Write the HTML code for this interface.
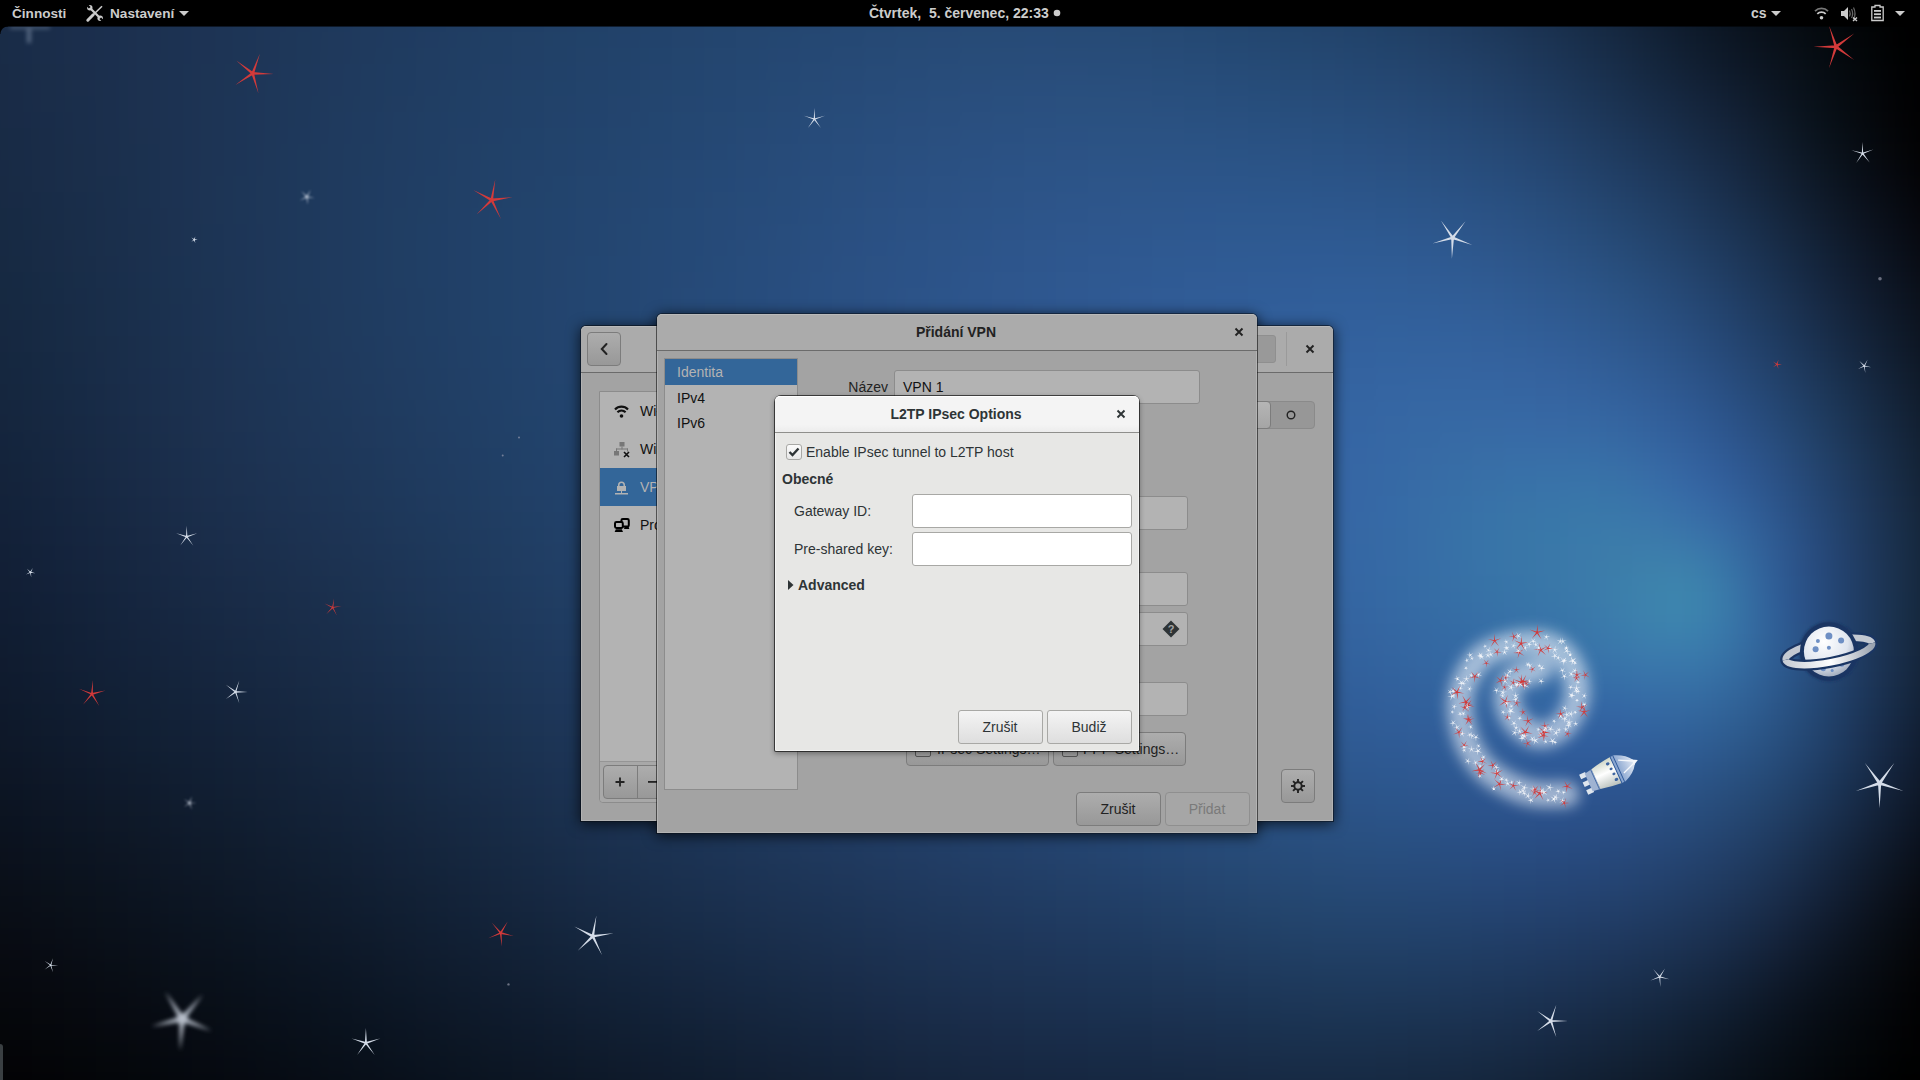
<!DOCTYPE html><html><head><meta charset="utf-8"><style>
*{box-sizing:border-box;margin:0;padding:0}
html,body{width:1920px;height:1080px;overflow:hidden;background:#000;font-family:"Liberation Sans",sans-serif}
.a{position:absolute}
.t{position:absolute;white-space:pre;font-family:"Liberation Sans",sans-serif}
svg{position:absolute;overflow:visible}
</style></head><body><div class="a" style="left:0;top:0;width:1920px;height:1080px;overflow:hidden"><div id="bgw" style="position:absolute;left:-48px;top:-48px;width:2016px;height:1176px;filter:blur(13px)"><div style="height:16px;background:linear-gradient(90deg,#192a45 0px,#192b47 32px,#1a2c49 64px,#1a2d4a 96px,#1b2e4c 128px,#1b2f4e 160px,#1c3150 192px,#1c3251 224px,#1d3353 256px,#1d3455 288px,#1d3557 320px,#1e3759 352px,#1e385a 384px,#1e395c 416px,#1f3a5d 448px,#1f3b5f 480px,#1f3c60 512px,#203d62 544px,#203e63 576px,#203f64 608px,#203f65 640px,#214067 672px,#214168 704px,#214269 736px,#22426a 768px,#22436b 800px,#23446c 832px,#23446d 864px,#23456d 896px,#24456e 928px,#24456e 960px,#24466e 992px,#24466e 1024px,#24466e 1056px,#24466e 1088px,#24456d 1120px,#23456c 1152px,#23446b 1184px,#22436a 1216px,#214268 1248px,#204166 1280px,#204064 1312px,#1f3e62 1344px,#1e3d60 1376px,#1d3b5d 1408px,#1c395a 1440px,#1b3656 1472px,#1a3352 1504px,#18304d 1536px,#172c47 1568px,#152841 1600px,#12243a 1632px,#101f32 1664px,#0e1b2b 1696px,#0b1623 1728px,#09121c 1760px,#070d15 1792px,#050a0f 1824px,#030609 1856px,#010304 1888px,#000000 1920px,#000000 1952px,#000000 1984px,#000000 2016px)"></div><div style="height:16px;background:linear-gradient(90deg,#192a45 0px,#192b47 32px,#1a2c49 64px,#1a2d4a 96px,#1b2e4c 128px,#1b2f4e 160px,#1c3150 192px,#1c3252 224px,#1d3353 256px,#1d3455 288px,#1e3657 320px,#1e3759 352px,#1e385b 384px,#1f395c 416px,#1f3a5e 448px,#1f3b5f 480px,#1f3c61 512px,#203d62 544px,#203e64 576px,#203f65 608px,#214066 640px,#214167 672px,#214169 704px,#22426a 736px,#22436b 768px,#23446c 800px,#23446d 832px,#23456e 864px,#24456f 896px,#24466f 928px,#244670 960px,#254770 992px,#254770 1024px,#254770 1056px,#244770 1088px,#24476f 1120px,#24466e 1152px,#23456d 1184px,#23456c 1216px,#22446a 1248px,#214369 1280px,#204167 1312px,#204065 1344px,#1f3e62 1376px,#1e3c60 1408px,#1d3a5d 1440px,#1c3859 1472px,#1b3555 1504px,#1a3250 1536px,#182e4a 1568px,#162a44 1600px,#14263d 1632px,#112135 1664px,#0f1c2d 1696px,#0c1726 1728px,#0a131e 1760px,#070f17 1792px,#050b11 1824px,#03070b 1856px,#010405 1888px,#000000 1920px,#000000 1952px,#000000 1984px,#000000 2016px)"></div><div style="height:16px;background:linear-gradient(90deg,#192a45 0px,#192b47 32px,#1a2c48 64px,#1a2d4a 96px,#1b2e4c 128px,#1b2f4e 160px,#1c3150 192px,#1c3252 224px,#1d3354 256px,#1d3455 288px,#1e3657 320px,#1e3759 352px,#1e385b 384px,#1f395d 416px,#1f3a5e 448px,#1f3c60 480px,#203d62 512px,#203e63 544px,#203f64 576px,#213f66 608px,#214067 640px,#214168 672px,#22426a 704px,#22436b 736px,#22446c 768px,#23446d 800px,#23456e 832px,#24466f 864px,#244670 896px,#254771 928px,#254771 960px,#254872 992px,#254872 1024px,#254872 1056px,#254872 1088px,#254871 1120px,#254771 1152px,#244770 1184px,#23466e 1216px,#23456d 1248px,#22446b 1280px,#214369 1312px,#214167 1344px,#204065 1376px,#1f3e63 1408px,#1e3c60 1440px,#1d3a5c 1472px,#1c3758 1504px,#1b3453 1536px,#19304e 1568px,#172c47 1600px,#152840 1632px,#122338 1664px,#101e30 1696px,#0d1928 1728px,#0a1420 1760px,#081019 1792px,#060c13 1824px,#04080d 1856px,#020507 1888px,#000101 1920px,#000000 1952px,#000000 1984px,#000000 2016px)"></div><div style="height:16px;background:linear-gradient(90deg,#182a45 0px,#192b46 32px,#1a2c48 64px,#1a2d4a 96px,#1b2e4c 128px,#1b2f4e 160px,#1c3150 192px,#1c3252 224px,#1d3354 256px,#1d3556 288px,#1e3658 320px,#1e375a 352px,#1e385b 384px,#1f3a5d 416px,#1f3b5f 448px,#1f3c61 480px,#203d62 512px,#203e64 544px,#203f65 576px,#214066 608px,#214168 640px,#214269 672px,#22426a 704px,#22436c 736px,#23446d 768px,#23456e 800px,#24466f 832px,#244670 864px,#254771 896px,#254872 928px,#254873 960px,#264873 992px,#264974 1024px,#264974 1056px,#264974 1088px,#264973 1120px,#254973 1152px,#254872 1184px,#244771 1216px,#23476f 1248px,#23456d 1280px,#22446c 1312px,#21436a 1344px,#214268 1376px,#204066 1408px,#1f3e63 1440px,#1e3c60 1472px,#1d395c 1504px,#1c3657 1536px,#1a3251 1568px,#182e4b 1600px,#162a43 1632px,#13253b 1664px,#112033 1696px,#0e1a2b 1728px,#0b1623 1760px,#09111c 1792px,#070d15 1824px,#050a0f 1856px,#030609 1888px,#010203 1920px,#000000 1952px,#000000 1984px,#000000 2016px)"></div><div style="height:16px;background:linear-gradient(90deg,#182a45 0px,#192b46 32px,#1a2c48 64px,#1a2d4a 96px,#1b2e4c 128px,#1b2f4e 160px,#1c3150 192px,#1c3252 224px,#1d3354 256px,#1d3556 288px,#1e3658 320px,#1e375a 352px,#1e395c 384px,#1f3a5e 416px,#1f3b5f 448px,#1f3c61 480px,#203d63 512px,#203e64 544px,#203f66 576px,#214067 608px,#214169 640px,#22426a 672px,#22436b 704px,#23446d 736px,#23456e 768px,#24456f 800px,#244670 832px,#254772 864px,#254873 896px,#254874 928px,#264974 960px,#264975 992px,#264a75 1024px,#274a76 1056px,#274a76 1088px,#264a75 1120px,#264a75 1152px,#264974 1184px,#254973 1216px,#244872 1248px,#244770 1280px,#23466e 1312px,#22456d 1344px,#22436b 1376px,#214269 1408px,#204066 1440px,#203e63 1472px,#1e3b5f 1504px,#1d385a 1536px,#1b3455 1568px,#19304e 1600px,#172c47 1632px,#14273f 1664px,#122136 1696px,#0f1c2e 1728px,#0c1725 1760px,#0a131e 1792px,#080f17 1824px,#050b10 1856px,#03070a 1888px,#010305 1920px,#000000 1952px,#000000 1984px,#000000 2016px)"></div><div style="height:16px;background:linear-gradient(90deg,#182a44 0px,#192b46 32px,#192c48 64px,#1a2d4a 96px,#1b2e4c 128px,#1b2f4e 160px,#1c3150 192px,#1c3252 224px,#1d3354 256px,#1d3556 288px,#1e3658 320px,#1e385a 352px,#1f395c 384px,#1f3a5e 416px,#1f3b60 448px,#203c62 480px,#203e63 512px,#203f65 544px,#214066 576px,#214168 608px,#214269 640px,#22426b 672px,#22436c 704px,#23446d 736px,#23456f 768px,#244670 800px,#244772 832px,#254873 864px,#254874 896px,#264975 928px,#264a76 960px,#274a77 992px,#274b77 1024px,#274b77 1056px,#274b78 1088px,#274b77 1120px,#274b77 1152px,#264b76 1184px,#264a75 1216px,#254974 1248px,#244873 1280px,#244771 1312px,#234670 1344px,#23456e 1376px,#22446c 1408px,#214269 1440px,#214066 1472px,#203d63 1504px,#1e3a5e 1536px,#1d3758 1568px,#1b3352 1600px,#182e4a 1632px,#162942 1664px,#13243a 1696px,#101e31 1728px,#0d1928 1760px,#0b1421 1792px,#091019 1824px,#060c12 1856px,#04080c 1888px,#020406 1920px,#000000 1952px,#000000 1984px,#000000 2016px)"></div><div style="height:16px;background:linear-gradient(90deg,#182944 0px,#192b46 32px,#192c48 64px,#1a2d4a 96px,#1b2e4c 128px,#1b2f4e 160px,#1c3150 192px,#1c3252 224px,#1d3354 256px,#1d3556 288px,#1e3658 320px,#1e385a 352px,#1f395c 384px,#1f3a5e 416px,#1f3c60 448px,#203d62 480px,#203e64 512px,#203f65 544px,#214067 576px,#214168 608px,#22426a 640px,#22436b 672px,#22446d 704px,#23456e 736px,#244670 768px,#244771 800px,#254773 832px,#254874 864px,#264975 896px,#264a76 928px,#274b77 960px,#274b78 992px,#284c79 1024px,#284c79 1056px,#284c7a 1088px,#284c79 1120px,#284c79 1152px,#274c79 1184px,#274b78 1216px,#264b77 1248px,#254a75 1280px,#254974 1312px,#244872 1344px,#244771 1376px,#23456f 1408px,#22446d 1440px,#22426a 1472px,#213f66 1504px,#203d62 1536px,#1e395c 1568px,#1c3556 1600px,#19304e 1632px,#172b46 1664px,#14263d 1696px,#112034 1728px,#0f1b2c 1760px,#0c1624 1792px,#0a121c 1824px,#070d14 1856px,#04090e 1888px,#020507 1920px,#000101 1952px,#000000 1984px,#000000 2016px)"></div><div style="height:16px;background:linear-gradient(90deg,#182944 0px,#182a45 32px,#192c47 64px,#1a2d49 96px,#1b2e4b 128px,#1b2f4e 160px,#1c3150 192px,#1c3252 224px,#1d3454 256px,#1d3556 288px,#1e3659 320px,#1e385b 352px,#1f395d 384px,#1f3b5f 416px,#1f3c61 448px,#203d62 480px,#203e64 512px,#213f66 544px,#214068 576px,#214169 608px,#22426b 640px,#22436c 672px,#23446e 704px,#23456f 736px,#244671 768px,#244772 800px,#254874 832px,#264975 864px,#264a77 896px,#274b78 928px,#274b79 960px,#284c7a 992px,#284d7a 1024px,#284d7b 1056px,#294d7b 1088px,#294d7c 1120px,#284d7b 1152px,#284d7b 1184px,#274d7a 1216px,#274c79 1248px,#264b78 1280px,#264b77 1312px,#254a75 1344px,#254974 1376px,#244772 1408px,#244670 1440px,#23446d 1472px,#22426a 1504px,#213f65 1536px,#1f3b60 1568px,#1d375a 1600px,#1b3352 1632px,#182e4a 1664px,#152841 1696px,#132338 1728px,#101d2f 1760px,#0d1827 1792px,#0b141f 1824px,#080f16 1856px,#050a0f 1888px,#030609 1920px,#010102 1952px,#000000 1984px,#000000 2016px)"></div><div style="height:16px;background:linear-gradient(90deg,#182943 0px,#182a45 32px,#192b47 64px,#1a2d49 96px,#1b2e4b 128px,#1b2f4d 160px,#1c3150 192px,#1c3252 224px,#1d3454 256px,#1d3556 288px,#1e3759 320px,#1e385b 352px,#1f395d 384px,#1f3b5f 416px,#1f3c61 448px,#203d63 480px,#203f65 512px,#214066 544px,#214168 576px,#21426a 608px,#22436b 640px,#22446d 672px,#23456e 704px,#234670 736px,#244772 768px,#254873 800px,#254975 832px,#264a76 864px,#274a78 896px,#274b79 928px,#284c7a 960px,#284d7b 992px,#294d7c 1024px,#294e7d 1056px,#294e7d 1088px,#294f7d 1120px,#294f7d 1152px,#294e7d 1184px,#284e7c 1216px,#284e7c 1248px,#274d7b 1280px,#264c79 1312px,#264b78 1344px,#264a77 1376px,#254975 1408px,#254873 1440px,#244671 1472px,#23446d 1504px,#224169 1536px,#203e64 1568px,#1e3a5d 1600px,#1c3556 1632px,#19304e 1664px,#172b45 1696px,#14253d 1728px,#122034 1760px,#0f1b2b 1792px,#0c1522 1824px,#081019 1856px,#060b11 1888px,#04060a 1920px,#010203 1952px,#000000 1984px,#000000 2016px)"></div><div style="height:16px;background:linear-gradient(90deg,#172943 0px,#182a45 32px,#192b47 64px,#1a2d49 96px,#1a2e4b 128px,#1b2f4d 160px,#1c3150 192px,#1c3252 224px,#1d3454 256px,#1d3557 288px,#1e3759 320px,#1e385b 352px,#1f3a5d 384px,#1f3b5f 416px,#203c61 448px,#203e63 480px,#203f65 512px,#214067 544px,#214169 576px,#22426a 608px,#22436c 640px,#23446e 672px,#23456f 704px,#244671 736px,#244773 768px,#254874 800px,#264976 832px,#264a77 864px,#274b79 896px,#284c7a 928px,#284d7c 960px,#294e7d 992px,#294e7e 1024px,#294f7e 1056px,#2a4f7f 1088px,#2a507f 1120px,#2a507f 1152px,#2a507f 1184px,#294f7f 1216px,#284f7e 1248px,#284e7d 1280px,#274e7c 1312px,#274d7b 1344px,#274c7a 1376px,#264b78 1408px,#264a76 1440px,#254874 1472px,#244671 1504px,#23436d 1536px,#224068 1568px,#203c61 1600px,#1d385a 1632px,#1b3352 1664px,#182d4a 1696px,#162841 1728px,#132238 1760px,#101d2f 1792px,#0d1725 1824px,#09121b 1856px,#060c12 1888px,#04070b 1920px,#020204 1952px,#000000 1984px,#000000 2016px)"></div><div style="height:16px;background:linear-gradient(90deg,#172943 0px,#182a45 32px,#192b47 64px,#192c49 96px,#1a2e4b 128px,#1b2f4d 160px,#1c3150 192px,#1c3252 224px,#1d3454 256px,#1d3557 288px,#1e3759 320px,#1e385b 352px,#1f3a5e 384px,#1f3b60 416px,#203d62 448px,#203e64 480px,#203f66 512px,#214067 544px,#214169 576px,#22426b 608px,#22436d 640px,#23446e 672px,#234670 704px,#244772 736px,#254873 768px,#254975 800px,#264a77 832px,#274b79 864px,#274c7a 896px,#284d7c 928px,#294d7d 960px,#294e7e 992px,#2a4f7f 1024px,#2a5080 1056px,#2a5081 1088px,#2a5181 1120px,#2a5181 1152px,#2a5181 1184px,#2a5181 1216px,#295080 1248px,#295080 1280px,#284f7f 1312px,#284f7e 1344px,#284e7d 1376px,#274d7c 1408px,#274c7a 1440px,#264a77 1472px,#254874 1504px,#244570 1536px,#23426b 1568px,#213e65 1600px,#1f3a5e 1632px,#1c3556 1664px,#1a304e 1696px,#172b45 1728px,#15253c 1760px,#121f33 1792px,#0e1a28 1824px,#0a131d 1856px,#070d14 1888px,#05080c 1920px,#030305 1952px,#000000 1984px,#000000 2016px)"></div><div style="height:16px;background:linear-gradient(90deg,#172942 0px,#182a44 32px,#182b46 64px,#192c48 96px,#1a2e4b 128px,#1b2f4d 160px,#1c314f 192px,#1c3252 224px,#1d3454 256px,#1d3557 288px,#1e3759 320px,#1e385c 352px,#1f3a5e 384px,#1f3b60 416px,#203d62 448px,#203e64 480px,#213f66 512px,#214068 544px,#21426a 576px,#22436b 608px,#22446d 640px,#23456f 672px,#234671 704px,#244772 736px,#254874 768px,#264976 800px,#264a78 832px,#274b7a 864px,#284c7b 896px,#284d7d 928px,#294e7e 960px,#2a4f7f 992px,#2a5081 1024px,#2a5082 1056px,#2b5182 1088px,#2b5183 1120px,#2b5283 1152px,#2b5283 1184px,#2b5283 1216px,#2a5283 1248px,#2a5182 1280px,#295182 1312px,#295081 1344px,#285080 1376px,#284f7f 1408px,#284d7d 1440px,#274c7b 1472px,#264a78 1504px,#254874 1536px,#24456f 1568px,#224169 1600px,#203d62 1632px,#1d385b 1664px,#1b3353 1696px,#182d4a 1728px,#162840 1760px,#132237 1792px,#0f1c2c 1824px,#0b1520 1856px,#080f17 1888px,#05090e 1920px,#030406 1952px,#010000 1984px,#000000 2016px)"></div><div style="height:16px;background:linear-gradient(90deg,#172842 0px,#182a44 32px,#182b46 64px,#192c48 96px,#1a2e4a 128px,#1b2f4d 160px,#1b314f 192px,#1c3252 224px,#1d3454 256px,#1d3557 288px,#1e3759 320px,#1e395c 352px,#1f3a5e 384px,#1f3c60 416px,#203d62 448px,#203e64 480px,#214066 512px,#214168 544px,#21426a 576px,#22436c 608px,#22446e 640px,#234570 672px,#244671 704px,#244773 736px,#254875 768px,#264a77 800px,#274b79 832px,#274c7b 864px,#284d7c 896px,#294e7e 928px,#294f7f 960px,#2a5081 992px,#2a5082 1024px,#2b5183 1056px,#2b5284 1088px,#2c5285 1120px,#2c5385 1152px,#2b5385 1184px,#2b5385 1216px,#2b5385 1248px,#2a5385 1280px,#2a5284 1312px,#2a5284 1344px,#295183 1376px,#295082 1408px,#294f80 1440px,#284e7e 1472px,#274c7b 1504px,#264a77 1536px,#254773 1568px,#23436d 1600px,#213f66 1632px,#1f3b5f 1664px,#1c3657 1696px,#1a304e 1728px,#172a45 1760px,#14243b 1792px,#111e2f 1824px,#0c1724 1856px,#091019 1888px,#060a10 1920px,#040508 1952px,#010000 1984px,#000000 2016px)"></div><div style="height:16px;background:linear-gradient(90deg,#172841 0px,#172943 32px,#182b46 64px,#192c48 96px,#1a2e4a 128px,#1b2f4d 160px,#1b314f 192px,#1c3252 224px,#1d3454 256px,#1d3557 288px,#1e3759 320px,#1e395c 352px,#1f3a5e 384px,#1f3c60 416px,#203d63 448px,#203e65 480px,#214067 512px,#214169 544px,#22426b 576px,#22436c 608px,#23446e 640px,#234670 672px,#244772 704px,#254874 736px,#254976 768px,#264a78 800px,#274b7a 832px,#284c7c 864px,#284d7d 896px,#294e7f 928px,#2a4f81 960px,#2a5082 992px,#2b5183 1024px,#2b5285 1056px,#2c5386 1088px,#2c5386 1120px,#2c5487 1152px,#2c5487 1184px,#2c5488 1216px,#2c5487 1248px,#2b5487 1280px,#2b5487 1312px,#2b5386 1344px,#2a5386 1376px,#2a5285 1408px,#2a5183 1440px,#295081 1472px,#284e7e 1504px,#274c7b 1536px,#264976 1568px,#244671 1600px,#22426a 1632px,#203d63 1664px,#1e385b 1696px,#1b3353 1728px,#192d49 1760px,#15273f 1792px,#122033 1824px,#0e1927 1856px,#0a121c 1888px,#070b13 1920px,#05060a 1952px,#020102 1984px,#000000 2016px)"></div><div style="height:16px;background:linear-gradient(90deg,#162841 0px,#172943 32px,#182b45 64px,#192c48 96px,#1a2e4a 128px,#1a2f4c 160px,#1b314f 192px,#1c3252 224px,#1d3454 256px,#1d3657 288px,#1e3759 320px,#1e395c 352px,#1f3a5e 384px,#1f3c61 416px,#203d63 448px,#203f65 480px,#214067 512px,#214169 544px,#22426b 576px,#22446d 608px,#23456f 640px,#234671 672px,#244773 704px,#254875 736px,#254977 768px,#264a79 800px,#274c7b 832px,#284d7c 864px,#294e7e 896px,#294f80 928px,#2a5082 960px,#2b5183 992px,#2b5285 1024px,#2c5386 1056px,#2c5387 1088px,#2c5488 1120px,#2d5589 1152px,#2d5589 1184px,#2c558a 1216px,#2c558a 1248px,#2c558a 1280px,#2c5589 1312px,#2b5589 1344px,#2b5488 1376px,#2b5488 1408px,#2a5386 1440px,#2a5284 1472px,#295082 1504px,#284e7e 1536px,#274b7a 1568px,#264875 1600px,#24446e 1632px,#214068 1664px,#1f3b60 1696px,#1d3657 1728px,#1a304e 1760px,#172943 1792px,#132237 1824px,#0f1b2b 1856px,#0b1420 1888px,#080d16 1920px,#06070c 1952px,#030204 1984px,#000000 2016px)"></div><div style="height:16px;background:linear-gradient(90deg,#162841 0px,#172943 32px,#182a45 64px,#182c47 96px,#192d4a 128px,#1a2f4c 160px,#1b314f 192px,#1c3252 224px,#1d3454 256px,#1d3657 288px,#1e3759 320px,#1e395c 352px,#1f3a5e 384px,#1f3c61 416px,#203d63 448px,#203f65 480px,#214067 512px,#214169 544px,#22436b 576px,#22446d 608px,#23456f 640px,#244671 672px,#244773 704px,#254875 736px,#264a77 768px,#264b79 800px,#274c7b 832px,#284d7d 864px,#294e7f 896px,#2a4f81 928px,#2a5083 960px,#2b5184 992px,#2c5286 1024px,#2c5387 1056px,#2d5488 1088px,#2d558a 1120px,#2d558a 1152px,#2d568b 1184px,#2d568b 1216px,#2d568c 1248px,#2d568c 1280px,#2c568c 1312px,#2c568c 1344px,#2c568b 1376px,#2c558a 1408px,#2b5589 1440px,#2b5487 1472px,#2a5285 1504px,#295081 1536px,#284e7d 1568px,#274b78 1600px,#254772 1632px,#23436c 1664px,#203e64 1696px,#1e395c 1728px,#1b3352 1760px,#182c47 1792px,#14253b 1824px,#101d2f 1856px,#0d1623 1888px,#090f19 1920px,#06090f 1952px,#040306 1984px,#010000 2016px)"></div><div style="height:16px;background:linear-gradient(90deg,#162840 0px,#172942 32px,#172a44 64px,#182c47 96px,#192d49 128px,#1a2f4c 160px,#1b304f 192px,#1c3251 224px,#1d3454 256px,#1d3657 288px,#1e3759 320px,#1e395c 352px,#1f3a5e 384px,#1f3c61 416px,#203e63 448px,#203f65 480px,#214068 512px,#21426a 544px,#22436c 576px,#22446e 608px,#234570 640px,#244672 672px,#244874 704px,#254976 736px,#264a78 768px,#274b7a 800px,#274c7c 832px,#284d7e 864px,#294f80 896px,#2a5082 928px,#2b5184 960px,#2b5285 992px,#2c5387 1024px,#2c5488 1056px,#2d558a 1088px,#2d558b 1120px,#2e568c 1152px,#2e578d 1184px,#2e578d 1216px,#2d578e 1248px,#2d588e 1280px,#2d588e 1312px,#2d588e 1344px,#2d578e 1376px,#2d578d 1408px,#2c568c 1440px,#2c558a 1472px,#2b5488 1504px,#2b5285 1536px,#295081 1568px,#284d7c 1600px,#264a76 1632px,#244670 1664px,#224168 1696px,#1f3b60 1728px,#1c3556 1760px,#192f4c 1792px,#152740 1824px,#122033 1856px,#0e1827 1888px,#0a111c 1920px,#070a12 1952px,#040508 1984px,#020000 2016px)"></div><div style="height:16px;background:linear-gradient(90deg,#152740 0px,#162942 32px,#172a44 64px,#182c46 96px,#192d49 128px,#1a2f4c 160px,#1b304e 192px,#1c3251 224px,#1c3454 256px,#1d3557 288px,#1e3759 320px,#1e395c 352px,#1f3a5e 384px,#1f3c61 416px,#203e63 448px,#203f66 480px,#214068 512px,#21426a 544px,#22436c 576px,#22446e 608px,#234570 640px,#244772 672px,#244874 704px,#254976 736px,#264a78 768px,#274b7b 800px,#284d7d 832px,#284e7f 864px,#294f81 896px,#2a5083 928px,#2b5185 960px,#2c5286 992px,#2c5388 1024px,#2d548a 1056px,#2d558b 1088px,#2e568c 1120px,#2e578d 1152px,#2e578e 1184px,#2e588f 1216px,#2e5890 1248px,#2e5990 1280px,#2e5990 1312px,#2e5990 1344px,#2e5990 1376px,#2d5990 1408px,#2d588f 1440px,#2d578d 1472px,#2c568b 1504px,#2c5488 1536px,#2b5284 1568px,#294f80 1600px,#274c7a 1632px,#254874 1664px,#23446d 1696px,#213e64 1728px,#1e385b 1760px,#1a3250 1792px,#172a44 1824px,#132237 1856px,#0f1a2b 1888px,#0c131f 1920px,#080c15 1952px,#05060b 1984px,#020001 2016px)"></div><div style="height:16px;background:linear-gradient(90deg,#15273f 0px,#162841 32px,#172a44 64px,#182b46 96px,#192d49 128px,#1a2f4b 160px,#1b304e 192px,#1c3251 224px,#1c3454 256px,#1d3557 288px,#1e3759 320px,#1e395c 352px,#1f3a5e 384px,#1f3c61 416px,#203e63 448px,#203f66 480px,#214068 512px,#21426a 544px,#22436c 576px,#23446e 608px,#234570 640px,#244772 672px,#254875 704px,#254977 736px,#264a79 768px,#274c7b 800px,#284d7d 832px,#294e7f 864px,#2a4f82 896px,#2a5084 928px,#2b5286 960px,#2c5387 992px,#2c5489 1024px,#2d558b 1056px,#2e568c 1088px,#2e578e 1120px,#2e578f 1152px,#2e5890 1184px,#2f5991 1216px,#2f5991 1248px,#2f5a92 1280px,#2f5a92 1312px,#2e5a93 1344px,#2e5a93 1376px,#2e5a92 1408px,#2e5a91 1440px,#2e5990 1472px,#2d588e 1504px,#2d568b 1536px,#2c5488 1568px,#2a5283 1600px,#294f7e 1632px,#274b78 1664px,#244671 1696px,#224169 1728px,#1f3b5f 1760px,#1c3455 1792px,#182d48 1824px,#14253c 1856px,#101d2f 1888px,#0d1523 1920px,#090e18 1952px,#06080d 1984px,#030203 2016px)"></div><div style="height:16px;background:linear-gradient(90deg,#15273f 0px,#162841 32px,#172a43 64px,#182b46 96px,#192d48 128px,#1a2e4b 160px,#1b304e 192px,#1b3251 224px,#1c3454 256px,#1d3556 288px,#1e3759 320px,#1e395c 352px,#1f3a5e 384px,#1f3c61 416px,#203e63 448px,#203f66 480px,#214068 512px,#21426a 544px,#22436c 576px,#23446e 608px,#234671 640px,#244773 672px,#254875 704px,#254977 736px,#264b79 768px,#274c7c 800px,#284d7e 832px,#294e80 864px,#2a5082 896px,#2b5184 928px,#2b5286 960px,#2c5388 992px,#2d548a 1024px,#2d558c 1056px,#2e568d 1088px,#2e578f 1120px,#2f5890 1152px,#2f5991 1184px,#2f5a92 1216px,#2f5a93 1248px,#2f5b94 1280px,#2f5b94 1312px,#2f5b95 1344px,#2f5b95 1376px,#2f5b94 1408px,#2f5b94 1440px,#2f5a93 1472px,#2e5991 1504px,#2e588e 1536px,#2d568b 1568px,#2c5487 1600px,#2a5182 1632px,#284e7c 1664px,#264975 1696px,#23446d 1728px,#203e64 1760px,#1d3759 1792px,#192f4d 1824px,#152740 1856px,#111f33 1888px,#0e1726 1920px,#0a101b 1952px,#070910 1984px,#040305 2016px)"></div><div style="height:16px;background:linear-gradient(90deg,#15263e 0px,#152840 32px,#162943 64px,#172b45 96px,#182d48 128px,#192e4b 160px,#1a304e 192px,#1b3251 224px,#1c3453 256px,#1d3556 288px,#1e3759 320px,#1e395c 352px,#1f3a5e 384px,#1f3c61 416px,#203e63 448px,#203f66 480px,#214068 512px,#21426a 544px,#22436c 576px,#23446e 608px,#234671 640px,#244773 672px,#254875 704px,#264977 736px,#264b7a 768px,#274c7c 800px,#284d7e 832px,#294f81 864px,#2a5083 896px,#2b5185 928px,#2b5287 960px,#2c5389 992px,#2d558b 1024px,#2e568d 1056px,#2e578e 1088px,#2f5890 1120px,#2f5991 1152px,#2f5992 1184px,#2f5a94 1216px,#305b95 1248px,#305b95 1280px,#305c96 1312px,#305c97 1344px,#305d97 1376px,#305d97 1408px,#305d96 1440px,#305c95 1472px,#2f5b93 1504px,#2f5a91 1536px,#2e588e 1568px,#2d568b 1600px,#2b5486 1632px,#295080 1664px,#274c7a 1696px,#254672 1728px,#224068 1760px,#1e395d 1792px,#1a3251 1824px,#162944 1856px,#132136 1888px,#0f192a 1920px,#0b121e 1952px,#080b12 1984px,#050508 2016px)"></div><div style="height:16px;background:linear-gradient(90deg,#14263e 0px,#152840 32px,#162942 64px,#172b45 96px,#182c48 128px,#192e4a 160px,#1a304d 192px,#1b3250 224px,#1c3353 256px,#1d3556 288px,#1e3759 320px,#1e395b 352px,#1f3a5e 384px,#1f3c61 416px,#203d63 448px,#203f65 480px,#214068 512px,#21426a 544px,#22436c 576px,#23446f 608px,#234671 640px,#244773 672px,#254875 704px,#264a78 736px,#264b7a 768px,#274c7c 800px,#284d7f 832px,#294f81 864px,#2a5083 896px,#2b5185 928px,#2c5388 960px,#2c548a 992px,#2d558c 1024px,#2e568d 1056px,#2e578f 1088px,#2f5891 1120px,#2f5992 1152px,#305a94 1184px,#305b95 1216px,#305c96 1248px,#305c97 1280px,#305d98 1312px,#305d98 1344px,#305e99 1376px,#305e99 1408px,#305e98 1440px,#305e97 1472px,#305d96 1504px,#305c94 1536px,#2f5a91 1568px,#2e588e 1600px,#2d568a 1632px,#2b5384 1664px,#284e7e 1696px,#264976 1728px,#23436d 1760px,#1f3c62 1792px,#1c3455 1824px,#182c48 1856px,#14233a 1888px,#101b2d 1920px,#0c1421 1952px,#090d15 1984px,#06060a 2016px)"></div><div style="height:16px;background:linear-gradient(90deg,#14263d 0px,#15273f 32px,#162942 64px,#172a44 96px,#182c47 128px,#192e4a 160px,#1a304d 192px,#1b3150 224px,#1c3353 256px,#1d3556 288px,#1e3758 320px,#1e385b 352px,#1f3a5e 384px,#1f3c60 416px,#203d63 448px,#203f65 480px,#214068 512px,#21426a 544px,#22436c 576px,#23446f 608px,#234671 640px,#244773 672px,#254875 704px,#264a78 736px,#274b7a 768px,#274c7d 800px,#284e7f 832px,#294f81 864px,#2a5084 896px,#2b5186 928px,#2c5388 960px,#2d548a 992px,#2d558c 1024px,#2e568e 1056px,#2f5890 1088px,#2f5992 1120px,#305a93 1152px,#305b95 1184px,#305b96 1216px,#315c97 1248px,#315d98 1280px,#315e99 1312px,#315e9a 1344px,#315f9a 1376px,#315f9b 1408px,#315f9a 1440px,#315f9a 1472px,#315e99 1504px,#315e97 1536px,#305c94 1568px,#2f5a91 1600px,#2e588d 1632px,#2c5588 1664px,#2a5182 1696px,#274b7a 1728px,#244571 1760px,#213e66 1792px,#1d3759 1824px,#192e4c 1856px,#15263e 1888px,#111d30 1920px,#0d1624 1952px,#0a0f18 1984px,#06080c 2016px)"></div><div style="height:16px;background:linear-gradient(90deg,#14253d 0px,#15273f 32px,#162841 64px,#172a44 96px,#182c47 128px,#192e4a 160px,#1a2f4d 192px,#1b3150 224px,#1c3353 256px,#1d3555 288px,#1e3758 320px,#1e385b 352px,#1f3a5d 384px,#1f3c60 416px,#203d63 448px,#203f65 480px,#214067 512px,#21426a 544px,#22436c 576px,#23446e 608px,#234671 640px,#244773 672px,#254876 704px,#264a78 736px,#274b7a 768px,#274c7d 800px,#284e7f 832px,#294f82 864px,#2a5084 896px,#2b5286 928px,#2c5388 960px,#2d548b 992px,#2d558d 1024px,#2e578f 1056px,#2f5891 1088px,#2f5992 1120px,#305a94 1152px,#305b96 1184px,#315c97 1216px,#315d99 1248px,#315e9a 1280px,#315e9b 1312px,#325f9b 1344px,#32609c 1376px,#32609c 1408px,#32619c 1440px,#32609c 1472px,#32609b 1504px,#325f99 1536px,#315e97 1568px,#305c95 1600px,#2f5a91 1632px,#2d578c 1664px,#2b5386 1696px,#294e7f 1728px,#254875 1760px,#22416a 1792px,#1e395d 1824px,#1a3150 1856px,#162841 1888px,#122034 1920px,#0e1827 1952px,#0b101a 1984px,#07090f 2016px)"></div><div style="height:16px;background:linear-gradient(90deg,#14253c 0px,#15263e 32px,#162841 64px,#172a44 96px,#182c46 128px,#192d49 160px,#1a2f4c 192px,#1b314f 224px,#1c3352 256px,#1d3555 288px,#1e3658 320px,#1e385a 352px,#1f3a5d 384px,#1f3b60 416px,#203d62 448px,#203e65 480px,#214067 512px,#214169 544px,#22436c 576px,#23446e 608px,#234671 640px,#244773 672px,#254875 704px,#264a78 736px,#274b7a 768px,#284c7d 800px,#284e7f 832px,#294f82 864px,#2a5084 896px,#2b5287 928px,#2c5389 960px,#2d548b 992px,#2e568d 1024px,#2e578f 1056px,#2f5891 1088px,#2f5993 1120px,#305a95 1152px,#305b97 1184px,#315c98 1216px,#315d9a 1248px,#325e9b 1280px,#325f9c 1312px,#32609d 1344px,#32619d 1376px,#33619e 1408px,#33629e 1440px,#33629d 1472px,#33629d 1504px,#33619c 1536px,#32609a 1568px,#325e98 1600px,#305c94 1632px,#2f5990 1664px,#2d558a 1696px,#2a5083 1728px,#274a7a 1760px,#23436f 1792px,#1f3c62 1824px,#1b3354 1856px,#172a45 1888px,#132237 1920px,#0f1a2a 1952px,#0b121d 1984px,#080b11 2016px)"></div><div style="height:16px;background:linear-gradient(90deg,#14243b 0px,#14263e 32px,#152840 64px,#162943 96px,#182b46 128px,#192d49 160px,#1a2f4c 192px,#1b314f 224px,#1c3252 256px,#1d3455 288px,#1e3657 320px,#1e385a 352px,#1f395d 384px,#1f3b5f 416px,#203d62 448px,#203e64 480px,#214067 512px,#214169 544px,#22436c 576px,#23446e 608px,#234570 640px,#244773 672px,#254875 704px,#264a78 736px,#274b7a 768px,#284c7d 800px,#284e7f 832px,#294f82 864px,#2a5084 896px,#2b5287 928px,#2c5389 960px,#2d548b 992px,#2e568e 1024px,#2e5790 1056px,#2f5892 1088px,#305994 1120px,#305b96 1152px,#315c97 1184px,#315d99 1216px,#325e9a 1248px,#325f9c 1280px,#32609d 1312px,#33619e 1344px,#33629f 1376px,#33629f 1408px,#33639f 1440px,#34639f 1472px,#34639f 1504px,#34629e 1536px,#34629d 1568px,#33609b 1600px,#325e98 1632px,#305c94 1664px,#2e588e 1696px,#2b5387 1728px,#284d7e 1760px,#254673 1792px,#213e66 1824px,#1c3658 1856px,#182d49 1888px,#14243b 1920px,#101c2d 1952px,#0c1420 1984px,#090d13 2016px)"></div><div style="height:16px;background:linear-gradient(90deg,#13243b 0px,#14263d 32px,#152740 64px,#162943 96px,#172b46 128px,#192d49 160px,#1a2e4c 192px,#1b304f 224px,#1c3251 256px,#1d3454 288px,#1d3657 320px,#1e375a 352px,#1f395c 384px,#1f3b5f 416px,#203c61 448px,#203e64 480px,#213f66 512px,#214169 544px,#22426b 576px,#23446e 608px,#234570 640px,#244773 672px,#254875 704px,#264a78 736px,#274b7a 768px,#284c7d 800px,#284e7f 832px,#294f82 864px,#2a5084 896px,#2b5287 928px,#2c5389 960px,#2d558c 992px,#2e568e 1024px,#2e5790 1056px,#2f5892 1088px,#305a94 1120px,#305b96 1152px,#315c98 1184px,#315d9a 1216px,#325e9b 1248px,#325f9d 1280px,#33609e 1312px,#33619f 1344px,#3362a0 1376px,#3463a0 1408px,#3464a1 1440px,#3464a1 1472px,#3564a0 1504px,#3564a0 1536px,#35639f 1568px,#34629e 1600px,#33609b 1632px,#315e97 1664px,#2f5a92 1696px,#2d558b 1728px,#2a4f83 1760px,#264977 1792px,#22416a 1824px,#1e395c 1856px,#19304d 1888px,#15263e 1920px,#111e30 1952px,#0d1622 1984px,#090e16 2016px)"></div><div style="height:16px;background:linear-gradient(90deg,#13233a 0px,#14253d 32px,#15273f 64px,#162942 96px,#172a45 128px,#192c48 160px,#1a2e4b 192px,#1b304e 224px,#1c3251 256px,#1d3454 288px,#1d3556 320px,#1e3759 352px,#1f395c 384px,#1f3a5e 416px,#203c61 448px,#203e63 480px,#213f66 512px,#214168 544px,#22426b 576px,#22446d 608px,#234570 640px,#244772 672px,#254875 704px,#264978 736px,#274b7a 768px,#284c7d 800px,#284e7f 832px,#294f82 864px,#2a5084 896px,#2b5287 928px,#2c5389 960px,#2d558c 992px,#2e568e 1024px,#2e5790 1056px,#2f5992 1088px,#305a95 1120px,#305b97 1152px,#315c98 1184px,#325d9a 1216px,#325f9c 1248px,#33609d 1280px,#33619f 1312px,#3362a0 1344px,#3463a1 1376px,#3464a1 1408px,#3565a2 1440px,#3566a2 1472px,#3566a2 1504px,#3566a2 1536px,#3565a1 1568px,#3564a0 1600px,#34639e 1632px,#32609b 1664px,#315d96 1696px,#2e5890 1728px,#2b5287 1760px,#274b7c 1792px,#23446f 1824px,#1f3b60 1856px,#1a3251 1888px,#162942 1920px,#122033 1952px,#0e1825 1984px,#0a1018 2016px)"></div><div style="height:16px;background:linear-gradient(90deg,#13233a 0px,#14253c 32px,#15263f 64px,#162842 96px,#172a45 128px,#182c48 160px,#1a2e4b 192px,#1b304e 224px,#1c3150 256px,#1d3353 288px,#1d3556 320px,#1e3758 352px,#1e385b 384px,#1f3a5e 416px,#1f3c60 448px,#203d63 480px,#203f65 512px,#214068 544px,#22426a 576px,#22436d 608px,#23456f 640px,#244672 672px,#254875 704px,#264977 736px,#274b7a 768px,#274c7d 800px,#284d7f 832px,#294f82 864px,#2a5084 896px,#2b5287 928px,#2c5389 960px,#2d548c 992px,#2e568e 1024px,#2e5790 1056px,#2f5993 1088px,#305a95 1120px,#315b97 1152px,#315c99 1184px,#325e9b 1216px,#325f9c 1248px,#33609e 1280px,#33619f 1312px,#3462a1 1344px,#3464a2 1376px,#3565a2 1408px,#3566a3 1440px,#3667a3 1472px,#3667a3 1504px,#3667a3 1536px,#3667a3 1568px,#3666a2 1600px,#3565a1 1632px,#34639e 1664px,#325f9a 1696px,#2f5a94 1728px,#2c558b 1760px,#294e80 1792px,#244673 1824px,#203e64 1856px,#1c3555 1888px,#172b45 1920px,#132236 1952px,#0f1928 1984px,#0b111a 2016px)"></div><div style="height:16px;background:linear-gradient(90deg,#132239 0px,#14243c 32px,#15263e 64px,#162841 96px,#172944 128px,#182b47 160px,#1a2d4a 192px,#1b2f4d 224px,#1c3150 256px,#1d3353 288px,#1d3555 320px,#1e3658 352px,#1e385a 384px,#1f395d 416px,#1f3b5f 448px,#203d62 480px,#203e65 512px,#214067 544px,#21426a 576px,#22436c 608px,#23456f 640px,#244672 672px,#254774 704px,#264977 736px,#264a7a 768px,#274c7c 800px,#284d7f 832px,#294f81 864px,#2a5084 896px,#2b5287 928px,#2c5389 960px,#2d548c 992px,#2e568e 1024px,#2e5790 1056px,#2f5993 1088px,#305a95 1120px,#315b97 1152px,#315c99 1184px,#325e9b 1216px,#325f9d 1248px,#33609e 1280px,#3362a0 1312px,#3463a1 1344px,#3564a2 1376px,#3565a3 1408px,#3667a3 1440px,#3668a4 1472px,#3669a4 1504px,#3769a4 1536px,#3769a5 1568px,#3768a4 1600px,#3668a3 1632px,#3566a1 1664px,#33629d 1696px,#315d98 1728px,#2e5790 1760px,#2a5085 1792px,#264977 1824px,#214168 1856px,#1d3758 1888px,#182d48 1920px,#142439 1952px,#101b2a 1984px,#0c131c 2016px)"></div><div style="height:16px;background:linear-gradient(90deg,#122238 0px,#13233b 32px,#14253e 64px,#162740 96px,#172943 128px,#182b46 160px,#192d49 192px,#1b2f4c 224px,#1c314f 256px,#1c3252 288px,#1d3455 320px,#1e3657 352px,#1e375a 384px,#1f395c 416px,#1f3b5f 448px,#203c61 480px,#203e64 512px,#214066 544px,#214169 576px,#22436c 608px,#23446e 640px,#244671 672px,#254774 704px,#254976 736px,#264a79 768px,#274c7c 800px,#284d7f 832px,#294e81 864px,#2a5084 896px,#2b5186 928px,#2c5389 960px,#2d548b 992px,#2e568e 1024px,#2e5790 1056px,#2f5893 1088px,#305a95 1120px,#315b97 1152px,#315d99 1184px,#325e9b 1216px,#335f9d 1248px,#33609f 1280px,#3462a0 1312px,#3463a2 1344px,#3564a3 1376px,#3566a4 1408px,#3668a4 1440px,#3669a4 1472px,#376aa5 1504px,#376ba5 1536px,#376ba6 1568px,#376ba6 1600px,#376ba5 1632px,#3669a3 1664px,#3465a0 1696px,#32609c 1728px,#2f5a94 1760px,#2c5389 1792px,#274c7c 1824px,#23436c 1856px,#1e395c 1888px,#192f4c 1920px,#15263c 1952px,#101d2c 1984px,#0c141e 2016px)"></div><div style="height:16px;background:linear-gradient(90deg,#122138 0px,#13233a 32px,#14253d 64px,#152640 96px,#172843 128px,#182a46 160px,#192c49 192px,#1a2e4c 224px,#1b304f 256px,#1c3251 288px,#1d3454 320px,#1d3556 352px,#1e3759 384px,#1e385b 416px,#1f3a5e 448px,#1f3c60 480px,#203d63 512px,#203f66 544px,#214168 576px,#22426b 608px,#23446e 640px,#244571 672px,#244773 704px,#254876 736px,#264a79 768px,#274b7b 800px,#284d7e 832px,#294e81 864px,#2a5083 896px,#2b5186 928px,#2c5389 960px,#2d548b 992px,#2e558e 1024px,#2e5790 1056px,#2f5892 1088px,#305a95 1120px,#315b97 1152px,#315c99 1184px,#325e9b 1216px,#335f9d 1248px,#33619f 1280px,#3462a1 1312px,#3463a2 1344px,#3565a3 1376px,#3666a4 1408px,#3668a5 1440px,#376aa5 1472px,#376ca5 1504px,#386da6 1536px,#386ea7 1568px,#386ea7 1600px,#376ea7 1632px,#376ca5 1664px,#3668a3 1696px,#34639f 1728px,#315d98 1760px,#2d568e 1792px,#294e80 1824px,#244570 1856px,#1f3b5f 1888px,#1a314f 1920px,#16273e 1952px,#111e2e 1984px,#0d1520 2016px)"></div><div style="height:16px;background:linear-gradient(90deg,#122137 0px,#132239 32px,#14243c 64px,#15263f 96px,#162842 128px,#182a45 160px,#192c48 192px,#1a2e4b 224px,#1b304e 256px,#1c3150 288px,#1d3353 320px,#1d3555 352px,#1e3658 384px,#1e385a 416px,#1f3a5d 448px,#1f3b60 480px,#203d62 512px,#203f65 544px,#214068 576px,#22426a 608px,#23436d 640px,#234570 672px,#244673 704px,#254875 736px,#264978 768px,#274b7b 800px,#284c7e 832px,#294e80 864px,#2a4f83 896px,#2b5186 928px,#2c5288 960px,#2d548b 992px,#2d558d 1024px,#2e5790 1056px,#2f5892 1088px,#305a95 1120px,#315b97 1152px,#315c99 1184px,#325e9b 1216px,#335f9d 1248px,#33619f 1280px,#3462a1 1312px,#3463a2 1344px,#3565a3 1376px,#3667a4 1408px,#3669a5 1440px,#376ba5 1472px,#376da6 1504px,#386fa7 1536px,#3870a8 1568px,#3871a8 1600px,#3871a8 1632px,#3870a7 1664px,#376ca6 1696px,#3566a3 1728px,#325f9c 1760px,#2e5892 1792px,#2a5084 1824px,#254774 1856px,#203d63 1888px,#1b3351 1920px,#162940 1952px,#121f30 1984px,#0d1621 2016px)"></div><div style="height:16px;background:linear-gradient(90deg,#122036 0px,#132239 32px,#14233b 64px,#15253e 96px,#162741 128px,#172944 160px,#192b47 192px,#1a2d4a 224px,#1b2f4d 256px,#1c314f 288px,#1c3252 320px,#1d3454 352px,#1d3657 384px,#1e3759 416px,#1e395c 448px,#1f3b5f 480px,#1f3c61 512px,#203e64 544px,#214067 576px,#21416a 608px,#22436c 640px,#23446f 672px,#244672 704px,#254875 736px,#264978 768px,#274b7a 800px,#284c7d 832px,#294e80 864px,#2a4f82 896px,#2b5185 928px,#2c5288 960px,#2c538a 992px,#2d558d 1024px,#2e568f 1056px,#2f5892 1088px,#305994 1120px,#305b97 1152px,#315c99 1184px,#325e9b 1216px,#335f9d 1248px,#33619f 1280px,#3462a1 1312px,#3564a2 1344px,#3565a4 1376px,#3667a5 1408px,#3669a5 1440px,#376ca6 1472px,#376ea6 1504px,#3870a7 1536px,#3872a8 1568px,#3973a9 1600px,#3974a9 1632px,#3873a8 1664px,#386fa8 1696px,#3669a6 1728px,#3463a0 1760px,#305b95 1792px,#2b5288 1824px,#264977 1856px,#213e66 1888px,#1c3454 1920px,#172a42 1952px,#122032 1984px,#0e1722 2016px)"></div><div style="height:16px;background:linear-gradient(90deg,#111f35 0px,#122138 32px,#13233b 64px,#14243d 96px,#162640 128px,#172843 160px,#182a46 192px,#1a2c49 224px,#1b2e4c 256px,#1b304e 288px,#1c3251 320px,#1d3353 352px,#1d3556 384px,#1e3758 416px,#1e385b 448px,#1f3a5e 480px,#1f3c60 512px,#203e63 544px,#213f66 576px,#214169 608px,#22426c 640px,#23446e 672px,#244671 704px,#254774 736px,#264977 768px,#274a7a 800px,#284c7c 832px,#294d7f 864px,#2a4f82 896px,#2a5084 928px,#2b5287 960px,#2c538a 992px,#2d558c 1024px,#2e568f 1056px,#2f5891 1088px,#305994 1120px,#305a96 1152px,#315c98 1184px,#325d9b 1216px,#325f9d 1248px,#33609f 1280px,#3462a1 1312px,#3564a2 1344px,#3565a4 1376px,#3667a5 1408px,#366aa6 1440px,#376da6 1472px,#376fa7 1504px,#3872a8 1536px,#3974a8 1568px,#3975a9 1600px,#3977a9 1632px,#3976a9 1664px,#3973a9 1696px,#386ea8 1728px,#3567a3 1760px,#315f99 1792px,#2c558b 1824px,#274a7a 1856px,#224068 1888px,#1d3556 1920px,#182b44 1952px,#132133 1984px,#0e1824 2016px)"></div><div style="height:16px;background:linear-gradient(90deg,#111f34 0px,#122037 32px,#13223a 64px,#14243d 96px,#15263f 128px,#172842 160px,#182a45 192px,#192c48 224px,#1a2e4b 256px,#1b2f4d 288px,#1c3150 320px,#1c3252 352px,#1d3455 384px,#1d3657 416px,#1e385a 448px,#1e395d 480px,#1f3b5f 512px,#203d62 544px,#203f65 576px,#214068 608px,#22426b 640px,#23436e 672px,#244570 704px,#254773 736px,#264876 768px,#264a79 800px,#274b7c 832px,#284d7e 864px,#294e81 896px,#2a5084 928px,#2b5186 960px,#2c5389 992px,#2d548c 1024px,#2e568e 1056px,#2f5791 1088px,#2f5993 1120px,#305a96 1152px,#315c98 1184px,#325d9a 1216px,#325f9c 1248px,#33609e 1280px,#3462a0 1312px,#3464a2 1344px,#3565a3 1376px,#3668a5 1408px,#366aa6 1440px,#376da6 1472px,#3770a7 1504px,#3873a8 1536px,#3975a8 1568px,#3977a9 1600px,#3a78a9 1632px,#3a78aa 1664px,#3a76aa 1696px,#3972a9 1728px,#376ba5 1760px,#32629c 1792px,#2d578e 1824px,#284c7d 1856px,#22416b 1888px,#1d3658 1920px,#182c46 1952px,#132234 1984px,#0e1924 2016px)"></div><div style="height:16px;background:linear-gradient(90deg,#111e34 0px,#122036 32px,#132139 64px,#14233c 96px,#15253f 128px,#162741 160px,#182944 192px,#192b47 224px,#1a2d4a 256px,#1b2e4c 288px,#1b304e 320px,#1c3251 352px,#1d3353 384px,#1d3556 416px,#1e3759 448px,#1e395b 480px,#1f3a5e 512px,#1f3c61 544px,#203e64 576px,#214067 608px,#22416a 640px,#23436d 672px,#234470 704px,#244672 736px,#254875 768px,#264978 800px,#274b7b 832px,#284c7e 864px,#294e80 896px,#2a4f83 928px,#2b5186 960px,#2c5288 992px,#2d548b 1024px,#2d558d 1056px,#2e5790 1088px,#2f5893 1120px,#305a95 1152px,#315b97 1184px,#315d9a 1216px,#325e9c 1248px,#33609e 1280px,#3462a0 1312px,#3463a2 1344px,#3565a3 1376px,#3668a4 1408px,#366aa5 1440px,#376da6 1472px,#3771a7 1504px,#3874a8 1536px,#3976a9 1568px,#3978a9 1600px,#3a7aaa 1632px,#3b7baa 1664px,#3b7aaa 1696px,#3a77aa 1728px,#3870a7 1760px,#34669e 1792px,#2e5991 1824px,#284d80 1856px,#23426d 1888px,#1d3759 1920px,#182d47 1952px,#132335 1984px,#0f1925 2016px)"></div><div style="height:16px;background:linear-gradient(90deg,#101d33 0px,#111f35 32px,#122138 64px,#13223b 96px,#15243e 128px,#162640 160px,#172843 192px,#182a46 224px,#192c49 256px,#1a2e4b 288px,#1b2f4d 320px,#1c3150 352px,#1c3352 384px,#1d3455 416px,#1d3657 448px,#1e385a 480px,#1e3a5d 512px,#1f3c60 544px,#203d63 576px,#213f66 608px,#214169 640px,#22426c 672px,#23446f 704px,#244571 736px,#254774 768px,#264977 800px,#274a7a 832px,#284c7d 864px,#294d7f 896px,#2a4f82 928px,#2b5085 960px,#2c5287 992px,#2c538a 1024px,#2d558d 1056px,#2e568f 1088px,#2f5892 1120px,#305994 1152px,#305b97 1184px,#315c99 1216px,#325e9b 1248px,#33609d 1280px,#33619f 1312px,#3463a1 1344px,#3565a3 1376px,#3568a4 1408px,#366aa5 1440px,#376da6 1472px,#3771a7 1504px,#3874a8 1536px,#3976a8 1568px,#3a78a9 1600px,#3b7aaa 1632px,#3c7caa 1664px,#3c7dab 1696px,#3c7cab 1728px,#3976a9 1760px,#3469a0 1792px,#2f5b93 1824px,#294e82 1856px,#23426e 1888px,#1e375a 1920px,#182d47 1952px,#132336 1984px,#0f1a25 2016px)"></div><div style="height:16px;background:linear-gradient(90deg,#101d32 0px,#111e34 32px,#122037 64px,#13223a 96px,#14243d 128px,#15263f 160px,#172842 192px,#182945 224px,#192b47 256px,#1a2d4a 288px,#1a2e4c 320px,#1b304e 352px,#1c3251 384px,#1c3353 416px,#1d3556 448px,#1d3759 480px,#1e395c 512px,#1f3b5f 544px,#203d62 576px,#203e65 608px,#214068 640px,#22426b 672px,#23436e 704px,#244570 736px,#254673 768px,#264876 800px,#274979 832px,#284b7c 864px,#294d7e 896px,#294e81 928px,#2a5084 960px,#2b5186 992px,#2c5389 1024px,#2d548c 1056px,#2e568e 1088px,#2f5791 1120px,#2f5993 1152px,#305a96 1184px,#315c98 1216px,#325e9a 1248px,#325f9d 1280px,#33619f 1312px,#3463a0 1344px,#3465a2 1376px,#3567a4 1408px,#366aa5 1440px,#366da6 1472px,#3770a7 1504px,#3874a8 1536px,#3976a8 1568px,#3a78a9 1600px,#3b7baa 1632px,#3c7daa 1664px,#3d80ab 1696px,#3d81ac 1728px,#3a7aaa 1760px,#356ca2 1792px,#2f5c95 1824px,#294e83 1856px,#234370 1888px,#1e385b 1920px,#192e48 1952px,#142336 1984px,#0f1a26 2016px)"></div><div style="height:16px;background:linear-gradient(90deg,#101c31 0px,#111e33 32px,#121f36 64px,#132139 96px,#14233b 128px,#15253e 160px,#162741 192px,#172944 224px,#182a46 256px,#192c48 288px,#1a2e4a 320px,#1b2f4d 352px,#1b314f 384px,#1c3352 416px,#1d3455 448px,#1d3658 480px,#1e385b 512px,#1e3a5e 544px,#1f3c61 576px,#203e64 608px,#213f67 640px,#22416a 672px,#23436c 704px,#24446f 736px,#254672 768px,#254775 800px,#264978 832px,#274a7b 864px,#284c7d 896px,#294d80 928px,#2a4f83 960px,#2b5085 992px,#2c5288 1024px,#2d548b 1056px,#2d558d 1088px,#2e5790 1120px,#2f5892 1152px,#305a95 1184px,#315b97 1216px,#315d99 1248px,#325f9c 1280px,#33609e 1312px,#3362a0 1344px,#3464a1 1376px,#3567a3 1408px,#356aa4 1440px,#366da5 1472px,#3770a6 1504px,#3773a7 1536px,#3875a8 1568px,#3a78a9 1600px,#3b7aaa 1632px,#3c7eab 1664px,#3d82ac 1696px,#3d84ad 1728px,#3b7eab 1760px,#366ea4 1792px,#2f5d96 1824px,#294f84 1856px,#234370 1888px,#1e385b 1920px,#192e48 1952px,#132436 1984px,#0f1a26 2016px)"></div><div style="height:16px;background:linear-gradient(90deg,#0f1b30 0px,#101d32 32px,#111f35 64px,#122038 96px,#13223a 128px,#14243d 160px,#162640 192px,#172842 224px,#182a45 256px,#192b47 288px,#192d49 320px,#1a2e4b 352px,#1b304e 384px,#1b3251 416px,#1c3454 448px,#1d3657 480px,#1d375a 512px,#1e395d 544px,#1f3b5f 576px,#203d62 608px,#213e65 640px,#224068 672px,#22426b 704px,#23436e 736px,#244571 768px,#254774 800px,#264877 832px,#274a79 864px,#284b7c 896px,#294d7f 928px,#2a4e82 960px,#2b5084 992px,#2b5187 1024px,#2c5389 1056px,#2d548c 1088px,#2e568f 1120px,#2f5891 1152px,#2f5994 1184px,#305b96 1216px,#315c98 1248px,#325e9b 1280px,#32609d 1312px,#33629f 1344px,#3464a0 1376px,#3466a2 1408px,#3569a4 1440px,#366ca5 1472px,#366fa6 1504px,#3772a7 1536px,#3874a8 1568px,#3977a9 1600px,#3b79aa 1632px,#3c7eab 1664px,#3d83ad 1696px,#3e86ae 1728px,#3b80ac 1760px,#3670a4 1792px,#2f5d97 1824px,#294f85 1856px,#234370 1888px,#1e385b 1920px,#182e48 1952px,#132336 1984px,#0f1a25 2016px)"></div><div style="height:16px;background:linear-gradient(90deg,#0f1b2f 0px,#101c31 32px,#111e34 64px,#122036 96px,#132239 128px,#14243c 160px,#15253f 192px,#162741 224px,#172943 256px,#182a46 288px,#192c48 320px,#1a2d4a 352px,#1a2f4d 384px,#1b314f 416px,#1c3352 448px,#1c3555 480px,#1d3758 512px,#1e385b 544px,#1f3a5e 576px,#1f3c61 608px,#203e64 640px,#213f67 672px,#22416a 704px,#23436d 736px,#244470 768px,#254673 800px,#264775 832px,#274978 864px,#284a7b 896px,#284c7e 928px,#294d80 960px,#2a4f83 992px,#2b5186 1024px,#2c5288 1056px,#2d548b 1088px,#2d558d 1120px,#2e5790 1152px,#2f5892 1184px,#305a95 1216px,#315c97 1248px,#315d99 1280px,#325f9c 1312px,#33619e 1344px,#33639f 1376px,#3465a1 1408px,#3568a3 1440px,#356ba4 1472px,#366da5 1504px,#3770a7 1536px,#3873a8 1568px,#3975a9 1600px,#3a78aa 1632px,#3c7dac 1664px,#3d82ad 1696px,#3d85af 1728px,#3b7fad 1760px,#3670a5 1792px,#305e97 1824px,#294f85 1856px,#234370 1888px,#1e385b 1920px,#182e47 1952px,#132336 1984px,#0e1925 2016px)"></div><div style="height:16px;background:linear-gradient(90deg,#0f1a2d 0px,#101c30 32px,#101d33 64px,#111f35 96px,#122138 128px,#14233b 160px,#15253d 192px,#162640 224px,#172842 256px,#182944 288px,#182b46 320px,#192d49 352px,#1a2e4b 384px,#1b304e 416px,#1b3251 448px,#1c3454 480px,#1d3657 512px,#1d385a 544px,#1e395d 576px,#1f3b60 608px,#203d63 640px,#213f66 672px,#224069 704px,#23426c 736px,#24436e 768px,#244571 800px,#254774 832px,#264877 864px,#274a7a 896px,#284b7c 928px,#294d7f 960px,#2a4e82 992px,#2b5084 1024px,#2b5187 1056px,#2c5389 1088px,#2d548c 1120px,#2e568e 1152px,#2f5891 1184px,#2f5993 1216px,#305b96 1248px,#315d98 1280px,#325e9a 1312px,#32609c 1344px,#33629e 1376px,#3464a0 1408px,#3467a2 1440px,#3569a3 1472px,#356ca5 1504px,#366ea6 1536px,#3771a7 1568px,#3873a8 1600px,#3a76aa 1632px,#3b7bac 1664px,#3c7fad 1696px,#3c82ae 1728px,#3a7cac 1760px,#366fa4 1792px,#2f5e96 1824px,#295084 1856px,#234370 1888px,#1d385b 1920px,#182d47 1952px,#132335 1984px,#0e1925 2016px)"></div><div style="height:16px;background:linear-gradient(90deg,#0e1a2c 0px,#0f1b2f 32px,#101d31 64px,#111f34 96px,#122037 128px,#13223a 160px,#14243c 192px,#15253e 224px,#162741 256px,#172943 288px,#182a45 320px,#192c47 352px,#192d4a 384px,#1a2f4d 416px,#1b3150 448px,#1c3352 480px,#1c3555 512px,#1d3759 544px,#1e385c 576px,#1f3a5f 608px,#203c62 640px,#213e65 672px,#213f67 704px,#22416a 736px,#23436d 768px,#244470 800px,#254673 832px,#264775 864px,#274978 896px,#284a7b 928px,#284c7d 960px,#294d80 992px,#2a4f83 1024px,#2b5085 1056px,#2c5288 1088px,#2d548a 1120px,#2d558d 1152px,#2e578f 1184px,#2f5892 1216px,#305a94 1248px,#305c97 1280px,#315d99 1312px,#325f9b 1344px,#32619d 1376px,#33639f 1408px,#3465a0 1440px,#3468a2 1472px,#356aa4 1504px,#366ca5 1536px,#376fa6 1568px,#3871a8 1600px,#3974a9 1632px,#3a78ab 1664px,#3b7cad 1696px,#3b7dad 1728px,#3979aa 1760px,#356da2 1792px,#2f5e94 1824px,#295083 1856px,#23436f 1888px,#1d375a 1920px,#182c46 1952px,#132234 1984px,#0e1824 2016px)"></div><div style="height:16px;background:linear-gradient(90deg,#0e192b 0px,#0f1a2e 32px,#101c30 64px,#111e33 96px,#122036 128px,#132138 160px,#14233b 192px,#15253d 224px,#16263f 256px,#162841 288px,#172944 320px,#182b46 352px,#192c48 384px,#1a2e4b 416px,#1a304e 448px,#1b3251 480px,#1c3454 512px,#1d3657 544px,#1e385a 576px,#1e395d 608px,#1f3b60 640px,#203d63 672px,#213e66 704px,#224069 736px,#23426c 768px,#24436e 800px,#254571 832px,#254674 864px,#264877 896px,#274979 928px,#284b7c 960px,#294c7f 992px,#2a4e81 1024px,#2a5084 1056px,#2b5186 1088px,#2c5389 1120px,#2d548b 1152px,#2e568e 1184px,#2e5790 1216px,#2f5993 1248px,#305b95 1280px,#305c97 1312px,#315e99 1344px,#32609b 1376px,#32629d 1408px,#33649f 1440px,#3466a1 1472px,#3468a2 1504px,#356aa4 1536px,#366ca5 1568px,#376ea7 1600px,#3871a9 1632px,#3974aa 1664px,#3a77ab 1696px,#3978ab 1728px,#3874a8 1760px,#346a9f 1792px,#2e5c92 1824px,#284f81 1856px,#22426d 1888px,#1d3659 1920px,#172b46 1952px,#122133 1984px,#0d1723 2016px)"></div><div style="height:16px;background:linear-gradient(90deg,#0e182a 0px,#0e1a2c 32px,#0f1b2f 64px,#101d32 96px,#111f34 128px,#122137 160px,#132239 192px,#14243b 224px,#15253e 256px,#162740 288px,#172842 320px,#182a44 352px,#182c47 384px,#192d4a 416px,#1a2f4d 448px,#1b3150 480px,#1b3353 512px,#1c3556 544px,#1d3759 576px,#1e385c 608px,#1f3a5f 640px,#203c62 672px,#213e65 704px,#223f67 736px,#22416a 768px,#23426d 800px,#244470 832px,#254572 864px,#264775 896px,#274878 928px,#284a7a 960px,#284b7d 992px,#294d7f 1024px,#2a4f82 1056px,#2b5085 1088px,#2b5287 1120px,#2c538a 1152px,#2d558c 1184px,#2e578e 1216px,#2e5891 1248px,#2f5a93 1280px,#305b95 1312px,#315d98 1344px,#315f9a 1376px,#32609c 1408px,#32629d 1440px,#33649f 1472px,#3466a1 1504px,#3468a2 1536px,#356aa4 1568px,#366ba6 1600px,#366da7 1632px,#3770a8 1664px,#3872a9 1696px,#3873a8 1728px,#366fa4 1760px,#32669c 1792px,#2d5a8f 1824px,#274e7e 1856px,#22416b 1888px,#1c3558 1920px,#172a44 1952px,#122032 1984px,#0d1622 2016px)"></div><div style="height:16px;background:linear-gradient(90deg,#0d1729 0px,#0e192b 32px,#0f1b2e 64px,#101c30 96px,#111e33 128px,#112035 160px,#122138 192px,#13233a 224px,#14243c 256px,#15263e 288px,#162741 320px,#172943 352px,#182b46 384px,#192c48 416px,#192e4b 448px,#1a304e 480px,#1b3251 512px,#1c3454 544px,#1d3657 576px,#1e375a 608px,#1e395d 640px,#1f3b60 672px,#203d63 704px,#213e66 736px,#224069 768px,#23416b 800px,#24436e 832px,#254471 864px,#254673 896px,#264776 928px,#274979 960px,#284a7b 992px,#294c7e 1024px,#294d80 1056px,#2a4f83 1088px,#2b5185 1120px,#2c5288 1152px,#2c548a 1184px,#2d558d 1216px,#2e578f 1248px,#2f5991 1280px,#2f5a94 1312px,#305c96 1344px,#315d98 1376px,#315f9a 1408px,#32609c 1440px,#32629d 1472px,#33649f 1504px,#3365a1 1536px,#3467a2 1568px,#3468a4 1600px,#3569a5 1632px,#356ba6 1664px,#366da6 1696px,#366ea4 1728px,#346aa0 1760px,#316398 1792px,#2c588b 1824px,#264c7b 1856px,#214069 1888px,#1b3456 1920px,#162942 1952px,#111e31 1984px,#0c1520 2016px)"></div><div style="height:16px;background:linear-gradient(90deg,#0d1727 0px,#0e182a 32px,#0e1a2c 64px,#0f1c2f 96px,#101d31 128px,#111f34 160px,#122136 192px,#132238 224px,#14233b 256px,#15253d 288px,#16263f 320px,#162841 352px,#172a44 384px,#182b47 416px,#192d4a 448px,#1a2f4d 480px,#1a3150 512px,#1b3353 544px,#1c3556 576px,#1d3659 608px,#1e385c 640px,#1f3a5f 672px,#203c61 704px,#213d64 736px,#223f67 768px,#22406a 800px,#23426c 832px,#24436f 864px,#254572 896px,#264674 928px,#274877 960px,#274979 992px,#284b7c 1024px,#294c7e 1056px,#2a4e81 1088px,#2a4f83 1120px,#2b5186 1152px,#2c5388 1184px,#2c548a 1216px,#2d568d 1248px,#2e588f 1280px,#2f5991 1312px,#2f5b94 1344px,#305c96 1376px,#305d98 1408px,#315f9a 1440px,#31609b 1472px,#32629d 1504px,#32639f 1536px,#3364a0 1568px,#3365a2 1600px,#3466a3 1632px,#3466a4 1664px,#3468a3 1696px,#3468a0 1728px,#32659b 1760px,#2f5f93 1792px,#2b5587 1824px,#254a78 1856px,#203e66 1888px,#1a3253 1920px,#152740 1952px,#101d2f 1984px,#0c131f 2016px)"></div><div style="height:16px;background:linear-gradient(90deg,#0d1626 0px,#0d1728 32px,#0e192b 64px,#0f1b2d 96px,#101c30 128px,#111e32 160px,#112035 192px,#122137 224px,#132239 256px,#14243b 288px,#15253d 320px,#162740 352px,#172942 384px,#172a45 416px,#182c48 448px,#192e4b 480px,#1a304e 512px,#1b3251 544px,#1c3454 576px,#1d3557 608px,#1e375a 640px,#1e395d 672px,#1f3b60 704px,#203c63 736px,#213e65 768px,#223f68 800px,#23416b 832px,#24426d 864px,#244470 896px,#254572 928px,#264775 960px,#274877 992px,#274a7a 1024px,#284b7c 1056px,#294d7f 1088px,#2a4e81 1120px,#2a5084 1152px,#2b5186 1184px,#2c5388 1216px,#2d558b 1248px,#2d568d 1280px,#2e588f 1312px,#2e5991 1344px,#2f5b94 1376px,#305c96 1408px,#305d97 1440px,#315e99 1472px,#315f9b 1504px,#31609c 1536px,#32619e 1568px,#32629f 1600px,#3262a0 1632px,#3262a0 1664px,#32639f 1696px,#32639c 1728px,#306196 1760px,#2d5b8e 1792px,#295283 1824px,#244874 1856px,#1f3c63 1888px,#1a3050 1920px,#14253e 1952px,#101b2d 1984px,#0b121d 2016px)"></div><div style="height:16px;background:linear-gradient(90deg,#0c1524 0px,#0d1727 32px,#0e1829 64px,#0e1a2c 96px,#0f1b2e 128px,#101d31 160px,#111f33 192px,#122035 224px,#132137 256px,#142339 288px,#14243c 320px,#15263e 352px,#162841 384px,#172943 416px,#182b46 448px,#192d49 480px,#192f4c 512px,#1a314f 544px,#1b3352 576px,#1c3455 608px,#1d3658 640px,#1e385b 672px,#1f3a5e 704px,#203b61 736px,#213d63 768px,#213e66 800px,#224069 832px,#23416b 864px,#24436e 896px,#254470 928px,#254673 960px,#264775 992px,#274878 1024px,#284a7a 1056px,#284b7d 1088px,#294d7f 1120px,#2a4f81 1152px,#2a5084 1184px,#2b5286 1216px,#2c5388 1248px,#2c558b 1280px,#2d568d 1312px,#2e588f 1344px,#2e5991 1376px,#2f5a93 1408px,#2f5b95 1440px,#305c97 1472px,#305d98 1504px,#305e9a 1536px,#315e9b 1568px,#315e9c 1600px,#315e9d 1632px,#315e9c 1664px,#305f9b 1696px,#305f97 1728px,#2e5c91 1760px,#2c5789 1792px,#284f7e 1824px,#234571 1856px,#1e3a60 1888px,#192e4d 1920px,#13233b 1952px,#0f192a 1984px,#0a101b 2016px)"></div><div style="height:16px;background:linear-gradient(90deg,#0c1423 0px,#0c1625 32px,#0d1727 64px,#0e192a 96px,#0f1a2c 128px,#101c2f 160px,#101e31 192px,#111f33 224px,#122035 256px,#132238 288px,#14233a 320px,#15253d 352px,#15273f 384px,#162842 416px,#172a45 448px,#182c48 480px,#192e4b 512px,#1a304e 544px,#1b3251 576px,#1c3354 608px,#1d3557 640px,#1d3759 672px,#1e385c 704px,#1f3a5f 736px,#203c62 768px,#213d64 800px,#223f67 832px,#224069 864px,#23416c 896px,#24436e 928px,#254471 960px,#264673 992px,#264776 1024px,#274978 1056px,#284a7a 1088px,#284c7d 1120px,#294d7f 1152px,#2a4f81 1184px,#2a5084 1216px,#2b5286 1248px,#2c5488 1280px,#2c558a 1312px,#2d568d 1344px,#2d588f 1376px,#2e5991 1408px,#2e5992 1440px,#2f5a94 1472px,#2f5b96 1504px,#2f5b97 1536px,#2f5b98 1568px,#2f5b99 1600px,#2f5b99 1632px,#2f5b98 1664px,#2f5b96 1696px,#2e5a92 1728px,#2d588c 1760px,#2a5384 1792px,#264c7a 1824px,#22426c 1856px,#1d385c 1888px,#182c4a 1920px,#122138 1952px,#0e1727 1984px,#0a0f19 2016px)"></div><div style="height:16px;background:linear-gradient(90deg,#0b1321 0px,#0c1523 32px,#0d1626 64px,#0e1828 96px,#0e192b 128px,#0f1b2d 160px,#101c2f 192px,#111e31 224px,#111f34 256px,#122136 288px,#132238 320px,#14243b 352px,#15263d 384px,#162740 416px,#172943 448px,#172b46 480px,#182d49 512px,#192f4c 544px,#1a304f 576px,#1b3252 608px,#1c3455 640px,#1d3658 672px,#1e375a 704px,#1f395d 736px,#1f3a60 768px,#203c62 800px,#213d65 832px,#223f67 864px,#23406a 896px,#23426c 928px,#24436f 960px,#254471 992px,#264673 1024px,#264776 1056px,#274978 1088px,#284a7a 1120px,#284c7d 1152px,#294d7f 1184px,#2a4f81 1216px,#2a5183 1248px,#2b5286 1280px,#2c5488 1312px,#2c558a 1344px,#2d568c 1376px,#2d578e 1408px,#2d5890 1440px,#2e5891 1472px,#2e5992 1504px,#2e5994 1536px,#2e5995 1568px,#2e5895 1600px,#2e5895 1632px,#2e5794 1664px,#2d5791 1696px,#2d568c 1728px,#2b5486 1760px,#284f7e 1792px,#254874 1824px,#203f68 1856px,#1b3557 1888px,#162a46 1920px,#121f35 1952px,#0d1625 1984px,#090d16 2016px)"></div><div style="height:16px;background:linear-gradient(90deg,#0b1320 0px,#0c1422 32px,#0c1524 64px,#0d1726 96px,#0e1829 128px,#0f1a2b 160px,#0f1b2d 192px,#101d30 224px,#111e32 256px,#122034 288px,#132136 320px,#132339 352px,#14243c 384px,#15263e 416px,#162841 448px,#172a44 480px,#182c47 512px,#192d4a 544px,#1a2f4d 576px,#1b3150 608px,#1b3353 640px,#1c3556 672px,#1d3659 704px,#1e385b 736px,#1f395e 768px,#203b60 800px,#203c63 832px,#213d65 864px,#223f68 896px,#23406a 928px,#24426c 960px,#24436f 992px,#254571 1024px,#264673 1056px,#264776 1088px,#274978 1120px,#274a7a 1152px,#284c7c 1184px,#294e7e 1216px,#294f81 1248px,#2a5183 1280px,#2b5285 1312px,#2b5387 1344px,#2c5489 1376px,#2c558b 1408px,#2c568c 1440px,#2d568e 1472px,#2d568f 1504px,#2d5690 1536px,#2d5691 1568px,#2d5691 1600px,#2d5591 1632px,#2c548f 1664px,#2c548c 1696px,#2b5387 1728px,#295080 1760px,#274b79 1792px,#23456f 1824px,#1f3c62 1856px,#1a3253 1888px,#152742 1920px,#111d31 1952px,#0c1422 1984px,#080c14 2016px)"></div><div style="height:16px;background:linear-gradient(90deg,#0b121e 0px,#0b1320 32px,#0c1422 64px,#0d1625 96px,#0d1727 128px,#0e1929 160px,#0f1a2b 192px,#101c2e 224px,#101d30 256px,#111f32 288px,#122035 320px,#132237 352px,#14233a 384px,#14253c 416px,#15273f 448px,#162942 480px,#172a45 512px,#182c48 544px,#192e4b 576px,#1a304e 608px,#1b3251 640px,#1c3354 672px,#1d3557 704px,#1d3659 736px,#1e385c 768px,#1f395e 800px,#203b61 832px,#213c63 864px,#213e65 896px,#223f68 928px,#23406a 960px,#24426c 992px,#24436f 1024px,#254471 1056px,#254673 1088px,#264775 1120px,#274977 1152px,#274a79 1184px,#284c7c 1216px,#284e7e 1248px,#294f80 1280px,#2a5182 1312px,#2a5284 1344px,#2b5386 1376px,#2b5388 1408px,#2b5489 1440px,#2c548b 1472px,#2c548c 1504px,#2c548d 1536px,#2c538d 1568px,#2c538d 1600px,#2b528c 1632px,#2b518a 1664px,#2a5087 1696px,#294f81 1728px,#284c7b 1760px,#254873 1792px,#224169 1824px,#1e395d 1856px,#192f4e 1888px,#14253d 1920px,#0f1b2d 1952px,#0b121f 1984px,#070a11 2016px)"></div><div style="height:16px;background:linear-gradient(90deg,#0a111c 0px,#0b121e 32px,#0b1321 64px,#0c1523 96px,#0d1625 128px,#0e1827 160px,#0e1929 192px,#0f1b2c 224px,#101c2e 256px,#101d30 288px,#111f33 320px,#122135 352px,#132238 384px,#14243b 416px,#15263d 448px,#162740 480px,#162943 512px,#172b46 544px,#182d49 576px,#192f4c 608px,#1a304f 640px,#1b3252 672px,#1c3455 704px,#1d3557 736px,#1e375a 768px,#1e385c 800px,#1f395e 832px,#203b61 864px,#213c63 896px,#213e66 928px,#223f68 960px,#23406a 992px,#23426c 1024px,#24436e 1056px,#254470 1088px,#254673 1120px,#264775 1152px,#264977 1184px,#274a79 1216px,#284c7b 1248px,#284d7d 1280px,#294f7f 1312px,#295081 1344px,#2a5183 1376px,#2a5184 1408px,#2a5286 1440px,#2a5287 1472px,#2b5288 1504px,#2b5189 1536px,#2b5189 1568px,#2a5089 1600px,#2a4f87 1632px,#2a4e85 1664px,#294d81 1696px,#284c7c 1728px,#264976 1760px,#24446e 1792px,#203d64 1824px,#1c3557 1856px,#182c49 1888px,#132239 1920px,#0e192a 1952px,#0a101b 1984px,#06080e 2016px)"></div><div style="height:16px;background:linear-gradient(90deg,#0a101b 0px,#0a111d 32px,#0b121f 64px,#0c1421 96px,#0c1523 128px,#0d1725 160px,#0e1827 192px,#0e192a 224px,#0f1b2c 256px,#101c2e 288px,#111e31 320px,#111f33 352px,#122136 384px,#132339 416px,#14243c 448px,#15263e 480px,#162841 512px,#172a44 544px,#182c47 576px,#192d4a 608px,#1a2f4d 640px,#1b3150 672px,#1b3252 704px,#1c3455 736px,#1d3557 768px,#1e375a 800px,#1f385c 832px,#1f395f 864px,#203b61 896px,#213c63 928px,#213d65 960px,#223f68 992px,#23406a 1024px,#23416c 1056px,#24436e 1088px,#244470 1120px,#254572 1152px,#254774 1184px,#264976 1216px,#274a78 1248px,#274c7a 1280px,#284d7c 1312px,#284e7e 1344px,#294f7f 1376px,#295081 1408px,#295082 1440px,#295083 1472px,#294f84 1504px,#294f85 1536px,#294e85 1568px,#294d84 1600px,#294d83 1632px,#284b80 1664px,#284a7c 1696px,#264877 1728px,#254571 1760px,#224069 1792px,#1f3a5f 1824px,#1b3252 1856px,#162943 1888px,#121f34 1920px,#0d1626 1952px,#090e18 1984px,#06070c 2016px)"></div><div style="height:16px;background:linear-gradient(90deg,#090f19 0px,#0a101b 32px,#0b111d 64px,#0b131f 96px,#0c1421 128px,#0d1523 160px,#0d1725 192px,#0e1828 224px,#0e1a2a 256px,#0f1b2c 288px,#101d2f 320px,#111e31 352px,#112034 384px,#122137 416px,#13233a 448px,#14253c 480px,#15273f 512px,#162942 544px,#172a45 576px,#182c48 608px,#192e4b 640px,#1a304e 672px,#1b3150 704px,#1b3253 736px,#1c3455 768px,#1d3557 800px,#1e375a 832px,#1f385c 864px,#1f395e 896px,#203b61 928px,#213c63 960px,#213d65 992px,#223f67 1024px,#224069 1056px,#23416b 1088px,#23426d 1120px,#24446f 1152px,#244571 1184px,#254773 1216px,#264875 1248px,#264a77 1280px,#274b78 1312px,#274c7a 1344px,#284d7c 1376px,#284e7d 1408px,#284e7e 1440px,#284d7f 1472px,#284d80 1504px,#284c80 1536px,#284c80 1568px,#284b7f 1600px,#274a7e 1632px,#27497b 1664px,#264777 1696px,#254572 1728px,#23416c 1760px,#213d64 1792px,#1d3659 1824px,#192e4c 1856px,#15253e 1888px,#101d2f 1920px,#0c1421 1952px,#080c15 1984px,#050509 2016px)"></div><div style="height:16px;background:linear-gradient(90deg,#090e17 0px,#090f19 32px,#0a101b 64px,#0b121d 96px,#0b131f 128px,#0c1421 160px,#0d1624 192px,#0d1726 224px,#0e1928 256px,#0f1a2a 288px,#0f1b2d 320px,#101d2f 352px,#111f32 384px,#122035 416px,#132238 448px,#13243a 480px,#14253d 512px,#152740 544px,#162943 576px,#172b46 608px,#182d49 640px,#192e4c 672px,#1a304e 704px,#1b3150 736px,#1b3253 768px,#1c3455 800px,#1d3557 832px,#1e375a 864px,#1f385c 896px,#1f395e 928px,#203a60 960px,#213c63 992px,#213d65 1024px,#223e66 1056px,#223f68 1088px,#23416a 1120px,#23426c 1152px,#23436e 1184px,#244570 1216px,#254671 1248px,#254873 1280px,#264975 1312px,#264a77 1344px,#274b78 1376px,#274b7a 1408px,#274b7b 1440px,#274b7b 1472px,#274b7c 1504px,#274a7c 1536px,#27497b 1568px,#26487a 1600px,#264779 1632px,#254676 1664px,#254472 1696px,#23416d 1728px,#223e66 1760px,#1f395e 1792px,#1c3354 1824px,#182b47 1856px,#132239 1888px,#0f1a2b 1920px,#0b121d 1952px,#070a11 1984px,#040406 2016px)"></div><div style="height:16px;background:linear-gradient(90deg,#080d16 0px,#090e17 32px,#0a0f19 64px,#0a111b 96px,#0b121d 128px,#0b131f 160px,#0c1522 192px,#0d1624 224px,#0d1726 256px,#0e1929 288px,#0f1a2b 320px,#0f1c2d 352px,#101d30 384px,#111f33 416px,#122135 448px,#132238 480px,#14243b 512px,#15263e 544px,#162841 576px,#172944 608px,#182b47 640px,#182d49 672px,#192e4c 704px,#1a304e 736px,#1b3150 768px,#1c3253 800px,#1c3455 832px,#1d3557 864px,#1e3659 896px,#1f385c 928px,#1f395e 960px,#203a60 992px,#203b62 1024px,#213c64 1056px,#213e65 1088px,#223f67 1120px,#224069 1152px,#23416b 1184px,#23436c 1216px,#24446e 1248px,#244670 1280px,#254772 1312px,#254873 1344px,#254975 1376px,#264976 1408px,#264977 1440px,#264977 1472px,#264877 1504px,#264777 1536px,#254677 1568px,#254575 1600px,#254473 1632px,#244371 1664px,#23416d 1696px,#223e67 1728px,#203b61 1760px,#1e3659 1792px,#1a2f4e 1824px,#162742 1856px,#121f34 1888px,#0e1726 1920px,#0a0f19 1952px,#06090e 1984px,#030204 2016px)"></div><div style="height:16px;background:linear-gradient(90deg,#080c14 0px,#090d16 32px,#090e17 64px,#0a1019 96px,#0a111b 128px,#0b121d 160px,#0b1320 192px,#0c1522 224px,#0d1624 256px,#0d1827 288px,#0e1929 320px,#0f1a2b 352px,#0f1c2e 384px,#101e31 416px,#111f33 448px,#122136 480px,#132339 512px,#14253c 544px,#15263f 576px,#162842 608px,#172a44 640px,#182b47 672px,#182d49 704px,#192e4c 736px,#1a2f4e 768px,#1b3150 800px,#1c3252 832px,#1c3355 864px,#1d3557 896px,#1e3659 928px,#1e375b 960px,#1f395d 992px,#203a5f 1024px,#203b61 1056px,#203c62 1088px,#213d64 1120px,#213e66 1152px,#213f67 1184px,#224169 1216px,#23426b 1248px,#23446c 1280px,#24456e 1312px,#24466f 1344px,#244771 1376px,#244772 1408px,#244772 1440px,#244673 1472px,#244673 1504px,#244573 1536px,#244472 1568px,#244370 1600px,#23416e 1632px,#22406b 1664px,#213e67 1696px,#203b62 1728px,#1e375c 1760px,#1c3253 1792px,#192c49 1824px,#15243c 1856px,#101c2f 1888px,#0c1421 1920px,#090d15 1952px,#05070b 1984px,#020101 2016px)"></div><div style="height:16px;background:linear-gradient(90deg,#070b12 0px,#080c14 32px,#090d16 64px,#090e17 96px,#0a1019 128px,#0a111b 160px,#0b121e 192px,#0b1420 224px,#0c1522 256px,#0c1624 288px,#0d1827 320px,#0e1929 352px,#0f1b2c 384px,#0f1c2f 416px,#101e31 448px,#112034 480px,#122137 512px,#13233a 544px,#14253c 576px,#15273f 608px,#162842 640px,#172a44 672px,#182b47 704px,#182d49 736px,#192e4b 768px,#1a2f4e 800px,#1b3150 832px,#1b3252 864px,#1c3354 896px,#1d3456 928px,#1e3659 960px,#1e375a 992px,#1f385c 1024px,#1f395e 1056px,#1f3a60 1088px,#203b61 1120px,#203c62 1152px,#203d64 1184px,#213f66 1216px,#214067 1248px,#224169 1280px,#22436a 1312px,#23446c 1344px,#23446d 1376px,#23446e 1408px,#23446e 1440px,#23446f 1472px,#23436e 1504px,#23426e 1536px,#23416d 1568px,#22406b 1600px,#223e69 1632px,#213d66 1664px,#203a62 1696px,#1e385c 1728px,#1d3456 1760px,#1a2f4d 1792px,#172843 1824px,#132136 1856px,#0f192a 1888px,#0b121d 1920px,#070b12 1952px,#040508 1984px,#020000 2016px)"></div><div style="height:16px;background:linear-gradient(90deg,#070a11 0px,#080b12 32px,#080c14 64px,#090d16 96px,#090f18 128px,#0a101a 160px,#0a111c 192px,#0b121e 224px,#0b1420 256px,#0c1522 288px,#0c1625 320px,#0d1827 352px,#0e192a 384px,#0f1b2c 416px,#101d2f 448px,#101e32 480px,#112035 512px,#122237 544px,#13233a 576px,#14253d 608px,#15273f 640px,#162842 672px,#172a44 704px,#172b46 736px,#182c49 768px,#192e4b 800px,#1a2f4d 832px,#1b304f 864px,#1b3252 896px,#1c3354 928px,#1d3456 960px,#1d3558 992px,#1e3659 1024px,#1e375b 1056px,#1f385d 1088px,#1f395e 1120px,#1f3a5f 1152px,#1f3b61 1184px,#203d62 1216px,#203e64 1248px,#213f65 1280px,#214066 1312px,#224168 1344px,#224269 1376px,#22426a 1408px,#22426a 1440px,#22416a 1472px,#22416a 1504px,#213f69 1536px,#213e68 1568px,#213d66 1600px,#203b63 1632px,#1f3960 1664px,#1e375c 1696px,#1d3457 1728px,#1b3050 1760px,#182b47 1792px,#15243d 1824px,#111d31 1856px,#0d1625 1888px,#0a1019 1920px,#060a0f 1952px,#040406 1984px,#010000 2016px)"></div><div style="height:16px;background:linear-gradient(90deg,#07090f 0px,#070a11 32px,#080b12 64px,#080c14 96px,#090d16 128px,#090f18 160px,#0a101a 192px,#0a111c 224px,#0b121e 256px,#0b1420 288px,#0c1523 320px,#0c1725 352px,#0d1828 384px,#0e1a2a 416px,#0f1b2d 448px,#101d30 480px,#111f32 512px,#122035 544px,#122238 576px,#13243a 608px,#14253d 640px,#15273f 672px,#162842 704px,#172944 736px,#172b46 768px,#182c48 800px,#192d4a 832px,#1a2f4d 864px,#1b304f 896px,#1b3151 928px,#1c3253 960px,#1d3355 992px,#1d3557 1024px,#1d3558 1056px,#1e3659 1088px,#1e375b 1120px,#1e385c 1152px,#1e395d 1184px,#1f3a5f 1216px,#1f3b60 1248px,#203d61 1280px,#203e63 1312px,#203f64 1344px,#213f65 1376px,#213f65 1408px,#213f66 1440px,#203f66 1472px,#203e65 1504px,#203d64 1536px,#203b63 1568px,#1f3a61 1600px,#1e385e 1632px,#1e365b 1664px,#1c3456 1696px,#1b3151 1728px,#192d4a 1760px,#162741 1792px,#132137 1824px,#0f1a2b 1856px,#0c1420 1888px,#080e16 1920px,#06080d 1952px,#030304 1984px,#000000 2016px)"></div><div style="height:16px;background:linear-gradient(90deg,#06080e 0px,#07090f 32px,#070a11 64px,#080b12 96px,#080c14 128px,#080e16 160px,#090f18 192px,#09101a 224px,#0a111c 256px,#0a131e 288px,#0b1421 320px,#0c1523 352px,#0c1726 384px,#0d1828 416px,#0e1a2b 448px,#0f1c2d 480px,#101d30 512px,#111f33 544px,#122135 576px,#132238 608px,#13243a 640px,#14253d 672px,#15263f 704px,#162841 736px,#162943 768px,#172a46 800px,#182c48 832px,#192d4a 864px,#1a2e4c 896px,#1b2f4e 928px,#1b3150 960px,#1c3252 992px,#1c3354 1024px,#1d3455 1056px,#1d3456 1088px,#1d3558 1120px,#1d3659 1152px,#1d375a 1184px,#1e385b 1216px,#1e395c 1248px,#1f3a5e 1280px,#1f3b5f 1312px,#1f3c60 1344px,#1f3d61 1376px,#1f3d61 1408px,#1f3d61 1440px,#1f3c61 1472px,#1f3b60 1504px,#1f3a5f 1536px,#1e395e 1568px,#1e375b 1600px,#1d3559 1632px,#1c3355 1664px,#1a3150 1696px,#192e4b 1728px,#172944 1760px,#14243b 1792px,#111d31 1824px,#0d1726 1856px,#0a111c 1888px,#070c13 1920px,#05070a 1952px,#020202 1984px,#000000 2016px)"></div><div style="height:16px;background:linear-gradient(90deg,#06070c 0px,#06080d 32px,#06090f 64px,#070a10 96px,#070b12 128px,#080c14 160px,#080e16 192px,#090f18 224px,#09101a 256px,#0a111c 288px,#0a131f 320px,#0b1421 352px,#0c1523 384px,#0c1726 416px,#0d1929 448px,#0e1a2b 480px,#0f1c2e 512px,#101d30 544px,#111f33 576px,#122135 608px,#122238 640px,#13233a 672px,#14253c 704px,#15263e 736px,#162741 768px,#162943 800px,#172a45 832px,#182b47 864px,#192c49 896px,#1a2e4b 928px,#1a2f4d 960px,#1b304f 992px,#1b3151 1024px,#1c3252 1056px,#1c3353 1088px,#1c3354 1120px,#1c3455 1152px,#1c3557 1184px,#1d3658 1216px,#1d3759 1248px,#1d385a 1280px,#1e395b 1312px,#1e395c 1344px,#1e3a5c 1376px,#1e3a5d 1408px,#1e3a5d 1440px,#1e395d 1472px,#1e385c 1504px,#1d375a 1536px,#1d3659 1568px,#1c3456 1600px,#1b3253 1632px,#1a304f 1664px,#192d4b 1696px,#172a45 1728px,#15263e 1760px,#122035 1792px,#0f1a2b 1824px,#0b1421 1856px,#090f18 1888px,#060a10 1920px,#040508 1952px,#010101 1984px,#000000 2016px)"></div><div style="height:16px;background:linear-gradient(90deg,#05060a 0px,#05070c 32px,#06080d 64px,#06090f 96px,#070a10 128px,#070b12 160px,#080c14 192px,#080e16 224px,#090f18 256px,#09101a 288px,#0a111d 320px,#0a131f 352px,#0b1421 384px,#0c1624 416px,#0c1726 448px,#0d1929 480px,#0e1a2b 512px,#0f1c2e 544px,#101d30 576px,#111f33 608px,#122035 640px,#122237 672px,#13233a 704px,#14243c 736px,#15263e 768px,#152740 800px,#162842 832px,#172a44 864px,#182b47 896px,#192c49 928px,#192d4b 960px,#1a2e4c 992px,#1b2f4e 1024px,#1b304f 1056px,#1b3150 1088px,#1b3151 1120px,#1b3252 1152px,#1b3353 1184px,#1c3454 1216px,#1c3455 1248px,#1c3556 1280px,#1c3657 1312px,#1d3758 1344px,#1d3758 1376px,#1d3759 1408px,#1d3758 1440px,#1d3758 1472px,#1c3657 1504px,#1c3456 1536px,#1b3353 1568px,#1b3151 1600px,#1a2f4e 1632px,#182d4a 1664px,#172a45 1696px,#15273f 1728px,#132238 1760px,#101d2f 1792px,#0d1726 1824px,#0a111c 1856px,#070d14 1888px,#05080e 1920px,#030407 1952px,#010000 1984px,#000000 2016px)"></div><div style="height:16px;background:linear-gradient(90deg,#040509 0px,#05060a 32px,#05070c 64px,#06080d 96px,#06090f 128px,#070a11 160px,#070b12 192px,#070c14 224px,#080e16 256px,#080f18 288px,#09101b 320px,#09111d 352px,#0a131f 384px,#0b1422 416px,#0c1624 448px,#0d1727 480px,#0d1929 512px,#0e1a2c 544px,#0f1c2e 576px,#101d30 608px,#111f33 640px,#112035 672px,#122137 704px,#132339 736px,#14243b 768px,#15253d 800px,#15273f 832px,#162842 864px,#172944 896px,#182a46 928px,#192b48 960px,#192c49 992px,#1a2d4b 1024px,#1a2e4c 1056px,#1a2f4d 1088px,#1a2f4e 1120px,#1a304f 1152px,#1a3150 1184px,#1b3151 1216px,#1b3251 1248px,#1b3352 1280px,#1b3453 1312px,#1b3454 1344px,#1c3554 1376px,#1b3554 1408px,#1b3454 1440px,#1b3453 1472px,#1b3352 1504px,#1b3251 1536px,#1a304e 1568px,#192e4c 1600px,#182c48 1632px,#172a44 1664px,#15273f 1696px,#132339 1728px,#111f32 1760px,#0e1a2a 1792px,#0b1421 1824px,#080f18 1856px,#060b11 1888px,#04070b 1920px,#020305 1952px,#000000 1984px,#000000 2016px)"></div><div style="height:16px;background:linear-gradient(90deg,#040407 0px,#040508 32px,#05060a 64px,#05070b 96px,#06080d 128px,#06090f 160px,#060a11 192px,#070b12 224px,#070c14 256px,#080e16 288px,#080f19 320px,#09101b 352px,#09121d 384px,#0a131f 416px,#0b1422 448px,#0c1624 480px,#0d1827 512px,#0d1929 544px,#0e1a2c 576px,#0f1c2e 608px,#101d30 640px,#111f32 672px,#112034 704px,#122136 736px,#132238 768px,#14243a 800px,#14253d 832px,#15263f 864px,#162741 896px,#172843 928px,#182a45 960px,#182b46 992px,#192b48 1024px,#192c49 1056px,#192d4a 1088px,#192d4b 1120px,#192e4c 1152px,#192e4c 1184px,#1a2f4d 1216px,#1a304e 1248px,#1a304f 1280px,#1a314f 1312px,#1a3250 1344px,#1a3250 1376px,#1a3250 1408px,#1a3250 1440px,#1a314f 1472px,#1a304e 1504px,#192f4c 1536px,#192d4a 1568px,#182b47 1600px,#172943 1632px,#15273f 1664px,#13243a 1696px,#112034 1728px,#0f1c2d 1760px,#0c1725 1792px,#0a121d 1824px,#070d15 1856px,#05090f 1888px,#030609 1920px,#020204 1952px,#000000 1984px,#000000 2016px)"></div><div style="height:16px;background:linear-gradient(90deg,#030306 0px,#040407 32px,#040508 64px,#05060a 96px,#05070b 128px,#05080d 160px,#06090f 192px,#060a11 224px,#070b13 256px,#070c15 288px,#070e17 320px,#080f19 352px,#09101b 384px,#09121d 416px,#0a1320 448px,#0b1522 480px,#0c1624 512px,#0d1827 544px,#0d1929 576px,#0e1a2b 608px,#0f1c2d 640px,#101d30 672px,#101e32 704px,#111f33 736px,#122135 768px,#132238 800px,#14233a 832px,#14243c 864px,#15253e 896px,#162740 928px,#172842 960px,#172943 992px,#182945 1024px,#182a46 1056px,#182b47 1088px,#182b48 1120px,#182c48 1152px,#182c49 1184px,#192d4a 1216px,#192d4a 1248px,#192e4b 1280px,#192f4b 1312px,#192f4c 1344px,#192f4c 1376px,#192f4c 1408px,#192f4b 1440px,#192e4a 1472px,#182d49 1504px,#182c47 1536px,#172a45 1568px,#162842 1600px,#15263e 1632px,#14243a 1664px,#122135 1696px,#101d2f 1728px,#0d1928 1760px,#0b1421 1792px,#081019 1824px,#060b12 1856px,#04080d 1888px,#030508 1920px,#010203 1952px,#000000 1984px,#000000 2016px)"></div><div style="height:16px;background:linear-gradient(90deg,#030204 0px,#030305 32px,#040407 64px,#040508 96px,#04060a 128px,#05070b 160px,#05080d 192px,#05090f 224px,#060a11 256px,#060b13 288px,#070c15 320px,#070e17 352px,#080f19 384px,#09101b 416px,#09121e 448px,#0a1320 480px,#0b1522 512px,#0c1624 544px,#0d1727 576px,#0d1929 608px,#0e1a2b 640px,#0f1b2d 672px,#101c2f 704px,#101e31 736px,#111f33 768px,#122035 800px,#132137 832px,#132339 864px,#14243b 896px,#15253d 928px,#16263f 960px,#162740 992px,#172842 1024px,#172843 1056px,#172944 1088px,#172944 1120px,#172a45 1152px,#172a46 1184px,#172b46 1216px,#182b47 1248px,#182c47 1280px,#182c48 1312px,#182d48 1344px,#182d48 1376px,#182d48 1408px,#182c47 1440px,#172c46 1472px,#172b45 1504px,#162942 1536px,#162840 1568px,#15263d 1600px,#132339 1632px,#122135 1664px,#101e30 1696px,#0e1a2a 1728px,#0c1624 1760px,#0a121d 1792px,#070e16 1824px,#050a10 1856px,#03070a 1888px,#020406 1920px,#000101 1952px,#000000 1984px,#000000 2016px)"></div><div style="height:16px;background:linear-gradient(90deg,#020102 0px,#030204 32px,#030305 64px,#030406 96px,#040508 128px,#04060a 160px,#04070b 192px,#05080d 224px,#05090f 256px,#060a11 288px,#060b13 320px,#070c15 352px,#070e17 384px,#080f19 416px,#09101b 448px,#09121e 480px,#0a1320 512px,#0b1522 544px,#0c1624 576px,#0c1726 608px,#0d1828 640px,#0e1a2a 672px,#0f1b2c 704px,#0f1c2e 736px,#101d30 768px,#111e32 800px,#122034 832px,#132136 864px,#132238 896px,#14233a 928px,#15243c 960px,#15253d 992px,#16263e 1024px,#16263f 1056px,#162740 1088px,#162741 1120px,#162842 1152px,#162842 1184px,#162843 1216px,#162943 1248px,#172943 1280px,#172a44 1312px,#172a44 1344px,#172a44 1376px,#162a44 1408px,#162a43 1440px,#162942 1472px,#162840 1504px,#15273e 1536px,#14253b 1568px,#132338 1600px,#122134 1632px,#101e30 1664px,#0f1b2b 1696px,#0d1726 1728px,#0a141f 1760px,#081019 1792px,#060c13 1824px,#04080d 1856px,#030508 1888px,#010204 1920px,#000000 1952px,#000000 1984px,#000000 2016px)"></div><div style="height:16px;background:linear-gradient(90deg,#020101 0px,#020102 32px,#030203 64px,#030305 96px,#030406 128px,#040508 160px,#040609 192px,#04070b 224px,#05080d 256px,#05090f 288px,#050a11 320px,#060b13 352px,#070c15 384px,#070e17 416px,#080f19 448px,#09101b 480px,#09121e 512px,#0a1320 544px,#0b1422 576px,#0c1624 608px,#0c1726 640px,#0d1828 672px,#0e192a 704px,#0e1a2c 736px,#0f1c2d 768px,#101d2f 800px,#111e31 832px,#121f33 864px,#122035 896px,#132137 928px,#142239 960px,#14233a 992px,#15243b 1024px,#15243c 1056px,#15253d 1088px,#15253e 1120px,#15263e 1152px,#15263f 1184px,#15263f 1216px,#15273f 1248px,#152740 1280px,#162740 1312px,#152840 1344px,#152840 1376px,#15283f 1408px,#15273f 1440px,#15263d 1472px,#14253c 1504px,#14243a 1536px,#132237 1568px,#122034 1600px,#111e30 1632px,#0f1b2c 1664px,#0d1827 1696px,#0b1521 1728px,#09111c 1760px,#070e16 1792px,#050a10 1824px,#03070b 1856px,#020406 1888px,#000102 1920px,#000000 1952px,#000000 1984px,#000000 2016px)"></div><div style="height:16px;background:linear-gradient(90deg,#010000 0px,#020001 32px,#020102 64px,#020203 96px,#030305 128px,#030406 160px,#030508 192px,#040609 224px,#04070b 256px,#04080d 288px,#05090f 320px,#050a11 352px,#060b13 384px,#070c15 416px,#070e17 448px,#080f19 480px,#09101b 512px,#09121d 544px,#0a131f 576px,#0b1421 608px,#0c1523 640px,#0c1725 672px,#0d1827 704px,#0e1929 736px,#0e1a2b 768px,#0f1b2d 800px,#101c2f 832px,#111d31 864px,#111e32 896px,#121f34 928px,#132036 960px,#132137 992px,#142238 1024px,#142239 1056px,#14233a 1088px,#14233b 1120px,#14243b 1152px,#14243b 1184px,#14243c 1216px,#14243c 1248px,#14253c 1280px,#14253c 1312px,#14253c 1344px,#14253c 1376px,#14253b 1408px,#14253b 1440px,#132439 1472px,#132337 1504px,#122135 1536px,#112032 1568px,#101e2f 1600px,#0f1b2c 1632px,#0e1927 1664px,#0c1623 1696px,#0a131d 1728px,#080f18 1760px,#060c12 1792px,#04080d 1824px,#020508 1856px,#010204 1888px,#000000 1920px,#000000 1952px,#000000 1984px,#000000 2016px)"></div></div></div><svg style="left:0;top:0" width="1920" height="1080" viewBox="0 0 1920 1080"><defs><filter id="b1" x="-50%" y="-50%" width="200%" height="200%"><feGaussianBlur stdDeviation="0.9"/></filter><filter id="b2" x="-50%" y="-50%" width="200%" height="200%"><feGaussianBlur stdDeviation="2"/></filter><filter id="gl" x="-50%" y="-50%" width="200%" height="200%"><feGaussianBlur stdDeviation="7"/></filter><filter id="s05" x="-50%" y="-50%" width="200%" height="200%"><feGaussianBlur stdDeviation="0.35"/></filter></defs><g filter="url(#s05)"><path d="M273.7 74.1L252.7 74.8L252.7 72.0ZM258.5 93.6L251.4 73.8L254.0 73.0ZM235.3 85.1L251.9 72.3L253.5 74.5ZM236.2 60.5L253.5 72.3L251.9 74.5ZM259.9 53.7L254.0 73.9L251.4 72.9Z" fill="#d23a3a"/><circle cx="252.7" cy="73.4" r="1.9" fill="#d23a3a"/><path d="M197.7 239.7L194.2 240.2L194.2 239.1ZM195.3 243.0L193.7 239.9L194.7 239.5ZM191.4 241.8L193.9 239.3L194.5 240.1ZM191.4 237.6L194.5 239.3L193.9 240.1ZM195.3 236.4L194.7 239.9L193.7 239.5Z" fill="#d4dce8"/><circle cx="194.2" cy="239.7" r="0.8" fill="#d4dce8"/><path d="M512.5 197.1L491.9 201.4L491.5 198.6ZM500.9 218.9L490.5 200.6L492.9 199.4ZM476.6 214.6L490.8 199.0L492.6 201.0ZM473.2 190.1L492.3 198.8L491.1 201.2ZM495.3 179.3L493.0 200.2L490.4 199.8Z" fill="#d23a3a"/><circle cx="491.7" cy="200" r="1.9" fill="#d23a3a"/><path d="M197.2 533.3L186.9 537.4L186.5 536.0ZM193.2 545.6L186.1 537.1L187.3 536.3ZM180.2 545.6L186.1 536.3L187.3 537.1ZM176.2 533.3L186.9 536.0L186.5 537.4ZM186.7 525.7L187.4 536.7L186.0 536.7Z" fill="#d4dce8"/><circle cx="186.7" cy="536.7" r="1.0" fill="#d4dce8"/><path d="M35.4 573.2L30.4 572.8L30.6 571.8ZM31.2 577.3L30.0 572.4L31.0 572.2ZM26.0 574.5L30.3 571.8L30.7 572.8ZM27.0 568.7L30.9 571.9L30.1 572.7ZM32.8 567.9L31.0 572.6L30.0 572.0Z" fill="#d4dce8"/><circle cx="30.5" cy="572.3" r="0.8" fill="#d4dce8"/><path d="M341.6 605.9L332.8 608.1L332.6 606.9ZM336.9 615.4L332.2 607.8L333.2 607.2ZM326.4 614.0L332.3 607.1L333.1 607.9ZM324.6 603.6L333.0 607.0L332.4 608.0ZM334.0 598.6L333.3 607.6L332.1 607.4Z" fill="#d23a3a"/><circle cx="332.7" cy="607.5" r="0.8" fill="#d23a3a"/><path d="M105.5 690.6L92.1 694.9L91.7 693.1ZM99.3 705.9L91.1 694.5L92.7 693.5ZM82.9 704.7L91.2 693.4L92.6 694.6ZM78.9 688.8L92.2 693.2L91.6 694.8ZM92.9 680.0L92.8 694.1L91.0 693.9Z" fill="#d23a3a"/><circle cx="91.9" cy="694" r="1.3" fill="#d23a3a"/><path d="M247.6 691.9L235.6 692.7L235.6 691.1ZM239.3 703.3L234.9 692.1L236.3 691.7ZM225.9 699.0L235.1 691.3L236.1 692.5ZM225.9 684.8L236.1 691.3L235.1 692.5ZM239.3 680.5L236.3 692.1L234.9 691.7Z" fill="#d4dce8"/><circle cx="235.6" cy="691.9" r="1.1" fill="#d4dce8"/><path d="M58.1 965.2L50.7 965.8L50.7 964.7ZM53.0 972.2L50.2 965.4L51.2 965.0ZM44.7 969.5L50.4 964.8L51.0 965.6ZM44.7 960.9L51.0 964.8L50.4 965.6ZM53.0 958.2L51.2 965.4L50.2 965.0Z" fill="#d4dce8"/><circle cx="50.7" cy="965.2" r="0.8" fill="#d4dce8"/><path d="M380.2 1038.4L366.2 1043.9L365.6 1042.1ZM374.7 1055.1L365.1 1043.6L366.7 1042.4ZM357.1 1055.1L365.1 1042.4L366.7 1043.6ZM351.6 1038.4L366.2 1042.1L365.6 1043.9ZM365.9 1028.0L366.9 1043.0L364.9 1043.0Z" fill="#d4dce8"/><circle cx="365.9" cy="1043" r="1.3" fill="#d4dce8"/><path d="M513.9 936.0L500.5 933.9L500.9 932.1ZM501.9 946.4L499.8 933.1L501.6 932.9ZM488.3 938.3L500.4 932.2L501.0 933.8ZM491.8 922.8L501.4 932.4L500.0 933.6ZM507.7 921.4L501.5 933.5L499.9 932.5Z" fill="#d23a3a"/><circle cx="500.7" cy="933" r="1.2" fill="#d23a3a"/><path d="M613.6 933.3L593.0 937.6L592.6 934.9ZM602.0 955.1L591.6 936.8L594.0 935.7ZM577.7 950.8L591.9 935.3L593.7 937.2ZM574.3 926.4L593.4 935.0L592.2 937.5ZM596.4 915.6L594.1 936.5L591.5 936.0Z" fill="#d4dce8"/><circle cx="592.8" cy="936.25" r="1.9" fill="#d4dce8"/><path d="M824.9 115.7L814.6 119.8L814.2 118.4ZM820.9 128.0L813.8 119.5L815.0 118.7ZM807.9 128.0L813.8 118.7L815.0 119.5ZM803.9 115.7L814.6 118.4L814.2 119.8ZM814.4 108.1L815.1 119.1L813.7 119.1Z" fill="#d4dce8"/><circle cx="814.4" cy="119.1" r="1.0" fill="#d4dce8"/><path d="M1854.2 60.0L1835.1 48.0L1836.9 45.6ZM1829.0 68.2L1834.6 46.3L1837.4 47.3ZM1813.5 46.8L1836.0 45.3L1836.0 48.3ZM1829.0 25.4L1837.4 46.3L1834.6 47.3ZM1854.2 33.6L1836.9 48.0L1835.1 45.6Z" fill="#d23a3a"/><circle cx="1836" cy="46.8" r="2.0" fill="#d23a3a"/><path d="M1873.4 149.5L1862.9 154.1L1862.3 152.7ZM1869.7 162.5L1862.0 153.9L1863.2 152.9ZM1856.2 162.9L1862.0 153.0L1863.2 153.8ZM1851.5 150.2L1862.8 152.7L1862.4 154.1ZM1862.2 141.9L1863.3 153.4L1861.9 153.4Z" fill="#d4dce8"/><circle cx="1862.6" cy="153.4" r="1.0" fill="#d4dce8"/><path d="M1472.3 245.0L1452.1 239.1L1453.1 236.5ZM1451.9 258.8L1451.2 237.8L1454.0 237.8ZM1432.4 243.6L1452.2 236.5L1453.0 239.1ZM1440.9 220.4L1453.7 237.0L1451.5 238.6ZM1465.5 221.3L1453.7 238.6L1451.5 237.0Z" fill="#d4dce8"/><circle cx="1452.6" cy="237.8" r="1.9" fill="#d4dce8"/><path d="M1782.0 364.3L1777.0 364.9L1777.0 363.8ZM1778.5 369.1L1776.5 364.5L1777.5 364.1ZM1773.0 367.2L1776.7 363.9L1777.3 364.7ZM1773.0 361.4L1777.3 363.9L1776.7 364.7ZM1778.5 359.5L1777.5 364.5L1776.5 364.1Z" fill="#d23a3a"/><circle cx="1777" cy="364.3" r="0.8" fill="#d23a3a"/><path d="M1871.2 367.2L1864.2 366.5L1864.4 365.5ZM1865.3 372.9L1863.8 366.1L1864.8 365.9ZM1858.0 369.1L1864.1 365.5L1864.5 366.5ZM1859.4 361.0L1864.7 365.6L1863.9 366.4ZM1867.6 359.8L1864.8 366.3L1863.8 365.7Z" fill="#d4dce8"/><circle cx="1864.3" cy="366" r="0.8" fill="#d4dce8"/><path d="M1568.0 1021.0L1551.0 1022.1L1551.0 1019.9ZM1556.3 1037.2L1549.9 1021.3L1552.1 1020.7ZM1537.2 1031.0L1550.4 1020.1L1551.6 1021.9ZM1537.2 1011.0L1551.6 1020.1L1550.4 1021.9ZM1556.3 1004.8L1552.1 1021.3L1549.9 1020.7Z" fill="#d4dce8"/><circle cx="1551" cy="1021" r="1.5" fill="#d4dce8"/><path d="M1669.4 979.3L1659.5 977.5L1659.9 976.3ZM1660.4 986.9L1659.1 976.9L1660.3 976.9ZM1650.4 980.6L1659.5 976.3L1659.9 977.5ZM1653.3 969.2L1660.2 976.5L1659.2 977.3ZM1665.0 968.4L1660.3 977.2L1659.1 976.6Z" fill="#d4dce8"/><circle cx="1659.7" cy="976.9" r="0.9" fill="#d4dce8"/><path d="M1894.3 763.1L1880.9 784.3L1878.3 782.3ZM1903.4 791.0L1879.1 784.8L1880.1 781.8ZM1879.6 808.3L1878.0 783.3L1881.2 783.3ZM1855.8 791.0L1879.1 781.8L1880.1 784.8ZM1864.9 763.1L1880.9 782.3L1878.3 784.3Z" fill="#d4dce8"/><circle cx="1879.6" cy="783.3" r="2.2" fill="#d4dce8"/></g><g filter="url(#b1)" opacity="0.85"><path d="M314.8 198.3L306.8 197.6L307.0 196.2ZM308.0 204.8L306.2 197.0L307.6 196.8ZM299.7 200.4L306.6 196.3L307.2 197.5ZM301.3 191.1L307.4 196.4L306.4 197.4ZM310.7 189.8L307.5 197.2L306.3 196.6Z" fill="#d4dce8"/><circle cx="306.9" cy="196.9" r="1.4" fill="#d4dce8"/></g><g filter="url(#b1)" opacity="0.85"><path d="M196.6 803.0L189.6 803.6L189.6 802.4ZM191.8 809.7L189.0 803.2L190.2 802.8ZM183.9 807.1L189.3 802.5L189.9 803.5ZM183.9 798.9L189.9 802.5L189.3 803.5ZM191.8 796.3L190.2 803.2L189.0 802.8Z" fill="#d4dce8"/><circle cx="189.6" cy="803" r="1.3" fill="#d4dce8"/></g><g filter="url(#b2)" opacity="0.85"><path d="M211.9 1030.9L181.2 1021.4L183.2 1016.4ZM180.0 1050.8L179.5 1018.7L184.9 1019.1ZM151.2 1026.6L181.5 1016.3L182.9 1021.5ZM165.2 991.8L184.5 1017.5L179.9 1020.3ZM202.8 994.4L184.3 1020.6L180.1 1017.2Z" fill="#d4dce8"/><circle cx="182.2" cy="1018.9" r="5.8" fill="#d4dce8"/></g><circle cx="519" cy="437.6" r="1" fill="#aab" opacity="0.6"/><circle cx="502.7" cy="455.5" r="1" fill="#aab" opacity="0.6"/><circle cx="508.5" cy="984.4" r="1.2" fill="#aab" opacity="0.6"/><circle cx="1880" cy="278.8" r="1.8" fill="#aab" opacity="0.6"/><g filter="url(#b2)" opacity="0.35"><rect x="27" y="26" width="4" height="17" fill="#cde"/><rect x="10" y="26" width="40" height="3" fill="#abc"/></g><path d="M1540.4 669.3 L1538.9 669.8 L1536.8 670.4 L1534.3 671.0 L1531.5 671.8 L1528.6 672.6 L1525.6 673.5 L1522.7 674.5 L1520.0 675.6 L1517.6 676.8 L1515.7 678.1 L1514.1 679.5 L1512.7 681.0 L1511.4 682.6 L1510.3 684.3 L1509.3 686.0 L1508.5 687.9 L1507.9 689.8 L1507.4 691.7 L1507.1 693.7 L1506.9 695.7 L1506.9 697.8 L1507.1 700.1 L1507.4 702.4 L1508.0 704.8 L1508.6 707.3 L1509.4 709.7 L1510.4 712.1 L1511.5 714.4 L1512.6 716.6 L1513.9 718.6 L1515.3 720.5 L1517.0 722.5 L1518.8 724.4 L1520.8 726.3 L1522.8 728.0 L1524.9 729.7 L1527.1 731.2 L1529.2 732.5 L1531.3 733.6 L1533.3 734.4 L1535.3 735.0 L1537.2 735.4 L1539.2 735.6 L1541.2 735.6 L1543.2 735.4 L1545.2 735.1 L1547.1 734.7 L1549.1 734.1 L1550.9 733.5 L1552.7 732.7 L1554.5 731.8 L1556.2 730.8 L1557.9 729.7 L1559.6 728.5 L1561.3 727.1 L1562.9 725.6 L1564.4 724.0 L1565.8 722.3 L1567.2 720.5 L1568.5 718.6 L1569.7 716.6 L1571.0 714.4 L1572.2 712.1 L1573.3 709.7 L1574.3 707.2 L1575.3 704.7 L1576.0 702.0 L1576.7 699.3 L1577.1 696.6 L1577.3 693.9 L1577.3 691.1 L1577.1 688.1 L1576.8 685.0 L1576.3 681.8 L1575.7 678.6 L1574.9 675.4 L1573.9 672.3 L1572.9 669.4 L1571.6 666.6 L1570.3 664.0 L1568.8 661.6 L1567.2 659.2 L1565.4 656.9 L1563.5 654.8 L1561.4 652.7 L1559.2 650.8 L1556.9 649.0 L1554.4 647.5 L1551.9 646.1 L1549.2 645.0 L1546.3 644.1 L1543.3 643.4 L1540.0 643.0 L1536.7 642.7 L1533.2 642.6 L1529.6 642.6 L1526.1 642.8 L1522.5 643.1 L1519.1 643.5 L1515.7 644.0 L1512.3 644.6 L1508.9 645.4 L1505.4 646.2 L1501.9 647.2 L1498.4 648.4 L1495.0 649.6 L1491.7 651.0 L1488.6 652.6 L1485.7 654.2 L1483.0 656.0 L1480.5 658.0 L1478.3 660.1 L1476.1 662.4 L1474.1 664.9 L1472.3 667.5 L1470.6 670.2 L1469.0 672.9 L1467.5 675.6 L1466.2 678.3 L1465.0 681.0 L1463.9 683.7 L1463.0 686.3 L1462.2 689.0 L1461.5 691.7 L1460.9 694.4 L1460.5 697.2 L1460.2 700.0 L1460.0 703.0 L1459.9 705.9 L1460.0 709.0 L1460.2 712.2 L1460.5 715.6 L1461.0 719.1 L1461.6 722.6 L1462.3 726.2 L1463.1 729.8 L1464.1 733.3 L1465.1 736.8 L1466.3 740.1 L1467.5 743.2 L1468.8 746.2 L1470.3 749.1 L1471.9 752.0 L1473.6 754.7 L1475.4 757.4 L1477.3 760.0 L1479.2 762.6 L1481.3 765.0 L1483.5 767.3 L1485.8 769.6 L1488.2 771.8 L1490.8 773.9 L1493.6 775.9 L1496.5 777.8 L1499.5 779.7 L1502.4 781.4 L1505.4 783.1 L1508.3 784.6 L1511.2 786.0 L1513.9 787.3 L1516.5 788.5 L1519.0 789.5 L1521.4 790.4 L1523.9 791.2 L1526.2 791.9 L1528.6 792.5 L1531.0 793.1 L1533.5 793.5 L1536.0 793.9 L1538.6 794.3 L1541.4 794.6 L1544.5 794.7 L1547.7 794.8 L1551.0 794.8 L1554.2 794.7 L1557.4 794.6 L1560.3 794.5 L1562.9 794.4 L1565.1 794.3 L1566.8 794.3" fill="none" stroke="#e6eef8" stroke-width="26" stroke-linecap="round" opacity="0.58" filter="url(#gl)"/><path d="M1540.4 669.3 L1538.9 669.8 L1536.8 670.4 L1534.3 671.0 L1531.5 671.8 L1528.6 672.6 L1525.6 673.5 L1522.7 674.5 L1520.0 675.6 L1517.6 676.8 L1515.7 678.1 L1514.1 679.5 L1512.7 681.0 L1511.4 682.6 L1510.3 684.3 L1509.3 686.0 L1508.5 687.9 L1507.9 689.8 L1507.4 691.7 L1507.1 693.7 L1506.9 695.7 L1506.9 697.8 L1507.1 700.1 L1507.4 702.4 L1508.0 704.8 L1508.6 707.3 L1509.4 709.7 L1510.4 712.1 L1511.5 714.4 L1512.6 716.6 L1513.9 718.6 L1515.3 720.5 L1517.0 722.5 L1518.8 724.4 L1520.8 726.3 L1522.8 728.0 L1524.9 729.7 L1527.1 731.2 L1529.2 732.5 L1531.3 733.6 L1533.3 734.4 L1535.3 735.0 L1537.2 735.4 L1539.2 735.6 L1541.2 735.6 L1543.2 735.4 L1545.2 735.1 L1547.1 734.7 L1549.1 734.1 L1550.9 733.5 L1552.7 732.7 L1554.5 731.8 L1556.2 730.8 L1557.9 729.7 L1559.6 728.5 L1561.3 727.1 L1562.9 725.6 L1564.4 724.0 L1565.8 722.3 L1567.2 720.5 L1568.5 718.6 L1569.7 716.6 L1571.0 714.4 L1572.2 712.1 L1573.3 709.7 L1574.3 707.2 L1575.3 704.7 L1576.0 702.0 L1576.7 699.3 L1577.1 696.6 L1577.3 693.9 L1577.3 691.1 L1577.1 688.1 L1576.8 685.0 L1576.3 681.8 L1575.7 678.6 L1574.9 675.4 L1573.9 672.3 L1572.9 669.4 L1571.6 666.6 L1570.3 664.0 L1568.8 661.6 L1567.2 659.2 L1565.4 656.9 L1563.5 654.8 L1561.4 652.7 L1559.2 650.8 L1556.9 649.0 L1554.4 647.5 L1551.9 646.1 L1549.2 645.0 L1546.3 644.1 L1543.3 643.4 L1540.0 643.0 L1536.7 642.7 L1533.2 642.6 L1529.6 642.6 L1526.1 642.8 L1522.5 643.1 L1519.1 643.5 L1515.7 644.0 L1512.3 644.6 L1508.9 645.4 L1505.4 646.2 L1501.9 647.2 L1498.4 648.4 L1495.0 649.6 L1491.7 651.0 L1488.6 652.6 L1485.7 654.2 L1483.0 656.0 L1480.5 658.0 L1478.3 660.1 L1476.1 662.4 L1474.1 664.9 L1472.3 667.5 L1470.6 670.2 L1469.0 672.9 L1467.5 675.6 L1466.2 678.3 L1465.0 681.0 L1463.9 683.7 L1463.0 686.3 L1462.2 689.0 L1461.5 691.7 L1460.9 694.4 L1460.5 697.2 L1460.2 700.0 L1460.0 703.0 L1459.9 705.9 L1460.0 709.0 L1460.2 712.2 L1460.5 715.6 L1461.0 719.1 L1461.6 722.6 L1462.3 726.2 L1463.1 729.8 L1464.1 733.3 L1465.1 736.8 L1466.3 740.1 L1467.5 743.2 L1468.8 746.2 L1470.3 749.1 L1471.9 752.0 L1473.6 754.7 L1475.4 757.4 L1477.3 760.0 L1479.2 762.6 L1481.3 765.0 L1483.5 767.3 L1485.8 769.6 L1488.2 771.8 L1490.8 773.9 L1493.6 775.9 L1496.5 777.8 L1499.5 779.7 L1502.4 781.4 L1505.4 783.1 L1508.3 784.6 L1511.2 786.0 L1513.9 787.3 L1516.5 788.5 L1519.0 789.5 L1521.4 790.4 L1523.9 791.2 L1526.2 791.9 L1528.6 792.5 L1531.0 793.1 L1533.5 793.5 L1536.0 793.9 L1538.6 794.3 L1541.4 794.6 L1544.5 794.7 L1547.7 794.8 L1551.0 794.8 L1554.2 794.7 L1557.4 794.6 L1560.3 794.5 L1562.9 794.4 L1565.1 794.3 L1566.8 794.3" fill="none" stroke="#ffffff" stroke-width="8" stroke-linecap="round" opacity="0.18" filter="url(#gl)"/><g><path d="M1545.4 668.9L1541.6 668.4L1541.8 667.6ZM1542.0 671.7L1541.3 668.1L1542.1 668.0ZM1538.3 669.5L1541.6 667.7L1541.9 668.4ZM1539.3 665.2L1542.0 667.8L1541.4 668.3ZM1543.7 664.8L1542.1 668.2L1541.4 667.8Z" fill="#f4f6fa"/><path d="M1540.6 667.7L1539.0 665.9L1539.6 665.5ZM1537.7 667.5L1539.0 665.4L1539.6 665.9ZM1537.0 664.7L1539.5 665.3L1539.2 666.0ZM1539.5 663.2L1539.7 665.7L1538.9 665.6ZM1541.7 665.1L1539.4 666.1L1539.2 665.3Z" fill="#f4f6fa"/><path d="M1544.8 681.8L1541.0 681.5L1541.2 680.7ZM1541.5 684.8L1540.7 681.1L1541.5 681.0ZM1537.7 682.6L1540.9 680.7L1541.3 681.4ZM1538.5 678.3L1541.4 680.8L1540.8 681.3ZM1543.0 677.7L1541.5 681.3L1540.8 680.9Z" fill="#f4f6fa"/><path d="M1535.8 671.5L1532.2 669.6L1532.6 668.9ZM1531.3 673.2L1532.0 669.1L1532.8 669.3ZM1528.3 669.4L1532.4 668.8L1532.4 669.6ZM1530.9 665.4L1532.8 669.1L1532.0 669.4ZM1535.6 666.6L1532.6 669.5L1532.1 668.9Z" fill="#d23a3a"/><path d="M1533.1 667.9L1529.6 666.1L1530.0 665.4ZM1528.8 669.5L1529.4 665.6L1530.2 665.8ZM1525.9 665.9L1529.8 665.3L1529.8 666.1ZM1528.4 662.1L1530.2 665.6L1529.4 665.9ZM1532.8 663.3L1530.0 666.0L1529.5 665.4Z" fill="#f4f6fa"/><path d="M1530.6 665.3L1527.6 664.8L1527.9 664.0ZM1527.8 667.4L1527.3 664.4L1528.1 664.4ZM1524.9 665.4L1527.6 664.0L1527.9 664.8ZM1525.9 662.0L1528.1 664.2L1527.4 664.7ZM1529.5 661.9L1528.1 664.6L1527.4 664.2Z" fill="#f4f6fa"/><path d="M1530.5 684.3L1529.0 681.4L1529.7 681.1ZM1526.9 683.3L1529.1 681.0L1529.6 681.6ZM1526.7 679.5L1529.6 681.0L1529.2 681.6ZM1530.2 678.2L1529.8 681.4L1529.0 681.2ZM1532.6 681.1L1529.4 681.7L1529.4 680.9Z" fill="#f4f6fa"/><path d="M1529.3 687.8L1524.9 685.9L1525.3 685.1ZM1524.2 690.2L1524.6 685.4L1525.5 685.6ZM1520.4 686.1L1525.0 685.1L1525.1 686.0ZM1523.0 681.2L1525.5 685.3L1524.7 685.7ZM1528.5 682.3L1525.4 685.9L1524.8 685.2Z" fill="#f4f6fa"/><path d="M1530.3 685.4L1526.1 684.0L1526.4 683.3ZM1525.8 688.0L1525.9 683.6L1526.6 683.7ZM1522.0 684.6L1526.2 683.2L1526.3 684.0ZM1524.0 679.8L1526.6 683.4L1525.9 683.8ZM1529.2 680.4L1526.5 683.9L1526.0 683.4Z" fill="#d23a3a"/><path d="M1518.7 673.5L1516.0 670.1L1516.7 669.7ZM1513.7 673.2L1516.1 669.7L1516.7 670.2ZM1512.4 668.4L1516.5 669.5L1516.2 670.3ZM1516.6 665.7L1516.8 669.9L1516.0 669.9ZM1520.5 668.8L1516.5 670.3L1516.3 669.5Z" fill="#d23a3a"/><path d="M1530.1 682.5L1522.8 681.9L1523.0 680.7ZM1524.0 688.5L1522.3 681.4L1523.5 681.2ZM1516.4 684.6L1522.6 680.7L1523.2 681.9ZM1517.8 676.1L1523.3 680.9L1522.5 681.7ZM1526.3 674.8L1523.5 681.6L1522.4 681.0Z" fill="#d23a3a"/><path d="M1525.6 689.4L1520.5 682.7L1521.7 682.0ZM1515.8 688.8L1520.6 681.9L1521.7 682.8ZM1513.4 679.2L1521.4 681.7L1520.9 683.0ZM1521.7 674.0L1521.8 682.4L1520.4 682.3ZM1529.2 680.3L1521.3 683.0L1520.9 681.6Z" fill="#d23a3a"/><path d="M1513.8 672.0L1509.9 671.9L1510.0 671.1ZM1510.6 675.3L1509.5 671.6L1510.3 671.4ZM1506.5 673.4L1509.7 671.2L1510.1 671.9ZM1507.1 668.9L1510.2 671.2L1509.6 671.8ZM1511.6 668.0L1510.3 671.7L1509.6 671.4Z" fill="#f4f6fa"/><path d="M1520.0 685.0L1517.0 685.1L1517.1 684.3ZM1517.7 687.6L1516.7 684.8L1517.5 684.6ZM1514.5 686.3L1516.9 684.4L1517.3 685.1ZM1514.9 682.8L1517.3 684.4L1516.8 685.0ZM1518.3 682.0L1517.5 684.9L1516.7 684.6Z" fill="#f4f6fa"/><path d="M1522.7 686.1L1519.9 684.7L1520.3 684.1ZM1519.3 687.5L1519.7 684.3L1520.5 684.5ZM1516.9 684.6L1520.1 684.0L1520.1 684.8ZM1518.9 681.5L1520.4 684.3L1519.7 684.5ZM1522.5 682.4L1520.3 684.7L1519.8 684.1Z" fill="#f4f6fa"/><path d="M1515.2 686.9L1512.8 682.8L1513.6 682.5ZM1509.8 685.8L1512.9 682.4L1513.5 682.9ZM1509.1 680.3L1513.4 682.3L1513.0 683.0ZM1514.1 678.1L1513.6 682.7L1512.8 682.6ZM1517.9 682.1L1513.3 683.1L1513.2 682.3Z" fill="#d23a3a"/><path d="M1511.4 676.7L1506.8 676.0L1507.0 675.1ZM1507.2 680.2L1506.4 675.6L1507.4 675.5ZM1502.6 677.3L1506.7 675.1L1507.1 676.0ZM1503.9 672.0L1507.2 675.2L1506.5 675.8ZM1509.4 671.6L1507.3 675.8L1506.5 675.3Z" fill="#f4f6fa"/><path d="M1507.1 681.7L1505.3 677.9L1506.0 677.6ZM1502.4 680.4L1505.4 677.4L1505.9 678.1ZM1502.1 675.5L1505.9 677.4L1505.4 678.1ZM1506.7 673.7L1506.0 677.9L1505.2 677.6ZM1509.8 677.6L1505.7 678.1L1505.6 677.3Z" fill="#d23a3a"/><path d="M1519.9 686.0L1516.3 685.1L1516.6 684.3ZM1516.2 688.4L1516.0 684.7L1516.8 684.7ZM1512.8 685.6L1516.3 684.3L1516.5 685.1ZM1514.4 681.5L1516.8 684.5L1516.1 684.9ZM1518.8 681.8L1516.7 684.9L1516.1 684.4Z" fill="#f4f6fa"/><path d="M1507.9 684.0L1504.5 681.2L1505.1 680.6ZM1502.8 684.9L1504.4 680.7L1505.2 681.1ZM1500.4 680.3L1504.8 680.5L1504.7 681.3ZM1504.0 676.5L1505.2 680.8L1504.3 681.0ZM1508.7 678.8L1505.0 681.3L1504.6 680.5Z" fill="#f4f6fa"/><path d="M1506.6 680.9L1500.6 680.9L1500.7 679.9ZM1502.0 686.3L1500.1 680.5L1501.1 680.3ZM1495.5 683.6L1500.4 680.0L1500.9 680.9ZM1496.1 676.5L1501.0 680.0L1500.3 680.8ZM1502.9 674.9L1501.1 680.6L1500.2 680.2Z" fill="#d23a3a"/><path d="M1512.8 691.6L1510.8 687.5L1511.7 687.2ZM1507.7 690.1L1511.0 687.0L1511.5 687.7ZM1507.5 684.8L1511.5 687.0L1511.0 687.7ZM1512.5 683.0L1511.7 687.5L1510.8 687.2ZM1515.8 687.2L1511.3 687.8L1511.2 686.9Z" fill="#f4f6fa"/><path d="M1506.2 691.0L1504.2 687.4L1504.9 687.1ZM1501.5 690.0L1504.3 686.9L1504.8 687.5ZM1501.0 685.2L1504.7 686.9L1504.3 687.6ZM1505.4 683.2L1504.9 687.3L1504.2 687.2ZM1508.6 686.8L1504.6 687.6L1504.5 686.8Z" fill="#d23a3a"/><path d="M1500.2 692.0L1496.3 690.8L1496.6 690.0ZM1496.1 694.5L1496.0 690.3L1496.8 690.4ZM1492.4 691.3L1496.3 690.0L1496.5 690.8ZM1494.3 686.9L1496.8 690.2L1496.1 690.6ZM1499.1 687.3L1496.7 690.6L1496.1 690.1Z" fill="#f4f6fa"/><path d="M1518.3 698.9L1515.4 695.9L1516.0 695.4ZM1513.5 699.1L1515.3 695.5L1516.0 695.9ZM1511.7 694.6L1515.8 695.3L1515.6 696.1ZM1515.4 691.6L1516.1 695.7L1515.3 695.7ZM1519.5 694.2L1515.8 696.1L1515.5 695.3Z" fill="#f4f6fa"/><path d="M1505.0 696.4L1502.5 692.6L1503.3 692.2ZM1499.7 695.6L1502.6 692.1L1503.2 692.7ZM1498.9 690.3L1503.1 692.0L1502.7 692.8ZM1503.6 687.9L1503.4 692.4L1502.5 692.3ZM1507.4 691.6L1503.0 692.8L1502.8 691.9Z" fill="#f4f6fa"/><path d="M1504.9 697.9L1502.3 696.1L1502.8 695.5ZM1501.3 698.7L1502.2 695.6L1502.9 695.9ZM1499.4 695.4L1502.6 695.4L1502.5 696.2ZM1501.9 692.6L1502.9 695.7L1502.2 695.8ZM1505.3 694.2L1502.7 696.1L1502.3 695.4Z" fill="#f4f6fa"/><path d="M1519.5 701.3L1515.7 699.8L1516.0 699.1ZM1515.1 703.4L1515.4 699.3L1516.3 699.5ZM1511.8 700.0L1515.8 699.0L1515.9 699.8ZM1514.1 695.7L1516.2 699.2L1515.5 699.6ZM1518.8 696.6L1516.1 699.7L1515.6 699.1Z" fill="#f4f6fa"/><path d="M1512.6 701.9L1505.2 702.2L1505.3 701.0ZM1507.3 708.7L1504.6 701.8L1505.8 701.4ZM1499.1 705.7L1504.9 701.1L1505.6 702.1ZM1499.4 697.0L1505.6 701.1L1504.9 702.1ZM1507.8 694.7L1505.8 701.8L1504.7 701.4Z" fill="#d23a3a"/><path d="M1508.3 706.6L1506.4 703.3L1507.1 703.0ZM1503.9 705.7L1506.5 702.8L1507.0 703.4ZM1503.5 701.2L1506.9 702.8L1506.5 703.5ZM1507.6 699.4L1507.1 703.2L1506.4 703.0ZM1510.5 702.7L1506.8 703.5L1506.7 702.7Z" fill="#f4f6fa"/><path d="M1518.7 707.5L1516.3 703.4L1517.0 703.0ZM1513.2 706.4L1516.4 702.9L1516.9 703.5ZM1512.5 700.9L1516.9 702.9L1516.5 703.6ZM1517.6 698.5L1517.1 703.3L1516.3 703.1ZM1521.4 702.6L1516.7 703.6L1516.6 702.8Z" fill="#d23a3a"/><path d="M1513.6 707.6L1511.1 706.6L1511.5 705.9ZM1510.7 708.9L1510.9 706.1L1511.7 706.3ZM1508.6 706.5L1511.3 705.8L1511.4 706.6ZM1510.3 703.7L1511.7 706.1L1510.9 706.4ZM1513.4 704.5L1511.6 706.5L1511.1 705.9Z" fill="#f4f6fa"/><path d="M1506.2 712.6L1503.1 712.5L1503.3 711.7ZM1503.6 715.1L1502.8 712.1L1503.6 712.0ZM1500.5 713.4L1503.0 711.7L1503.4 712.4ZM1501.1 709.9L1503.5 711.8L1502.9 712.3ZM1504.6 709.4L1503.5 712.3L1502.8 711.9Z" fill="#f4f6fa"/><path d="M1515.3 712.7L1510.7 711.5L1511.0 710.6ZM1510.7 715.7L1510.4 711.1L1511.3 711.1ZM1506.4 712.4L1510.7 710.6L1511.0 711.5ZM1508.2 707.2L1511.3 710.8L1510.5 711.3ZM1513.7 707.4L1511.2 711.4L1510.5 710.8Z" fill="#f4f6fa"/><path d="M1513.5 712.8L1510.2 710.9L1510.6 710.2ZM1509.2 714.2L1510.0 710.4L1510.8 710.7ZM1506.6 710.6L1510.4 710.2L1510.4 711.0ZM1509.2 706.9L1510.8 710.4L1510.0 710.7ZM1513.5 708.3L1510.6 710.9L1510.2 710.2Z" fill="#f4f6fa"/><path d="M1509.2 720.9L1507.0 717.4L1507.7 717.0ZM1504.4 720.2L1507.0 716.9L1507.6 717.5ZM1503.6 715.4L1507.5 716.9L1507.1 717.6ZM1507.9 713.1L1507.7 717.3L1506.9 717.2ZM1511.4 716.6L1507.4 717.6L1507.2 716.8Z" fill="#d23a3a"/><path d="M1511.5 718.3L1509.2 718.3L1509.4 717.5ZM1509.6 720.1L1508.9 718.0L1509.7 717.8ZM1507.3 718.9L1509.1 717.5L1509.5 718.3ZM1507.7 716.3L1509.6 717.6L1509.0 718.2ZM1510.3 715.9L1509.7 718.1L1508.9 717.7Z" fill="#f4f6fa"/><path d="M1526.0 715.2L1522.8 712.5L1523.4 711.9ZM1521.1 715.9L1522.7 712.0L1523.4 712.4ZM1518.9 711.5L1523.1 711.8L1523.0 712.6ZM1522.4 708.0L1523.5 712.1L1522.7 712.3ZM1526.8 710.3L1523.2 712.5L1522.9 711.8Z" fill="#d23a3a"/><path d="M1517.8 724.4L1513.8 723.8L1514.0 723.0ZM1514.2 727.4L1513.5 723.4L1514.3 723.4ZM1510.2 724.9L1513.8 723.0L1514.1 723.8ZM1511.4 720.3L1514.2 723.1L1513.6 723.6ZM1516.1 720.0L1514.3 723.6L1513.6 723.2Z" fill="#f4f6fa"/><path d="M1522.3 719.0L1519.7 718.5L1519.9 717.7ZM1519.7 720.8L1519.4 718.1L1520.2 718.1ZM1517.3 718.8L1519.7 717.7L1519.9 718.5ZM1518.3 715.9L1520.1 717.9L1519.5 718.3ZM1521.4 716.0L1520.1 718.3L1519.5 717.8Z" fill="#f4f6fa"/><path d="M1517.9 730.4L1515.8 727.9L1516.4 727.4ZM1514.1 730.2L1515.8 727.4L1516.4 727.9ZM1513.1 726.5L1516.2 727.3L1516.0 728.0ZM1516.3 724.4L1516.5 727.7L1515.7 727.6ZM1519.2 726.8L1516.2 728.0L1516.0 727.3Z" fill="#f4f6fa"/><path d="M1532.3 725.3L1527.7 721.4L1528.4 720.7ZM1525.3 726.4L1527.6 720.8L1528.5 721.3ZM1522.1 720.1L1528.1 720.5L1527.9 721.5ZM1527.1 715.1L1528.5 721.0L1527.5 721.1ZM1533.4 718.3L1528.3 721.5L1527.8 720.6Z" fill="#d23a3a"/><path d="M1516.4 736.6L1514.4 732.8L1515.2 732.5ZM1511.5 735.4L1514.5 732.3L1515.1 733.0ZM1511.2 730.4L1515.0 732.3L1514.6 733.0ZM1515.8 728.5L1515.2 732.7L1514.4 732.5ZM1519.0 732.3L1514.8 733.1L1514.8 732.2Z" fill="#f4f6fa"/><path d="M1522.1 734.3L1519.4 731.5L1520.0 731.0ZM1517.6 734.5L1519.4 731.0L1520.1 731.5ZM1516.0 730.2L1519.8 730.9L1519.6 731.7ZM1519.6 727.4L1520.1 731.3L1519.3 731.3ZM1523.4 729.9L1519.9 731.6L1519.6 730.9Z" fill="#f4f6fa"/><path d="M1526.0 739.7L1522.0 738.4L1522.3 737.6ZM1521.8 742.3L1521.7 738.0L1522.6 738.1ZM1518.0 739.0L1522.0 737.6L1522.2 738.5ZM1519.9 734.4L1522.5 737.8L1521.8 738.3ZM1524.9 734.8L1522.5 738.3L1521.8 737.8Z" fill="#f4f6fa"/><path d="M1524.7 738.4L1522.3 735.7L1522.9 735.2ZM1520.4 738.3L1522.3 735.2L1522.9 735.7ZM1519.2 734.3L1522.7 735.1L1522.5 735.8ZM1522.7 731.8L1523.0 735.5L1522.2 735.4ZM1526.1 734.4L1522.7 735.8L1522.5 735.1Z" fill="#f4f6fa"/><path d="M1532.8 733.8L1525.2 732.8L1525.5 731.6ZM1526.1 739.8L1524.7 732.3L1526.0 732.1ZM1518.4 735.2L1525.1 731.6L1525.6 732.8ZM1520.3 726.5L1525.8 731.8L1524.9 732.6ZM1529.2 725.6L1525.9 732.5L1524.8 731.9Z" fill="#d23a3a"/><path d="M1527.0 739.6L1524.6 736.3L1525.3 735.9ZM1522.2 739.1L1524.6 735.8L1525.2 736.4ZM1521.2 734.4L1525.1 735.7L1524.8 736.4ZM1525.4 732.0L1525.3 736.1L1524.5 736.0ZM1528.9 735.3L1525.0 736.5L1524.9 735.7Z" fill="#f4f6fa"/><path d="M1531.4 746.5L1527.2 743.8L1527.7 743.1ZM1525.8 748.1L1527.1 743.3L1527.9 743.6ZM1522.5 743.3L1527.5 743.0L1527.5 743.8ZM1526.1 738.6L1527.9 743.3L1527.1 743.5ZM1531.6 740.6L1527.7 743.8L1527.2 743.1Z" fill="#d23a3a"/><path d="M1535.7 740.2L1532.1 739.2L1532.4 738.4ZM1532.0 742.4L1531.9 738.8L1532.7 738.8ZM1528.7 739.7L1532.2 738.4L1532.4 739.2ZM1530.4 735.7L1532.6 738.6L1532.0 739.0ZM1534.7 736.0L1532.6 739.1L1532.0 738.5Z" fill="#f4f6fa"/><path d="M1538.9 743.4L1534.9 740.9L1535.5 740.2ZM1533.6 745.0L1534.7 740.4L1535.6 740.7ZM1530.5 740.4L1535.2 740.1L1535.2 741.0ZM1533.9 736.0L1535.6 740.4L1534.7 740.7ZM1539.1 737.9L1535.5 740.9L1534.9 740.1Z" fill="#f4f6fa"/><path d="M1539.0 731.6L1537.9 729.6L1538.6 729.3ZM1536.4 730.9L1538.0 729.2L1538.5 729.8ZM1536.3 728.2L1538.5 729.1L1538.0 729.8ZM1538.9 727.3L1538.6 729.6L1537.8 729.4ZM1540.5 729.4L1538.2 729.9L1538.2 729.1Z" fill="#f4f6fa"/><path d="M1544.5 734.2L1540.5 734.2L1540.6 733.4ZM1541.5 737.7L1540.1 733.9L1540.9 733.7ZM1537.1 735.9L1540.3 733.5L1540.7 734.2ZM1537.5 731.2L1540.8 733.5L1540.3 734.1ZM1542.1 730.1L1540.9 734.0L1540.2 733.7Z" fill="#f4f6fa"/><path d="M1549.0 736.5L1542.9 736.1L1543.1 735.0ZM1543.9 741.6L1542.5 735.6L1543.5 735.5ZM1537.5 738.3L1542.8 735.1L1543.2 736.0ZM1538.7 731.2L1543.4 735.2L1542.6 735.9ZM1545.8 730.1L1543.5 735.8L1542.5 735.3Z" fill="#d23a3a"/><path d="M1547.5 743.5L1545.3 741.9L1545.8 741.3ZM1544.4 744.0L1545.2 741.4L1545.9 741.8ZM1542.9 741.2L1545.6 741.2L1545.5 742.0ZM1545.1 738.9L1546.0 741.5L1545.2 741.7ZM1548.0 740.4L1545.7 742.0L1545.4 741.2Z" fill="#f4f6fa"/><path d="M1548.2 729.7L1544.6 726.2L1545.3 725.6ZM1542.3 730.2L1544.6 725.7L1545.3 726.1ZM1540.0 724.8L1545.0 725.5L1544.8 726.3ZM1544.5 720.9L1545.4 725.9L1544.5 726.0ZM1549.6 724.0L1545.1 726.3L1544.8 725.5Z" fill="#d23a3a"/><path d="M1551.2 733.2L1543.9 732.7L1544.1 731.5ZM1545.1 739.3L1543.3 732.2L1544.6 732.0ZM1537.5 735.4L1543.7 731.5L1544.2 732.6ZM1538.8 727.0L1544.4 731.7L1543.5 732.5ZM1547.2 725.6L1544.5 732.4L1543.4 731.8Z" fill="#d23a3a"/><path d="M1547.4 731.5L1544.5 730.3L1544.9 729.6ZM1544.0 733.1L1544.3 729.9L1545.1 730.0ZM1541.5 730.3L1544.6 729.6L1544.7 730.4ZM1543.4 727.1L1545.0 729.8L1544.3 730.1ZM1547.0 727.8L1545.0 730.3L1544.4 729.7Z" fill="#f4f6fa"/><path d="M1547.5 731.3L1545.4 728.4L1546.1 728.0ZM1543.3 730.8L1545.5 727.9L1546.1 728.4ZM1542.5 726.6L1545.9 727.8L1545.6 728.5ZM1546.2 724.6L1546.2 728.2L1545.4 728.1ZM1549.3 727.5L1545.8 728.6L1545.7 727.8Z" fill="#f4f6fa"/><path d="M1556.6 742.8L1552.2 741.5L1552.6 740.6ZM1552.0 745.6L1552.0 741.0L1552.9 741.1ZM1548.0 742.1L1552.3 740.6L1552.5 741.5ZM1550.1 737.2L1552.8 740.8L1552.0 741.3ZM1555.4 737.6L1552.8 741.4L1552.1 740.8Z" fill="#f4f6fa"/><path d="M1557.5 743.1L1554.9 742.8L1555.2 742.0ZM1555.1 744.9L1554.7 742.4L1555.5 742.4ZM1552.7 743.2L1554.9 742.0L1555.2 742.8ZM1553.5 740.4L1555.4 742.2L1554.7 742.6ZM1556.5 740.3L1555.4 742.6L1554.7 742.2Z" fill="#f4f6fa"/><path d="M1554.8 729.6L1550.5 729.3L1550.7 728.5ZM1551.3 733.1L1550.2 729.0L1551.0 728.9ZM1546.8 730.8L1550.4 728.5L1550.8 729.3ZM1547.6 725.9L1550.9 728.6L1550.3 729.2ZM1552.5 725.1L1551.0 729.1L1550.2 728.7Z" fill="#f4f6fa"/><path d="M1557.8 737.1L1555.8 733.0L1556.6 732.6ZM1552.6 735.6L1555.9 732.4L1556.5 733.2ZM1552.4 730.3L1556.5 732.4L1556.0 733.2ZM1557.4 728.4L1556.6 732.9L1555.8 732.7ZM1560.8 732.6L1556.2 733.3L1556.2 732.3Z" fill="#f4f6fa"/><path d="M1561.7 730.1L1559.0 730.2L1559.1 729.4ZM1559.6 732.4L1558.6 729.9L1559.4 729.7ZM1556.7 731.2L1558.8 729.5L1559.2 730.2ZM1557.0 728.1L1559.3 729.5L1558.8 730.1ZM1560.1 727.3L1559.4 730.0L1558.7 729.7Z" fill="#f4f6fa"/><path d="M1556.6 721.8L1554.0 721.6L1554.2 720.9ZM1554.3 723.8L1553.7 721.3L1554.5 721.2ZM1551.7 722.2L1553.9 720.9L1554.3 721.6ZM1552.4 719.3L1554.4 721.0L1553.8 721.5ZM1555.4 719.0L1554.4 721.5L1553.8 721.0Z" fill="#f4f6fa"/><path d="M1569.3 737.9L1567.4 734.0L1568.1 733.7ZM1564.4 736.6L1567.5 733.6L1568.0 734.2ZM1564.1 731.6L1567.9 733.6L1567.5 734.2ZM1568.8 729.8L1568.1 734.0L1567.3 733.8ZM1572.0 733.6L1567.8 734.3L1567.7 733.5Z" fill="#d23a3a"/><path d="M1568.3 731.5L1565.6 729.5L1566.2 728.9ZM1564.5 732.2L1565.5 729.1L1566.2 729.4ZM1562.6 728.8L1565.9 728.8L1565.8 729.6ZM1565.3 726.0L1566.3 729.2L1565.5 729.3ZM1568.8 727.6L1566.1 729.6L1565.7 728.9Z" fill="#f4f6fa"/><path d="M1572.3 727.4L1568.5 725.8L1568.9 725.1ZM1567.9 729.5L1568.3 725.3L1569.2 725.5ZM1564.7 725.9L1568.7 725.0L1568.8 725.8ZM1567.0 721.7L1569.1 725.3L1568.4 725.6ZM1571.8 722.6L1569.0 725.7L1568.5 725.1Z" fill="#f4f6fa"/><path d="M1563.4 719.5L1560.4 716.4L1561.0 715.9ZM1558.4 719.8L1560.3 715.9L1561.0 716.4ZM1556.5 715.1L1560.8 715.7L1560.6 716.6ZM1560.4 711.9L1561.1 716.1L1560.3 716.2ZM1564.7 714.6L1560.8 716.5L1560.5 715.7Z" fill="#f4f6fa"/><path d="M1571.5 726.4L1568.5 722.7L1569.3 722.2ZM1565.9 726.0L1568.6 722.1L1569.3 722.7ZM1564.5 720.6L1569.1 722.0L1568.8 722.8ZM1569.3 717.7L1569.4 722.4L1568.5 722.4ZM1573.6 721.2L1569.1 722.9L1568.8 721.9Z" fill="#f4f6fa"/><path d="M1568.7 720.8L1564.7 719.0L1565.1 718.3ZM1564.1 722.9L1564.5 718.6L1565.4 718.7ZM1560.6 719.2L1564.9 718.2L1565.0 719.1ZM1563.1 714.7L1565.3 718.5L1564.5 718.8ZM1568.1 715.7L1565.2 719.0L1564.6 718.3Z" fill="#f4f6fa"/><path d="M1577.7 726.3L1575.4 724.0L1576.0 723.5ZM1573.8 726.5L1575.3 723.6L1576.0 724.0ZM1572.5 722.9L1575.8 723.4L1575.6 724.2ZM1575.6 720.5L1576.1 723.8L1575.3 723.8ZM1578.7 722.7L1575.8 724.2L1575.5 723.4Z" fill="#f4f6fa"/><path d="M1564.5 717.9L1560.3 714.2L1561.0 713.5ZM1558.0 718.8L1560.2 713.6L1561.1 714.1ZM1555.1 712.9L1560.7 713.4L1560.6 714.3ZM1559.9 708.3L1561.1 713.8L1560.2 713.9ZM1565.7 711.4L1560.9 714.3L1560.4 713.4Z" fill="#d23a3a"/><path d="M1569.9 717.1L1566.6 714.8L1567.2 714.2ZM1565.4 718.1L1566.5 714.4L1567.3 714.7ZM1563.0 714.2L1566.9 714.1L1566.9 714.9ZM1566.0 710.7L1567.3 714.4L1566.5 714.6ZM1570.3 712.5L1567.1 714.9L1566.7 714.2Z" fill="#f4f6fa"/><path d="M1572.4 717.9L1570.6 714.1L1571.4 713.8ZM1567.7 716.5L1570.8 713.6L1571.3 714.3ZM1567.6 711.6L1571.3 713.6L1570.8 714.3ZM1572.2 709.9L1571.4 714.1L1570.6 713.8ZM1575.2 713.8L1571.0 714.4L1571.0 713.5Z" fill="#f4f6fa"/><path d="M1577.4 712.8L1575.1 712.6L1575.3 711.8ZM1575.3 714.5L1574.8 712.2L1575.6 712.2ZM1573.0 713.1L1575.0 711.8L1575.3 712.6ZM1573.7 710.4L1575.5 711.9L1574.9 712.4ZM1576.4 710.2L1575.5 712.4L1574.8 712.0Z" fill="#f4f6fa"/><path d="M1566.2 711.4L1564.6 708.2L1565.3 708.0ZM1562.2 710.3L1564.7 707.8L1565.2 708.4ZM1562.0 706.1L1565.2 707.8L1564.7 708.4ZM1565.9 704.7L1565.3 708.2L1564.6 708.0ZM1568.5 708.0L1565.0 708.5L1564.9 707.7Z" fill="#f4f6fa"/><path d="M1588.0 717.5L1583.6 712.4L1584.6 711.7ZM1580.1 717.4L1583.6 711.7L1584.6 712.4ZM1577.8 709.9L1584.3 711.5L1583.9 712.6ZM1584.2 705.4L1584.7 712.1L1583.5 712.1ZM1590.5 710.1L1584.3 712.6L1583.9 711.5Z" fill="#d23a3a"/><path d="M1586.5 711.6L1581.7 707.6L1582.4 706.9ZM1579.3 712.8L1581.6 707.0L1582.5 707.5ZM1575.9 706.4L1582.1 706.7L1582.0 707.8ZM1581.0 701.1L1582.6 707.2L1581.5 707.3ZM1587.6 704.3L1582.3 707.7L1581.8 706.8Z" fill="#d23a3a"/><path d="M1587.3 705.5L1584.2 704.8L1584.5 704.0ZM1584.2 707.6L1583.9 704.4L1584.7 704.4ZM1581.3 705.3L1584.2 704.0L1584.4 704.8ZM1582.6 701.8L1584.7 704.2L1584.0 704.6ZM1586.3 702.0L1584.6 704.7L1584.0 704.2Z" fill="#f4f6fa"/><path d="M1579.1 701.1L1576.9 700.8L1577.1 700.1ZM1577.0 702.7L1576.6 700.4L1577.4 700.4ZM1574.9 701.1L1576.9 700.1L1577.1 700.8ZM1575.7 698.6L1577.3 700.2L1576.7 700.7ZM1578.3 698.6L1577.3 700.7L1576.7 700.2Z" fill="#f4f6fa"/><path d="M1575.4 695.7L1571.3 695.8L1571.3 695.0ZM1572.3 699.4L1570.9 695.5L1571.7 695.3ZM1567.8 697.6L1571.1 695.0L1571.5 695.7ZM1568.1 692.7L1571.6 695.1L1571.0 695.7ZM1572.8 691.5L1571.7 695.5L1570.9 695.2Z" fill="#f4f6fa"/><path d="M1585.7 699.1L1584.1 696.0L1584.9 695.7ZM1581.8 698.0L1584.2 695.5L1584.7 696.2ZM1581.6 693.9L1584.7 695.5L1584.3 696.2ZM1585.4 692.6L1584.9 696.0L1584.1 695.8ZM1587.9 695.7L1584.5 696.3L1584.5 695.5Z" fill="#f4f6fa"/><path d="M1573.4 698.7L1571.9 695.6L1572.6 695.3ZM1569.6 697.5L1572.0 695.1L1572.5 695.8ZM1569.5 693.5L1572.5 695.1L1572.0 695.8ZM1573.2 692.2L1572.7 695.6L1571.9 695.3ZM1575.7 695.4L1572.3 695.9L1572.3 695.1Z" fill="#f4f6fa"/><path d="M1580.6 691.7L1577.8 691.9L1577.9 691.1ZM1578.5 694.2L1577.4 691.6L1578.2 691.4ZM1575.5 693.0L1577.6 691.2L1578.0 691.8ZM1575.7 689.8L1578.1 691.2L1577.6 691.8ZM1578.8 689.0L1578.2 691.7L1577.5 691.4Z" fill="#f4f6fa"/><path d="M1579.6 691.9L1576.2 691.2L1576.5 690.4ZM1576.3 694.2L1576.0 690.8L1576.8 690.8ZM1573.1 691.8L1576.2 690.4L1576.5 691.2ZM1574.4 688.1L1576.7 690.6L1576.0 691.1ZM1578.4 688.1L1576.7 691.1L1576.0 690.6Z" fill="#f4f6fa"/><path d="M1579.5 692.1L1576.3 688.6L1577.0 688.1ZM1574.0 692.2L1576.3 688.1L1577.0 688.6ZM1572.2 687.0L1576.8 687.9L1576.5 688.8ZM1576.6 683.7L1577.1 688.3L1576.2 688.3ZM1581.1 686.8L1576.8 688.8L1576.5 687.9Z" fill="#f4f6fa"/><path d="M1573.7 688.2L1570.6 687.5L1570.9 686.7ZM1570.6 690.2L1570.3 687.1L1571.1 687.1ZM1567.7 688.0L1570.6 686.7L1570.8 687.5ZM1568.9 684.5L1571.0 686.9L1570.4 687.3ZM1572.6 684.6L1571.0 687.4L1570.4 686.9Z" fill="#f4f6fa"/><path d="M1580.5 682.9L1577.8 682.5L1578.1 681.7ZM1578.0 684.8L1577.6 682.1L1578.4 682.1ZM1575.4 682.9L1577.8 681.7L1578.1 682.5ZM1576.4 679.9L1578.3 681.9L1577.6 682.3ZM1579.5 679.9L1578.3 682.3L1577.6 681.9Z" fill="#f4f6fa"/><path d="M1589.8 677.6L1585.1 675.3L1585.5 674.5ZM1584.2 680.0L1584.9 674.8L1585.7 675.0ZM1580.1 675.4L1585.3 674.5L1585.3 675.4ZM1583.2 670.1L1585.7 674.7L1584.9 675.1ZM1589.2 671.5L1585.6 675.2L1585.0 674.6Z" fill="#d23a3a"/><path d="M1579.4 681.5L1576.2 678.5L1576.8 678.0ZM1574.2 682.0L1576.1 678.0L1576.8 678.4ZM1572.2 677.3L1576.6 677.8L1576.4 678.6ZM1576.1 673.8L1576.9 678.2L1576.1 678.3ZM1580.5 676.5L1576.6 678.6L1576.3 677.8Z" fill="#d23a3a"/><path d="M1580.2 679.1L1576.5 674.9L1577.3 674.4ZM1573.7 679.1L1576.5 674.4L1577.3 674.9ZM1571.6 673.0L1577.0 674.2L1576.8 675.1ZM1576.9 669.1L1577.4 674.6L1576.4 674.6ZM1582.2 672.9L1577.0 675.1L1576.7 674.2Z" fill="#d23a3a"/><path d="M1568.4 677.4L1564.2 676.7L1564.4 675.9ZM1564.5 680.5L1563.9 676.3L1564.8 676.2ZM1560.4 677.7L1564.2 675.9L1564.5 676.7ZM1561.7 673.0L1564.7 676.0L1564.0 676.5ZM1566.6 672.8L1564.7 676.5L1564.0 676.0Z" fill="#f4f6fa"/><path d="M1572.8 677.7L1571.2 674.2L1571.9 673.9ZM1568.4 676.4L1571.3 673.7L1571.8 674.4ZM1568.3 671.8L1571.8 673.7L1571.3 674.4ZM1572.7 670.3L1571.9 674.2L1571.1 673.9ZM1575.4 674.0L1571.5 674.5L1571.5 673.7Z" fill="#f4f6fa"/><path d="M1577.9 671.1L1574.7 671.1L1574.8 670.3ZM1575.3 673.8L1574.4 670.8L1575.1 670.6ZM1572.0 672.2L1574.5 670.3L1574.9 671.0ZM1572.4 668.5L1575.0 670.4L1574.5 671.0ZM1576.1 667.8L1575.1 670.9L1574.4 670.5Z" fill="#f4f6fa"/><path d="M1566.1 671.9L1562.2 670.8L1562.5 670.1ZM1562.1 674.4L1562.0 670.4L1562.8 670.5ZM1558.5 671.4L1562.3 670.1L1562.5 670.8ZM1560.2 667.1L1562.7 670.2L1562.0 670.7ZM1564.9 667.4L1562.7 670.7L1562.1 670.2Z" fill="#f4f6fa"/><path d="M1577.2 664.0L1574.8 663.4L1575.1 662.7ZM1574.8 665.5L1574.5 663.0L1575.3 663.1ZM1572.6 663.6L1574.8 662.7L1575.0 663.4ZM1573.6 661.0L1575.3 662.8L1574.6 663.3ZM1576.5 661.2L1575.2 663.3L1574.6 662.8Z" fill="#f4f6fa"/><path d="M1576.5 662.5L1572.6 661.0L1573.0 660.3ZM1572.2 664.7L1572.4 660.6L1573.2 660.7ZM1568.8 661.3L1572.7 660.3L1572.9 661.1ZM1570.9 657.0L1573.2 660.5L1572.4 660.9ZM1575.7 657.7L1573.1 660.9L1572.5 660.4Z" fill="#f4f6fa"/><path d="M1576.5 663.4L1572.4 661.4L1572.8 660.6ZM1571.5 665.4L1572.2 660.9L1573.0 661.1ZM1568.0 661.3L1572.6 660.5L1572.6 661.4ZM1570.9 656.7L1573.0 660.8L1572.2 661.1ZM1576.1 658.0L1572.9 661.3L1572.3 660.6Z" fill="#f4f6fa"/><path d="M1567.6 662.5L1563.2 661.6L1563.4 660.7ZM1563.3 665.7L1562.9 661.1L1563.8 661.1ZM1559.0 662.5L1563.2 660.7L1563.4 661.6ZM1560.6 657.5L1563.7 660.9L1562.9 661.4ZM1566.0 657.5L1563.7 661.4L1562.9 660.9Z" fill="#f4f6fa"/><path d="M1567.5 661.1L1564.3 660.7L1564.5 659.9ZM1564.6 663.5L1564.0 660.3L1564.8 660.3ZM1561.4 661.5L1564.3 659.9L1564.6 660.7ZM1562.4 657.8L1564.7 660.1L1564.1 660.6ZM1566.1 657.6L1564.8 660.5L1564.1 660.1Z" fill="#f4f6fa"/><path d="M1571.7 656.6L1569.8 654.7L1570.5 654.2ZM1568.5 656.6L1569.8 654.2L1570.4 654.7ZM1567.6 653.6L1570.3 654.1L1570.0 654.9ZM1570.2 651.8L1570.5 654.5L1569.7 654.5ZM1572.7 653.7L1570.2 654.9L1570.0 654.1Z" fill="#f4f6fa"/><path d="M1559.7 661.3L1558.0 657.9L1558.8 657.7ZM1555.5 660.1L1558.1 657.5L1558.6 658.1ZM1555.3 655.8L1558.6 657.5L1558.2 658.1ZM1559.4 654.3L1558.8 657.9L1558.0 657.7ZM1562.0 657.7L1558.4 658.2L1558.4 657.4Z" fill="#f4f6fa"/><path d="M1571.1 651.4L1566.8 651.4L1566.9 650.5ZM1567.8 655.1L1566.5 651.0L1567.3 650.8ZM1563.2 653.1L1566.7 650.6L1567.1 651.3ZM1563.7 648.1L1567.2 650.6L1566.6 651.2ZM1568.6 647.1L1567.3 651.1L1566.5 650.8Z" fill="#f4f6fa"/><path d="M1567.8 649.6L1565.9 647.8L1566.6 647.3ZM1564.7 649.7L1565.9 647.3L1566.6 647.8ZM1563.8 646.8L1566.4 647.2L1566.1 647.9ZM1566.2 645.0L1566.6 647.6L1565.8 647.6ZM1568.7 646.8L1566.4 647.9L1566.1 647.2Z" fill="#f4f6fa"/><path d="M1558.6 657.8L1554.7 656.2L1555.1 655.4ZM1554.1 659.9L1554.5 655.7L1555.3 655.9ZM1550.7 656.4L1554.8 655.4L1554.9 656.2ZM1553.1 652.0L1555.3 655.6L1554.5 656.0ZM1557.9 652.9L1555.2 656.1L1554.6 655.5Z" fill="#f4f6fa"/><path d="M1565.5 644.5L1562.6 641.6L1563.2 641.1ZM1560.7 644.7L1562.6 641.1L1563.3 641.5ZM1559.0 640.3L1563.0 640.9L1562.8 641.7ZM1562.7 637.2L1563.3 641.3L1562.5 641.3ZM1566.7 639.9L1563.1 641.7L1562.8 640.9Z" fill="#f4f6fa"/><path d="M1557.0 653.4L1554.5 649.9L1555.2 649.5ZM1552.0 652.9L1554.5 649.4L1555.2 650.0ZM1550.9 647.9L1555.0 649.3L1554.7 650.1ZM1555.3 645.4L1555.3 649.7L1554.4 649.6ZM1559.0 648.8L1554.9 650.1L1554.8 649.3Z" fill="#f4f6fa"/><path d="M1562.3 644.7L1559.8 641.5L1560.5 641.1ZM1557.6 644.4L1559.9 641.1L1560.5 641.6ZM1556.4 639.8L1560.3 640.9L1560.0 641.7ZM1560.4 637.3L1560.6 641.3L1559.8 641.3ZM1564.1 640.3L1560.3 641.7L1560.1 640.9Z" fill="#f4f6fa"/><path d="M1552.9 649.2L1549.7 648.9L1549.9 648.1ZM1550.1 651.7L1549.4 648.6L1550.2 648.5ZM1546.9 649.8L1549.6 648.2L1549.9 648.9ZM1547.7 646.2L1550.1 648.3L1549.5 648.8ZM1551.4 645.8L1550.1 648.7L1549.4 648.3Z" fill="#f4f6fa"/><path d="M1553.2 649.1L1547.8 648.7L1547.9 647.8ZM1548.8 653.6L1547.4 648.4L1548.3 648.2ZM1543.1 650.8L1547.6 647.9L1548.1 648.7ZM1544.0 644.5L1548.2 648.0L1547.5 648.6ZM1550.2 643.5L1548.3 648.5L1547.4 648.1Z" fill="#d23a3a"/><path d="M1548.0 640.4L1546.1 637.2L1546.8 636.9ZM1543.7 639.5L1546.2 636.7L1546.7 637.3ZM1543.2 635.2L1546.7 636.7L1546.3 637.4ZM1547.2 633.4L1546.9 637.1L1546.1 636.9ZM1550.2 636.6L1546.5 637.4L1546.4 636.6Z" fill="#f4f6fa"/><path d="M1545.9 654.9L1540.2 650.5L1541.0 649.6ZM1537.6 656.6L1540.1 649.8L1541.2 650.3ZM1533.4 649.2L1540.7 649.4L1540.5 650.6ZM1539.2 642.9L1541.2 649.9L1540.0 650.1ZM1546.9 646.5L1540.9 650.5L1540.3 649.5Z" fill="#d23a3a"/><path d="M1540.8 649.8L1538.2 648.2L1538.7 647.6ZM1537.3 650.7L1538.1 647.8L1538.8 648.1ZM1535.4 647.7L1538.5 647.5L1538.4 648.3ZM1537.7 645.0L1538.8 647.8L1538.1 648.0ZM1541.0 646.3L1538.7 648.3L1538.2 647.6Z" fill="#f4f6fa"/><path d="M1538.1 646.6L1535.4 644.9L1535.9 644.3ZM1534.5 647.5L1535.3 644.5L1536.0 644.8ZM1532.6 644.5L1535.7 644.2L1535.6 645.0ZM1534.9 641.6L1536.1 644.5L1535.3 644.7ZM1538.3 643.0L1535.9 645.0L1535.5 644.3Z" fill="#f4f6fa"/><path d="M1541.5 639.4L1536.5 632.8L1537.7 632.1ZM1531.8 638.8L1536.6 632.0L1537.7 632.9ZM1529.4 629.4L1537.4 631.8L1536.9 633.1ZM1537.7 624.2L1537.8 632.5L1536.4 632.4ZM1545.1 630.4L1537.3 633.1L1536.9 631.8Z" fill="#d23a3a"/><path d="M1537.0 642.3L1533.1 641.5L1533.4 640.7ZM1533.3 645.0L1532.8 641.1L1533.6 641.1ZM1529.5 642.4L1533.1 640.7L1533.4 641.5ZM1530.9 638.0L1533.6 640.9L1532.9 641.3ZM1535.5 637.9L1533.6 641.3L1532.9 640.9Z" fill="#f4f6fa"/><path d="M1532.8 645.1L1529.1 644.7L1529.2 643.9ZM1529.6 648.1L1528.7 644.4L1529.5 644.3ZM1525.7 645.9L1529.0 644.0L1529.3 644.7ZM1526.6 641.6L1529.4 644.1L1528.8 644.6ZM1531.0 641.0L1529.5 644.5L1528.8 644.1Z" fill="#f4f6fa"/><path d="M1526.6 651.5L1525.0 647.9L1525.7 647.7ZM1522.3 650.1L1525.1 647.5L1525.6 648.1ZM1522.2 645.6L1525.6 647.5L1525.1 648.1ZM1526.5 644.1L1525.7 647.9L1525.0 647.7ZM1529.2 647.8L1525.4 648.2L1525.4 647.4Z" fill="#f4f6fa"/><path d="M1524.8 650.2L1520.5 643.8L1521.7 643.2ZM1515.8 649.1L1520.6 643.0L1521.6 643.9ZM1514.1 640.2L1521.4 642.9L1520.8 644.1ZM1522.0 635.8L1521.7 643.6L1520.4 643.4ZM1528.6 642.0L1521.2 644.1L1521.0 642.8Z" fill="#d23a3a"/><path d="M1524.4 656.1L1519.0 653.1L1519.6 652.2ZM1517.6 658.6L1518.8 652.5L1519.8 652.8ZM1513.1 652.9L1519.2 652.1L1519.3 653.2ZM1517.1 646.9L1519.8 652.5L1518.8 652.8ZM1524.1 648.8L1519.6 653.0L1518.9 652.2Z" fill="#d23a3a"/><path d="M1521.9 638.0L1518.0 636.3L1518.4 635.5ZM1517.3 640.1L1517.8 635.8L1518.6 636.0ZM1514.0 636.3L1518.2 635.5L1518.3 636.3ZM1516.5 632.0L1518.6 635.7L1517.8 636.1ZM1521.4 633.0L1518.5 636.2L1517.9 635.6Z" fill="#f4f6fa"/><path d="M1521.8 651.6L1518.3 651.3L1518.4 650.5ZM1518.8 654.4L1518.0 651.0L1518.7 650.9ZM1515.1 652.4L1518.2 650.5L1518.5 651.3ZM1515.9 648.3L1518.6 650.6L1518.1 651.2ZM1520.1 647.8L1518.7 651.1L1518.0 650.7Z" fill="#f4f6fa"/><path d="M1518.3 639.7L1513.6 637.1L1514.1 636.3ZM1512.4 641.9L1513.4 636.6L1514.3 636.8ZM1508.5 636.9L1513.8 636.2L1513.9 637.1ZM1512.0 631.7L1514.3 636.5L1513.4 636.9ZM1518.1 633.4L1514.1 637.1L1513.6 636.3Z" fill="#d23a3a"/><path d="M1514.8 649.0L1513.3 645.9L1514.0 645.7ZM1511.0 647.9L1513.4 645.5L1513.9 646.1ZM1510.8 643.9L1513.8 645.5L1513.4 646.1ZM1514.5 642.5L1514.0 645.9L1513.2 645.7ZM1517.0 645.6L1513.6 646.2L1513.6 645.4Z" fill="#f4f6fa"/><path d="M1508.4 643.7L1506.0 642.2L1506.5 641.6ZM1505.1 644.5L1505.9 641.7L1506.6 642.0ZM1503.4 641.6L1506.3 641.5L1506.2 642.3ZM1505.6 639.1L1506.6 641.8L1505.8 642.0ZM1508.6 640.4L1506.4 642.2L1506.0 641.5Z" fill="#f4f6fa"/><path d="M1509.1 650.1L1506.8 648.4L1507.4 647.9ZM1505.9 650.6L1506.7 648.0L1507.5 648.3ZM1504.4 647.7L1507.2 647.7L1507.0 648.5ZM1506.6 645.4L1507.5 648.1L1506.7 648.2ZM1509.5 646.9L1507.3 648.5L1506.9 647.8Z" fill="#f4f6fa"/><path d="M1508.3 650.2L1505.9 648.1L1506.5 647.6ZM1504.6 650.6L1505.8 647.6L1506.5 648.0ZM1503.0 647.2L1506.3 647.4L1506.1 648.2ZM1505.8 644.6L1506.6 647.8L1505.8 647.9ZM1509.1 646.5L1506.3 648.2L1506.0 647.5Z" fill="#f4f6fa"/><path d="M1506.8 655.2L1504.2 652.5L1504.9 652.0ZM1502.5 655.3L1504.2 652.1L1504.9 652.5ZM1501.0 651.3L1504.7 651.9L1504.4 652.7ZM1504.4 648.6L1504.9 652.3L1504.1 652.3ZM1508.0 651.0L1504.7 652.7L1504.4 651.9Z" fill="#f4f6fa"/><path d="M1499.0 646.2L1494.1 641.1L1495.1 640.4ZM1490.8 646.7L1494.1 640.4L1495.1 641.1ZM1487.8 638.9L1494.8 640.2L1494.4 641.3ZM1494.2 633.7L1495.2 640.7L1494.0 640.8ZM1501.2 638.2L1494.8 641.3L1494.4 640.2Z" fill="#d23a3a"/><path d="M1502.0 652.8L1497.0 652.2L1497.1 651.4ZM1497.6 656.8L1496.6 651.9L1497.5 651.8ZM1492.5 653.9L1496.9 651.4L1497.2 652.2ZM1493.7 648.1L1497.4 651.5L1496.7 652.1ZM1499.5 647.4L1497.4 652.0L1496.7 651.6Z" fill="#d23a3a"/><path d="M1493.2 657.0L1490.5 654.7L1491.1 654.1ZM1489.1 657.5L1490.4 654.2L1491.1 654.6ZM1487.3 653.8L1490.8 654.0L1490.7 654.8ZM1490.3 650.9L1491.2 654.4L1490.4 654.5ZM1494.0 652.9L1490.9 654.8L1490.6 654.1Z" fill="#f4f6fa"/><path d="M1487.1 647.3L1484.9 646.6L1485.3 645.9ZM1484.7 648.4L1484.7 646.1L1485.5 646.3ZM1482.9 646.5L1485.1 645.8L1485.2 646.6ZM1484.2 644.2L1485.5 646.0L1484.8 646.4ZM1486.8 644.7L1485.4 646.5L1484.9 645.9Z" fill="#f4f6fa"/><path d="M1492.4 650.3L1488.6 650.6L1488.7 649.8ZM1489.7 653.8L1488.3 650.3L1489.0 650.1ZM1485.5 652.3L1488.4 649.9L1488.9 650.5ZM1485.6 647.9L1488.9 649.9L1488.4 650.5ZM1489.9 646.6L1489.0 650.3L1488.3 650.0Z" fill="#f4f6fa"/><path d="M1489.9 658.3L1487.6 655.5L1488.3 655.1ZM1485.7 658.1L1487.6 655.1L1488.2 655.6ZM1484.6 654.1L1488.1 655.0L1487.8 655.7ZM1488.1 651.8L1488.3 655.3L1487.5 655.3ZM1491.3 654.4L1488.0 655.7L1487.8 654.9Z" fill="#f4f6fa"/><path d="M1483.6 656.8L1480.1 655.6L1480.5 654.9ZM1479.9 658.9L1479.9 655.2L1480.7 655.3ZM1476.8 655.9L1480.2 654.9L1480.4 655.7ZM1478.6 652.1L1480.7 655.1L1480.0 655.5ZM1482.8 652.6L1480.6 655.5L1480.0 655.0Z" fill="#f4f6fa"/><path d="M1483.8 659.6L1481.2 657.1L1481.9 656.6ZM1479.6 659.8L1481.2 656.6L1481.9 657.1ZM1478.1 655.9L1481.7 656.5L1481.5 657.2ZM1481.4 653.3L1482.0 656.8L1481.2 656.9ZM1484.9 655.6L1481.7 657.2L1481.4 656.5Z" fill="#f4f6fa"/><path d="M1490.5 664.4L1486.2 663.4L1486.4 662.7ZM1486.3 667.4L1485.9 663.0L1486.7 663.0ZM1482.1 664.4L1486.2 662.7L1486.4 663.4ZM1483.7 659.5L1486.6 662.8L1486.0 663.3ZM1488.8 659.5L1486.6 663.3L1486.0 662.8Z" fill="#d23a3a"/><path d="M1483.0 657.8L1480.1 656.5L1480.6 655.8ZM1479.5 659.1L1479.9 656.0L1480.7 656.2ZM1477.2 656.3L1480.3 655.7L1480.4 656.5ZM1479.2 653.2L1480.7 656.0L1480.0 656.3ZM1482.8 654.2L1480.6 656.4L1480.1 655.8Z" fill="#f4f6fa"/><path d="M1472.8 657.4L1469.8 655.4L1470.3 654.8ZM1468.7 658.5L1469.7 654.9L1470.4 655.2ZM1466.4 654.8L1470.1 654.7L1470.0 655.5ZM1469.2 651.5L1470.4 655.0L1469.7 655.2ZM1473.2 653.2L1470.3 655.4L1469.8 654.7Z" fill="#f4f6fa"/><path d="M1473.2 660.5L1471.5 658.6L1472.2 658.2ZM1470.2 660.3L1471.6 658.1L1472.2 658.6ZM1469.6 657.4L1472.0 658.0L1471.7 658.7ZM1472.1 655.9L1472.3 658.4L1471.5 658.3ZM1474.3 657.8L1472.0 658.8L1471.8 658.0Z" fill="#f4f6fa"/><path d="M1468.8 662.1L1466.5 660.7L1467.0 660.1ZM1465.8 662.9L1466.4 660.3L1467.1 660.6ZM1464.1 660.2L1466.8 660.0L1466.7 660.8ZM1466.1 657.8L1467.1 660.3L1466.4 660.5ZM1469.0 659.0L1467.0 660.7L1466.5 660.1Z" fill="#f4f6fa"/><path d="M1482.4 676.2L1478.6 675.1L1478.9 674.3ZM1478.4 678.6L1478.3 674.7L1479.1 674.7ZM1474.9 675.6L1478.6 674.3L1478.8 675.1ZM1476.7 671.4L1479.1 674.5L1478.4 674.9ZM1481.3 671.7L1479.0 675.0L1478.4 674.4Z" fill="#f4f6fa"/><path d="M1468.2 668.6L1465.9 668.4L1466.1 667.7ZM1466.2 670.3L1465.6 668.1L1466.4 668.0ZM1463.9 668.9L1465.9 667.7L1466.2 668.4ZM1464.6 666.3L1466.3 667.8L1465.7 668.3ZM1467.2 666.2L1466.4 668.3L1465.7 667.8Z" fill="#f4f6fa"/><path d="M1480.8 678.7L1474.6 677.1L1474.9 676.1ZM1474.7 683.0L1474.2 676.6L1475.3 676.6ZM1468.7 678.5L1474.6 676.1L1474.9 677.1ZM1471.1 671.4L1475.2 676.3L1474.3 676.9ZM1478.6 671.6L1475.2 676.9L1474.3 676.3Z" fill="#d23a3a"/><path d="M1472.0 677.7L1470.7 675.4L1471.5 675.1ZM1469.1 676.9L1470.8 675.0L1471.3 675.6ZM1468.9 673.9L1471.3 674.9L1470.9 675.6ZM1471.8 672.8L1471.5 675.4L1470.7 675.2ZM1473.7 675.1L1471.1 675.7L1471.1 674.9Z" fill="#f4f6fa"/><path d="M1468.8 682.5L1466.1 679.3L1466.7 678.8ZM1463.9 682.4L1466.1 678.8L1466.7 679.3ZM1462.4 677.8L1466.5 678.7L1466.3 679.5ZM1466.4 674.9L1466.8 679.1L1466.0 679.1ZM1470.4 677.8L1466.5 679.5L1466.3 678.7Z" fill="#f4f6fa"/><path d="M1459.8 680.7L1457.0 678.8L1457.5 678.2ZM1456.0 681.6L1456.9 678.4L1457.6 678.7ZM1453.9 678.2L1457.3 678.1L1457.2 678.9ZM1456.5 675.3L1457.7 678.4L1456.9 678.6ZM1460.1 676.8L1457.5 678.9L1457.1 678.2Z" fill="#f4f6fa"/><path d="M1466.6 683.4L1463.5 683.6L1463.6 682.8ZM1464.3 686.1L1463.1 683.3L1463.9 683.1ZM1461.0 684.8L1463.3 682.9L1463.7 683.5ZM1461.2 681.2L1463.8 682.9L1463.3 683.5ZM1464.7 680.4L1463.9 683.3L1463.2 683.0Z" fill="#f4f6fa"/><path d="M1465.2 684.5L1461.1 683.4L1461.5 682.6ZM1461.0 687.1L1460.9 682.9L1461.7 683.0ZM1457.3 684.0L1461.2 682.6L1461.4 683.4ZM1459.1 679.4L1461.7 682.7L1461.0 683.2ZM1464.0 679.8L1461.6 683.2L1461.0 682.7Z" fill="#f4f6fa"/><path d="M1472.9 689.0L1469.6 689.2L1469.7 688.4ZM1470.4 691.9L1469.2 688.9L1470.0 688.7ZM1466.9 690.5L1469.4 688.5L1469.8 689.1ZM1467.1 686.7L1469.9 688.5L1469.4 689.1ZM1470.8 685.8L1470.0 688.9L1469.3 688.7Z" fill="#f4f6fa"/><path d="M1463.4 688.3L1460.6 688.5L1460.6 687.7ZM1461.2 690.8L1460.2 688.2L1461.0 688.0ZM1458.2 689.5L1460.4 687.7L1460.8 688.4ZM1458.5 686.2L1460.9 687.8L1460.3 688.4ZM1461.7 685.5L1461.0 688.2L1460.2 687.9Z" fill="#f4f6fa"/><path d="M1457.2 692.3L1452.9 691.5L1453.2 690.7ZM1453.2 695.4L1452.6 691.1L1453.5 691.1ZM1449.0 692.5L1452.9 690.7L1453.2 691.5ZM1450.4 687.7L1453.4 690.8L1452.7 691.3ZM1455.4 687.5L1453.4 691.3L1452.7 690.8Z" fill="#f4f6fa"/><path d="M1464.4 693.4L1456.8 692.8L1457.0 691.6ZM1458.1 699.7L1456.3 692.3L1457.6 692.1ZM1450.2 695.6L1456.6 691.6L1457.2 692.8ZM1451.6 686.9L1457.4 691.7L1456.5 692.7ZM1460.3 685.5L1457.5 692.5L1456.3 691.9Z" fill="#d23a3a"/><path d="M1453.1 692.1L1450.0 692.2L1450.1 691.4ZM1450.7 694.8L1449.6 691.9L1450.4 691.7ZM1447.4 693.4L1449.8 691.5L1450.2 692.2ZM1447.7 689.8L1450.3 691.5L1449.8 692.1ZM1451.2 689.0L1450.4 692.0L1449.7 691.7Z" fill="#f4f6fa"/><path d="M1456.1 695.9L1453.8 696.2L1453.8 695.4ZM1454.4 698.1L1453.4 695.9L1454.2 695.7ZM1451.9 697.1L1453.6 695.5L1454.0 696.2ZM1452.0 694.4L1454.1 695.5L1453.6 696.1ZM1454.6 693.6L1454.2 696.0L1453.4 695.7Z" fill="#f4f6fa"/><path d="M1455.7 698.8L1451.5 696.6L1452.1 695.8ZM1450.5 700.7L1451.3 696.0L1452.3 696.3ZM1447.1 696.3L1451.8 695.7L1451.8 696.6ZM1450.2 691.7L1452.2 696.0L1451.4 696.3ZM1455.5 693.3L1452.1 696.5L1451.5 695.8Z" fill="#f4f6fa"/><path d="M1473.0 705.3L1465.7 702.6L1466.2 701.4ZM1464.9 709.7L1465.3 701.9L1466.6 702.1ZM1458.3 703.4L1465.8 701.3L1466.1 702.6ZM1462.2 695.2L1466.5 701.7L1465.4 702.3ZM1471.3 696.3L1466.4 702.4L1465.5 701.5Z" fill="#d23a3a"/><path d="M1474.7 706.8L1467.9 705.8L1468.2 704.6ZM1468.6 712.0L1467.5 705.2L1468.6 705.2ZM1461.7 707.8L1467.8 704.7L1468.3 705.7ZM1463.6 700.0L1468.5 704.8L1467.6 705.6ZM1471.7 699.4L1468.6 705.5L1467.6 704.9Z" fill="#d23a3a"/><path d="M1469.4 710.9L1467.0 707.0L1467.8 706.6ZM1464.2 710.1L1467.0 706.5L1467.7 707.1ZM1463.3 704.8L1467.6 706.4L1467.2 707.2ZM1468.0 702.3L1467.8 706.9L1466.9 706.8ZM1471.8 706.1L1467.4 707.3L1467.3 706.4Z" fill="#f4f6fa"/><path d="M1457.6 707.1L1454.2 707.1L1454.3 706.3ZM1454.9 710.0L1453.8 706.8L1454.6 706.6ZM1451.3 708.4L1454.0 706.4L1454.4 707.1ZM1451.7 704.5L1454.5 706.4L1453.9 707.0ZM1455.6 703.7L1454.6 706.9L1453.8 706.6Z" fill="#f4f6fa"/><path d="M1468.1 711.4L1464.4 707.9L1465.0 707.3ZM1462.2 712.0L1464.3 707.4L1465.1 707.8ZM1459.7 706.6L1464.8 707.2L1464.6 708.0ZM1464.2 702.6L1465.1 707.6L1464.3 707.7ZM1469.3 705.6L1464.9 708.0L1464.5 707.2Z" fill="#d23a3a"/><path d="M1466.0 714.6L1463.2 713.9L1463.5 713.2ZM1463.2 716.3L1463.0 713.5L1463.8 713.6ZM1460.7 714.2L1463.3 713.2L1463.5 713.9ZM1461.9 711.2L1463.7 713.3L1463.0 713.8ZM1465.2 711.4L1463.7 713.8L1463.1 713.3Z" fill="#f4f6fa"/><path d="M1453.2 714.3L1452.0 712.1L1452.7 711.9ZM1450.4 713.5L1452.1 711.7L1452.6 712.3ZM1450.4 710.6L1452.6 711.7L1452.1 712.3ZM1453.1 709.7L1452.7 712.1L1452.0 711.9ZM1454.8 711.9L1452.4 712.4L1452.3 711.6Z" fill="#f4f6fa"/><path d="M1462.9 714.7L1460.0 714.2L1460.2 713.4ZM1460.1 716.8L1459.7 713.8L1460.5 713.8ZM1457.3 714.7L1460.0 713.4L1460.2 714.2ZM1458.4 711.4L1460.4 713.6L1459.8 714.0ZM1461.8 711.4L1460.4 714.1L1459.8 713.6Z" fill="#f4f6fa"/><path d="M1472.4 722.2L1468.0 719.2L1468.6 718.5ZM1466.4 723.7L1467.9 718.7L1468.7 719.0ZM1463.1 718.5L1468.3 718.4L1468.3 719.3ZM1467.0 713.8L1468.7 718.7L1467.9 719.0ZM1472.7 716.0L1468.5 719.2L1468.1 718.5Z" fill="#d23a3a"/><path d="M1472.4 725.0L1468.4 720.4L1469.2 719.8ZM1465.2 725.0L1468.4 719.8L1469.2 720.4ZM1463.0 718.2L1468.9 719.6L1468.6 720.6ZM1468.8 714.0L1469.3 720.1L1468.3 720.1ZM1474.6 718.2L1468.9 720.6L1468.6 719.6Z" fill="#d23a3a"/><path d="M1456.6 724.6L1453.0 723.2L1453.3 722.5ZM1452.6 726.7L1452.7 722.8L1453.5 722.9ZM1449.3 723.5L1453.1 722.5L1453.2 723.3ZM1451.3 719.4L1453.5 722.7L1452.8 723.1ZM1455.8 720.1L1453.4 723.1L1452.8 722.6Z" fill="#f4f6fa"/><path d="M1460.0 729.8L1456.6 727.7L1457.1 727.1ZM1455.5 731.2L1456.4 727.3L1457.2 727.5ZM1452.8 727.3L1456.8 727.0L1456.8 727.8ZM1455.7 723.6L1457.2 727.3L1456.4 727.5ZM1460.1 725.2L1457.1 727.7L1456.6 727.1Z" fill="#f4f6fa"/><path d="M1473.0 728.4L1470.4 727.2L1470.8 726.5ZM1469.9 729.6L1470.2 726.8L1471.0 727.0ZM1467.8 727.1L1470.5 726.5L1470.6 727.3ZM1469.5 724.3L1470.9 726.7L1470.2 727.0ZM1472.7 725.1L1470.8 727.2L1470.3 726.6Z" fill="#f4f6fa"/><path d="M1464.9 734.0L1458.8 732.8L1459.1 731.8ZM1459.2 738.5L1458.4 732.3L1459.5 732.2ZM1453.1 734.4L1458.8 731.8L1459.2 732.8ZM1455.1 727.4L1459.4 731.9L1458.6 732.6ZM1462.4 727.1L1459.4 732.6L1458.5 732.0Z" fill="#d23a3a"/><path d="M1463.9 737.0L1461.9 733.9L1462.6 733.5ZM1459.6 736.3L1461.9 733.4L1462.5 734.0ZM1458.9 732.0L1462.4 733.3L1462.0 734.1ZM1462.8 730.1L1462.6 733.8L1461.8 733.6ZM1465.9 733.1L1462.3 734.1L1462.2 733.3Z" fill="#f4f6fa"/><path d="M1473.0 735.7L1469.7 735.0L1469.9 734.2ZM1469.7 737.9L1469.4 734.6L1470.2 734.6ZM1466.6 735.6L1469.7 734.2L1469.9 735.0ZM1467.9 731.9L1470.1 734.4L1469.5 734.8ZM1471.8 731.9L1470.1 734.8L1469.5 734.4Z" fill="#f4f6fa"/><path d="M1480.0 738.6L1475.8 737.8L1476.0 737.0ZM1476.0 741.6L1475.5 737.4L1476.3 737.4ZM1471.9 738.7L1475.8 737.0L1476.0 737.8ZM1473.3 734.0L1476.2 737.1L1475.6 737.6ZM1478.4 733.9L1476.2 737.6L1475.6 737.1Z" fill="#f4f6fa"/><path d="M1475.1 738.1L1471.9 736.1L1472.4 735.5ZM1470.8 739.4L1471.8 735.6L1472.5 735.9ZM1468.3 735.7L1472.1 735.4L1472.1 736.2ZM1471.1 732.1L1472.5 735.7L1471.7 735.9ZM1475.3 733.6L1472.4 736.1L1471.9 735.4Z" fill="#f4f6fa"/><path d="M1469.3 746.2L1464.1 745.6L1464.3 744.7ZM1464.8 750.3L1463.8 745.2L1464.7 745.1ZM1459.5 747.3L1464.0 744.8L1464.4 745.6ZM1460.7 741.4L1464.5 744.9L1463.9 745.5ZM1466.8 740.7L1464.6 745.4L1463.8 745.0Z" fill="#d23a3a"/><path d="M1467.0 748.1L1463.9 747.7L1464.1 746.9ZM1464.2 750.4L1463.6 747.3L1464.4 747.3ZM1461.1 748.4L1463.9 746.9L1464.2 747.7ZM1462.1 744.8L1464.3 747.0L1463.7 747.5ZM1465.8 744.7L1464.4 747.5L1463.7 747.1Z" fill="#f4f6fa"/><path d="M1480.5 747.3L1478.2 746.2L1478.6 745.6ZM1477.7 748.4L1478.0 745.8L1478.8 746.0ZM1475.8 746.0L1478.4 745.5L1478.4 746.3ZM1477.4 743.5L1478.7 745.8L1478.0 746.0ZM1480.4 744.3L1478.6 746.2L1478.1 745.6Z" fill="#f4f6fa"/><path d="M1466.4 751.6L1463.9 750.7L1464.3 750.0ZM1463.7 752.9L1463.7 750.3L1464.5 750.4ZM1461.6 750.7L1464.1 750.0L1464.2 750.8ZM1463.0 748.0L1464.5 750.2L1463.8 750.5ZM1466.0 748.6L1464.4 750.7L1463.9 750.1Z" fill="#f4f6fa"/><path d="M1474.0 752.7L1471.2 749.6L1471.8 749.1ZM1469.1 752.8L1471.2 749.1L1471.8 749.6ZM1467.5 748.1L1471.6 748.9L1471.4 749.7ZM1471.4 745.2L1471.9 749.3L1471.1 749.4ZM1475.5 748.0L1471.6 749.7L1471.4 749.0Z" fill="#f4f6fa"/><path d="M1482.1 753.1L1477.7 751.5L1478.1 750.6ZM1477.3 755.6L1477.5 751.0L1478.4 751.1ZM1473.4 751.8L1477.9 750.6L1478.0 751.5ZM1475.8 747.0L1478.4 750.8L1477.5 751.3ZM1481.2 747.7L1478.3 751.4L1477.6 750.7Z" fill="#f4f6fa"/><path d="M1471.8 761.4L1467.9 761.5L1467.9 760.7ZM1468.8 764.9L1467.5 761.2L1468.3 761.0ZM1464.6 763.1L1467.7 760.7L1468.1 761.4ZM1464.9 758.6L1468.2 760.8L1467.6 761.4ZM1469.4 757.5L1468.3 761.2L1467.5 760.9Z" fill="#f4f6fa"/><path d="M1478.6 764.4L1475.4 763.1L1475.8 762.4ZM1475.0 766.1L1475.2 762.7L1476.0 762.8ZM1472.2 763.2L1475.6 762.4L1475.7 763.2ZM1474.1 759.7L1476.0 762.6L1475.2 762.9ZM1478.1 760.4L1475.9 763.0L1475.3 762.5Z" fill="#f4f6fa"/><path d="M1484.3 761.6L1482.0 760.2L1482.5 759.6ZM1481.2 762.4L1481.8 759.8L1482.6 760.1ZM1479.5 759.7L1482.2 759.5L1482.2 760.3ZM1481.5 757.3L1482.6 759.8L1481.8 760.0ZM1484.5 758.5L1482.4 760.3L1482.0 759.6Z" fill="#f4f6fa"/><path d="M1485.8 758.7L1483.0 757.5L1483.5 756.8ZM1482.5 760.1L1482.9 757.1L1483.6 757.2ZM1480.3 757.3L1483.2 756.8L1483.3 757.5ZM1482.1 754.4L1483.6 757.0L1482.9 757.3ZM1485.6 755.2L1483.5 757.5L1483.0 756.8Z" fill="#f4f6fa"/><path d="M1481.7 768.0L1479.8 766.5L1480.4 766.0ZM1478.9 768.2L1479.8 766.0L1480.5 766.4ZM1477.8 765.6L1480.2 765.8L1480.0 766.6ZM1479.9 763.8L1480.5 766.2L1479.7 766.2ZM1482.3 765.3L1480.3 766.6L1480.0 765.8Z" fill="#f4f6fa"/><path d="M1487.0 763.7L1482.3 761.6L1482.7 760.9ZM1481.6 766.3L1482.1 761.2L1482.9 761.3ZM1477.3 761.9L1482.4 760.8L1482.5 761.7ZM1480.2 756.6L1482.9 761.1L1482.1 761.4ZM1486.2 757.7L1482.8 761.6L1482.2 760.9Z" fill="#d23a3a"/><path d="M1486.9 773.4L1479.2 770.4L1479.8 769.2ZM1478.4 777.9L1478.8 769.7L1480.2 769.9ZM1471.4 771.2L1479.4 769.1L1479.6 770.5ZM1475.6 762.5L1480.1 769.5L1478.9 770.1ZM1485.2 763.9L1480.0 770.3L1479.0 769.3Z" fill="#d23a3a"/><path d="M1485.4 775.2L1480.4 773.1L1480.8 772.3ZM1479.7 778.0L1480.1 772.6L1481.1 772.8ZM1475.2 773.5L1480.5 772.2L1480.7 773.1ZM1478.2 767.8L1481.0 772.5L1480.2 772.9ZM1484.5 768.9L1480.9 773.0L1480.3 772.3Z" fill="#d23a3a"/><path d="M1481.9 777.4L1479.7 776.6L1480.1 775.9ZM1479.4 778.6L1479.5 776.2L1480.3 776.3ZM1477.5 776.6L1479.8 775.9L1479.9 776.7ZM1478.8 774.1L1480.2 776.1L1479.5 776.4ZM1481.6 774.6L1480.1 776.5L1479.6 776.0Z" fill="#f4f6fa"/><path d="M1497.4 767.9L1492.5 765.5L1493.0 764.7ZM1491.6 770.4L1492.3 765.0L1493.2 765.2ZM1487.4 765.7L1492.7 764.7L1492.8 765.6ZM1490.6 760.2L1493.2 765.0L1492.3 765.3ZM1496.8 761.6L1493.1 765.5L1492.5 764.8Z" fill="#d23a3a"/><path d="M1500.0 767.8L1496.0 767.5L1496.2 766.7ZM1496.6 771.0L1495.7 767.2L1496.5 767.1ZM1492.5 768.8L1495.9 766.8L1496.3 767.5ZM1493.4 764.3L1496.4 766.8L1495.8 767.4ZM1498.0 763.7L1496.4 767.3L1495.7 766.9Z" fill="#f4f6fa"/><path d="M1501.3 773.2L1496.9 772.3L1497.1 771.5ZM1497.1 776.4L1496.5 771.9L1497.4 771.9ZM1492.8 773.4L1496.8 771.5L1497.1 772.3ZM1494.3 768.4L1497.3 771.6L1496.6 772.2ZM1499.5 768.2L1497.4 772.2L1496.6 771.7Z" fill="#f4f6fa"/><path d="M1502.2 777.8L1496.7 773.8L1497.4 772.9ZM1494.4 779.7L1496.5 773.2L1497.6 773.6ZM1490.2 772.8L1497.1 772.8L1497.0 774.0ZM1495.5 766.7L1497.6 773.2L1496.5 773.5ZM1502.9 769.8L1497.3 773.9L1496.7 772.9Z" fill="#d23a3a"/><path d="M1495.5 790.6L1493.4 788.7L1494.0 788.2ZM1492.3 790.8L1493.4 788.3L1494.1 788.7ZM1491.0 787.8L1493.8 788.1L1493.6 788.9ZM1493.5 785.7L1494.1 788.5L1493.3 788.5ZM1496.3 787.4L1493.9 788.9L1493.6 788.1Z" fill="#f4f6fa"/><path d="M1506.3 784.8L1499.5 784.6L1499.6 783.4ZM1500.9 790.7L1499.0 784.1L1500.1 783.9ZM1493.6 787.4L1499.3 783.5L1499.8 784.5ZM1494.5 779.4L1499.9 783.6L1499.2 784.4ZM1502.4 777.8L1500.1 784.2L1499.0 783.7Z" fill="#d23a3a"/><path d="M1505.0 780.3L1501.6 779.4L1501.9 778.7ZM1501.6 782.6L1501.3 779.1L1502.1 779.1ZM1498.4 780.0L1501.6 778.7L1501.8 779.5ZM1499.8 776.2L1502.1 778.8L1501.4 779.3ZM1503.9 776.3L1502.1 779.3L1501.4 778.8Z" fill="#f4f6fa"/><path d="M1509.0 780.3L1506.2 780.4L1506.3 779.6ZM1506.8 782.8L1505.8 780.1L1506.6 779.9ZM1503.8 781.4L1506.0 779.7L1506.4 780.3ZM1504.2 778.1L1506.5 779.7L1506.0 780.3ZM1507.4 777.4L1506.6 780.2L1505.9 779.8Z" fill="#f4f6fa"/><path d="M1510.0 786.3L1507.3 783.8L1508.0 783.3ZM1505.7 786.6L1507.3 783.3L1508.0 783.7ZM1504.1 782.6L1507.8 783.1L1507.6 783.9ZM1507.4 779.9L1508.1 783.5L1507.3 783.6ZM1511.0 782.2L1507.8 783.9L1507.5 783.2Z" fill="#f4f6fa"/><path d="M1513.5 783.7L1511.4 782.6L1511.8 782.0ZM1510.9 784.5L1511.2 782.2L1512.0 782.4ZM1509.3 782.3L1511.6 781.9L1511.6 782.7ZM1510.9 780.1L1512.0 782.2L1511.2 782.4ZM1513.5 780.9L1511.8 782.6L1511.4 782.0Z" fill="#f4f6fa"/><path d="M1515.9 790.8L1513.0 786.0L1513.9 785.5ZM1509.4 789.6L1513.1 785.4L1513.8 786.1ZM1508.6 783.1L1513.7 785.3L1513.2 786.2ZM1514.4 780.3L1513.9 785.8L1513.0 785.7ZM1519.0 785.0L1513.5 786.2L1513.4 785.3Z" fill="#d23a3a"/><path d="M1520.4 786.4L1518.7 783.0L1519.4 782.7ZM1516.1 785.2L1518.8 782.5L1519.3 783.1ZM1515.9 780.8L1519.3 782.5L1518.8 783.2ZM1520.0 779.2L1519.4 782.9L1518.7 782.7ZM1522.8 782.6L1519.1 783.2L1519.0 782.4Z" fill="#f4f6fa"/><path d="M1523.5 793.9L1520.0 792.3L1520.4 791.7ZM1519.4 795.7L1519.8 791.9L1520.6 792.1ZM1516.4 792.4L1520.2 791.6L1520.3 792.4ZM1518.6 788.5L1520.6 791.8L1519.9 792.2ZM1523.0 789.4L1520.5 792.3L1519.9 791.7Z" fill="#f4f6fa"/><path d="M1528.8 787.9L1524.2 788.2L1524.3 787.2ZM1525.5 792.1L1523.8 787.8L1524.7 787.6ZM1520.4 790.2L1524.0 787.3L1524.5 788.1ZM1520.7 784.8L1524.5 787.3L1524.0 788.1ZM1525.9 783.4L1524.7 787.9L1523.8 787.5Z" fill="#f4f6fa"/><path d="M1525.6 791.4L1523.0 791.2L1523.1 790.4ZM1523.2 793.4L1522.7 790.8L1523.4 790.8ZM1520.7 791.8L1522.9 790.4L1523.2 791.2ZM1521.4 788.8L1523.4 790.5L1522.7 791.0ZM1524.4 788.6L1523.4 791.0L1522.7 790.6Z" fill="#f4f6fa"/><path d="M1527.3 794.3L1524.1 793.8L1524.3 793.0ZM1524.3 796.6L1523.8 793.4L1524.6 793.4ZM1521.2 794.4L1524.1 793.0L1524.4 793.8ZM1522.3 790.8L1524.5 793.1L1523.9 793.6ZM1526.1 790.8L1524.6 793.6L1523.9 793.2Z" fill="#f4f6fa"/><path d="M1529.6 800.0L1527.7 796.1L1528.5 795.8ZM1524.7 798.6L1527.9 795.6L1528.4 796.3ZM1524.5 793.5L1528.4 795.6L1527.9 796.3ZM1529.3 791.7L1528.5 796.1L1527.7 795.8ZM1532.5 795.8L1528.1 796.4L1528.1 795.5Z" fill="#f4f6fa"/><path d="M1535.8 792.3L1532.9 789.6L1533.5 789.0ZM1531.1 792.7L1532.9 789.1L1533.5 789.5ZM1529.3 788.4L1533.3 788.9L1533.1 789.7ZM1532.9 785.3L1533.6 789.3L1532.8 789.3ZM1536.9 787.8L1533.4 789.7L1533.1 788.9Z" fill="#f4f6fa"/><path d="M1534.3 802.0L1530.8 800.8L1531.2 800.0ZM1530.4 804.0L1530.6 800.3L1531.4 800.5ZM1527.4 801.0L1530.9 800.0L1531.1 800.8ZM1529.3 797.1L1531.4 800.2L1530.6 800.6ZM1533.6 797.8L1531.3 800.7L1530.7 800.1Z" fill="#f4f6fa"/><path d="M1539.9 791.5L1535.1 789.8L1535.4 789.0ZM1534.8 794.5L1534.8 789.4L1535.7 789.5ZM1530.2 790.6L1535.1 789.0L1535.3 789.9ZM1532.6 785.0L1535.6 789.2L1534.9 789.7ZM1538.6 785.6L1535.6 789.7L1534.9 789.1Z" fill="#d23a3a"/><path d="M1537.3 795.9L1534.2 792.7L1534.8 792.2ZM1532.1 796.2L1534.1 792.2L1534.8 792.7ZM1530.2 791.3L1534.6 792.1L1534.4 792.8ZM1534.2 788.0L1534.9 792.4L1534.1 792.5ZM1538.6 790.8L1534.6 792.8L1534.3 792.1Z" fill="#d23a3a"/><path d="M1543.4 800.3L1539.2 793.6L1540.4 793.0ZM1534.3 798.9L1539.3 792.8L1540.3 793.7ZM1532.7 789.7L1540.1 792.7L1539.5 793.9ZM1541.0 785.5L1540.5 793.4L1539.1 793.2ZM1547.6 792.0L1539.9 793.9L1539.7 792.6Z" fill="#d23a3a"/><path d="M1545.7 792.1L1541.7 791.2L1541.9 790.5ZM1541.8 794.9L1541.4 790.9L1542.2 790.9ZM1537.9 792.1L1541.7 790.5L1541.9 791.2ZM1539.4 787.6L1542.1 790.6L1541.5 791.1ZM1544.2 787.6L1542.1 791.1L1541.5 790.6Z" fill="#f4f6fa"/><path d="M1547.2 795.2L1543.6 792.7L1544.2 792.0ZM1542.2 796.3L1543.5 792.2L1544.3 792.5ZM1539.6 792.0L1544.0 791.9L1543.9 792.8ZM1542.9 788.1L1544.4 792.2L1543.5 792.4ZM1547.7 790.1L1544.2 792.7L1543.7 792.0Z" fill="#f4f6fa"/><path d="M1550.4 801.4L1548.0 800.6L1548.3 799.9ZM1547.7 802.8L1547.8 800.2L1548.5 800.3ZM1545.7 800.7L1548.1 799.9L1548.2 800.7ZM1547.0 798.0L1548.5 800.1L1547.8 800.5ZM1549.9 798.5L1548.4 800.6L1547.9 800.0Z" fill="#f4f6fa"/><path d="M1551.3 791.8L1549.2 787.6L1550.1 787.3ZM1546.0 790.3L1549.4 787.1L1549.9 787.8ZM1545.8 784.9L1549.9 787.1L1549.4 787.9ZM1550.9 783.0L1550.1 787.6L1549.2 787.4ZM1554.3 787.3L1549.7 787.9L1549.6 787.0Z" fill="#f4f6fa"/><path d="M1555.5 803.4L1553.6 799.2L1554.5 798.9ZM1550.3 801.8L1553.7 798.6L1554.3 799.4ZM1550.2 796.3L1554.3 798.6L1553.8 799.4ZM1555.4 794.6L1554.5 799.2L1553.6 798.9ZM1558.6 798.9L1554.0 799.5L1554.0 798.6Z" fill="#f4f6fa"/><path d="M1557.3 801.0L1555.6 797.2L1556.4 796.9ZM1552.7 799.5L1555.8 796.7L1556.3 797.4ZM1552.7 794.7L1556.2 796.7L1555.8 797.4ZM1557.2 793.2L1556.4 797.2L1555.6 796.9ZM1560.1 797.0L1556.0 797.5L1556.0 796.7Z" fill="#f4f6fa"/><path d="M1561.2 792.5L1558.1 791.7L1558.4 790.9ZM1558.0 794.5L1557.9 791.3L1558.7 791.3ZM1555.2 792.0L1558.2 790.9L1558.4 791.7ZM1556.6 788.6L1558.6 791.1L1557.9 791.5ZM1560.3 788.9L1558.6 791.6L1558.0 791.0Z" fill="#f4f6fa"/><path d="M1563.7 804.7L1561.9 800.9L1562.7 800.6ZM1559.0 803.3L1562.1 800.4L1562.6 801.1ZM1558.9 798.4L1562.5 800.4L1562.1 801.1ZM1563.5 796.7L1562.7 800.9L1561.9 800.6ZM1566.5 800.6L1562.3 801.2L1562.3 800.3Z" fill="#f4f6fa"/><path d="M1566.1 792.9L1563.5 792.8L1563.7 792.0ZM1563.8 795.0L1563.2 792.4L1564.0 792.3ZM1561.2 793.4L1563.4 792.0L1563.8 792.8ZM1561.9 790.4L1563.9 792.1L1563.3 792.6ZM1564.9 790.2L1563.9 792.6L1563.3 792.2Z" fill="#f4f6fa"/><path d="M1569.8 803.1L1564.4 803.4L1564.4 802.5ZM1565.9 808.2L1563.9 803.1L1564.8 802.8ZM1559.9 806.1L1564.1 802.6L1564.6 803.3ZM1560.0 799.6L1564.6 802.6L1564.1 803.3ZM1566.2 797.8L1564.8 803.1L1563.9 802.8Z" fill="#d23a3a"/><path d="M1572.7 789.0L1566.9 786.7L1567.4 785.8ZM1566.3 792.4L1566.6 786.2L1567.7 786.3ZM1561.1 787.3L1567.1 785.8L1567.3 786.8ZM1564.3 780.8L1567.6 786.0L1566.7 786.5ZM1571.5 781.9L1567.5 786.6L1566.8 785.9Z" fill="#d23a3a"/></g><defs><linearGradient id="rb" x1="0" y1="-14" x2="0" y2="14" gradientUnits="userSpaceOnUse"><stop offset="0" stop-color="#cfd6c8"/><stop offset="0.45" stop-color="#ffffff"/><stop offset="1" stop-color="#b8c0bb"/></linearGradient><linearGradient id="rn" x1="31" y1="0" x2="52" y2="0" gradientUnits="userSpaceOnUse"><stop offset="0" stop-color="#8aa6d0"/><stop offset="1" stop-color="#f0f4fa"/></linearGradient></defs><g transform="translate(1589.6 782) rotate(-24.5)"><rect x="-6.5" y="-11" width="6.5" height="5" fill="#dfe6ee"/><rect x="-6.5" y="-2.5" width="6.5" height="5" fill="#dfe6ee"/><rect x="-6.5" y="6" width="6.5" height="5" fill="#dfe6ee"/><path d="M-1 -9.6 L7 -10.8 L7 10.8 L-1 9.6 Z" fill="#9fb3d2"/><path d="M7 -10.8 Q18 -13.5 29 -14.3 L29 14.3 Q18 13.5 7 10.8 Z" fill="url(#rb)"/><path d="M29 -14.3 L33 -14.3 Q44 -10 48.5 -2.5 L48.5 2.5 Q44 10 33 14.3 L29 14.3 Z" fill="url(#rn)"/><path d="M29 -14.3 V14.3 M32 -14.3 V14.3" stroke="#2f5a9a" stroke-width="0.9"/><path d="M6 -10.6 V10.6" stroke="#2f5a9a" stroke-width="0.7"/><path d="M35 -8 L48 -1.2 M35 6 L48 1.2" stroke="#f4f7fb" stroke-width="1.3"/><path d="M47.5 -3 L53 0 L47.5 3 Z" fill="#f4f7fb"/><g fill="#3d64a0"><ellipse cx="24" cy="-9" rx="1.8" ry="1.5"/><ellipse cx="25" cy="-3" rx="1.6" ry="1.3"/><ellipse cx="25.5" cy="2.7" rx="1.6" ry="1.3"/><ellipse cx="25.5" cy="8.8" rx="1.9" ry="1.5"/></g></g><defs><radialGradient id="pg" cx="0.4" cy="0.3" r="0.8"><stop offset="0" stop-color="#ffffff"/><stop offset="0.6" stop-color="#dfe5ef"/><stop offset="1" stop-color="#8f9aae"/></radialGradient><linearGradient id="ring" x1="0" y1="0" x2="1" y2="0"><stop offset="0" stop-color="#c9ced6"/><stop offset="0.5" stop-color="#ffffff"/><stop offset="1" stop-color="#9aa3b0"/></linearGradient></defs><g transform="translate(1828.9 651.5)" ><g filter="url(#b1)"><circle r="30" fill="#1a3563" opacity="0.8"/></g><g transform="rotate(-11)"><path d="M-44 0 A44 11 0 0 1 44 0" fill="none" stroke="#1a3563" stroke-width="11"/><path d="M-44 0 A44 11 0 0 1 44 0" fill="none" stroke="#c3c9d2" stroke-width="6.5"/></g><circle r="29" fill="#1a3563"/><circle r="25" fill="url(#pg)"/><g fill="#6e8fc4"><circle cx="0" cy="-15.5" r="3.5"/><circle cx="12.2" cy="-11" r="3"/><circle cx="-11" cy="-10.6" r="2"/><circle cx="-13.3" cy="-2.2" r="3"/><circle cx="0" cy="-3.8" r="2"/><circle cx="12.9" cy="12.7" r="2.5"/><circle cx="-5.6" cy="17.3" r="2.5"/><circle cx="3.3" cy="18.9" r="1.5"/></g><g transform="rotate(-11)"><path d="M-44 0 A44 11 0 0 0 44 0" fill="none" stroke="#1a3563" stroke-width="11"/><path d="M-44 0 A44 11 0 0 0 44 0" fill="none" stroke="url(#ring)" stroke-width="6.5"/></g></g><rect x="-4" y="1044" width="7" height="40" rx="3" fill="#3a3f42"/></svg><div class="a" style="left:0px;top:0px;width:1920px;height:26px;background:#000"></div><div class="a" style="left:0px;top:26px;width:1920px;height:1px;background:rgba(0,0,0,0.55)"></div><div class="a" style="left:0;top:26px;width:8px;height:8px;background:radial-gradient(circle at 8px 8px,transparent 7px,#000 8px)"></div><div class="a" style="left:1912px;top:26px;width:8px;height:8px;background:radial-gradient(circle at 0 8px,transparent 7px,#000 8px)"></div><div class="t" style="left:12px;top:6px;font-weight:bold;color:#cccccc;font-size:13.6px;line-height:15.54px;">Činnosti</div><svg style="left:87px;top:5px" width="16" height="16" viewBox="0 0 16 16"><path d="M3.2 3.2 L12.8 12.8" stroke="#ccc" stroke-width="2.2"/><circle cx="2.8" cy="2.8" r="2.7" fill="#ccc"/><circle cx="13.2" cy="13.2" r="2.7" fill="#ccc"/><path d="M-0.5 1.2 L1.2 -0.5 L3.6 1.9 L1.9 3.6 Z" fill="#000"/><path d="M16.5 14.8 L14.8 16.5 L12.4 14.1 L14.1 12.4 Z" fill="#000"/><path d="M6 10 L15 1.2" stroke="#ccc" stroke-width="1.6"/><path d="M0.8 15.2 L6.2 9.8" stroke="#ccc" stroke-width="3" stroke-linecap="round"/></svg><div class="t" style="left:110px;top:6px;font-weight:bold;color:#cccccc;font-size:13.6px;line-height:15.54px;">Nastavení</div><svg style="left:179px;top:11px" width="10" height="5" viewBox="0 0 10 5"><path d="M0 0 H10 L5 5 Z" fill="#ccc"/></svg><div class="t" style="left:869px;top:5px;font-weight:bold;color:#cccccc;font-size:14px;line-height:16.00px;">Čtvrtek,&nbsp; 5. červenec, 22:33</div><svg style="left:1053px;top:9px" width="8" height="8"><circle cx="4" cy="4" r="3.3" fill="#ccc"/></svg><div class="t" style="left:1751px;top:5px;font-weight:bold;color:#cccccc;font-size:14px;line-height:16.00px;">cs</div><svg style="left:1771px;top:11px" width="10" height="5" viewBox="0 0 10 5"><path d="M0 0 H10 L5 5 Z" fill="#ccc"/></svg><svg style="left:1814px;top:6px" width="15" height="14" viewBox="0 0 15 14"><g fill="none" stroke-width="1.8"><path d="M1 5.2 A9 9 0 0 1 14 5.2" stroke="#777"/><path d="M3.3 7.8 A6 6 0 0 1 11.7 7.8" stroke="#ccc"/></g><circle cx="7.5" cy="11.8" r="1.8" fill="#ccc"/></svg><svg style="left:1841px;top:6px" width="17" height="15" viewBox="0 0 17 15"><path d="M0 5 H3 L7 1 V14 L3 10 H0 Z" fill="#ccc"/><g fill="none" stroke="#666" stroke-width="1.2"><path d="M8.5 4.5 Q10 7.5 8.5 10.5"/><path d="M10.5 3 Q12.8 7.5 10.5 12"/><path d="M12.5 1.5 Q15.5 7.5 12.5 13.5"/></g><path d="M12 11.5 L16 15 M16 11.5 L12 15" stroke="#ccc" stroke-width="1.4"/></svg><svg style="left:1871px;top:5px" width="13" height="16" viewBox="0 0 13 16"><path d="M4 0.5 H9 V2 H12.2 V15.5 H0.8 V2 H4 Z" fill="none" stroke="#ccc" stroke-width="1.3"/><rect x="3" y="5" width="7" height="1.8" fill="#ccc"/><rect x="3" y="8.3" width="7" height="1.8" fill="#ccc"/><rect x="3" y="11.6" width="7" height="1.8" fill="#ccc"/></svg><svg style="left:1895px;top:11px" width="10" height="5" viewBox="0 0 10 5"><path d="M0 0 H10 L5 5 Z" fill="#ccc"/></svg><div class="a" style="left:656px;top:313px;width:602px;height:521px;border-radius:6px 6px 0 0;box-shadow:0 2px 14px rgba(0,0,0,0.7)"></div><div class="a" style="left:580px;top:325px;width:754px;height:497px;border-radius:6px 6px 0 0;box-shadow:0 2px 14px rgba(0,0,0,0.7)"></div><div class="a" style="left:580px;top:325px;width:754px;height:497px;background:#a3a3a3;background-clip:padding-box;border:1px solid rgba(0,0,0,0.6);border-radius:6px 6px 0 0;box-shadow:inset 0 0 0 1px rgba(255,255,255,0.18)"></div><div class="a" style="left:581px;top:326px;width:752px;height:47px;background:#ababab;border-bottom:1px solid #6b6b6b;border-radius:5px 5px 0 0;box-shadow:inset 0 1px 0 rgba(255,255,255,0.18)"></div><div class="a" style="left:587px;top:332px;width:34px;height:34px;background:linear-gradient(#adadad,#989898);border:1px solid #7c7c7c;border-radius:4px"></div><svg style="left:600px;top:343px" width="8" height="12" viewBox="0 0 8 12"><path d="M6.5 1 L1.8 6 L6.5 11" fill="none" stroke="#222" stroke-width="2" stroke-linecap="round"/></svg><div class="a" style="left:1240px;top:335px;width:36px;height:28px;background:#999;border:1px solid #8f8f8f;border-radius:3px"></div><div class="a" style="left:1286px;top:332px;width:1px;height:34px;background:#9a9a9a"></div><svg style="left:1305px;top:344px" width="10" height="10" viewBox="0 0 10 10"><path d="M1.5 1.5 L8.5 8.5 M8.5 1.5 L1.5 8.5" stroke="#222" stroke-width="1.9"/></svg><div class="a" style="left:599px;top:391px;width:81px;height:412px;background:#b3b3b3;border:1px solid #8c8c8c;border-radius:0 0 4px 4px"></div><div class="a" style="left:600px;top:468px;width:80px;height:38px;background:#336699"></div><div class="a" style="left:600px;top:761px;width:80px;height:41px;background:#a8a8a8;border-top:1px solid #959595;border-radius:0 0 4px 4px"></div><div class="a" style="left:603px;top:765px;width:35px;height:34px;background:linear-gradient(#adadad,#989898);border:1px solid #7c7c7c;border-radius:4px 0 0 4px"></div><div class="a" style="left:637px;top:765px;width:43px;height:34px;background:linear-gradient(#adadad,#989898);border:1px solid #7c7c7c"></div><svg style="left:615px;top:777px" width="10" height="10" viewBox="0 0 10 10"><path d="M5 0.5 V9.5 M0.5 5 H9.5" stroke="#222" stroke-width="1.8"/></svg><svg style="left:648px;top:781px" width="10" height="2"><rect width="10" height="1.8" fill="#222"/></svg><svg style="left:614px;top:404px" width="15" height="14" viewBox="0 0 15 14"><g fill="none" stroke="#111" stroke-width="2.2"><path d="M1 5.5 A9 9 0 0 1 14 5.5"/><path d="M3.4 8.2 A6 6 0 0 1 11.6 8.2"/></g><circle cx="7.5" cy="12" r="1.8" fill="#111"/></svg><div class="t" style="left:640px;top:403px;color:#111;font-size:14px;line-height:16.00px;">Wi-Fi</div><svg style="left:614px;top:442px" width="16" height="15" viewBox="0 0 16 15"><g fill="#777"><rect x="5.5" y="0" width="5" height="4.5"/><rect x="0" y="9" width="5" height="4.5"/><rect x="7.5" y="4.5" width="1" height="3"/><rect x="2" y="6.5" width="12" height="1"/><rect x="2" y="6.5" width="1" height="3"/><rect x="13" y="6.5" width="1" height="3"/></g><path d="M10 10 L15 15 M15 10 L10 15" stroke="#111" stroke-width="1.6"/></svg><div class="t" style="left:640px;top:441px;color:#111;font-size:14px;line-height:16.00px;">Wired</div><svg style="left:614px;top:480px" width="15" height="15" viewBox="0 0 15 15"><path d="M4 5 A3.5 3.5 0 0 1 11 5 V6 H12 V11 H3 V6 H4 Z M5.5 6 H9.5 V5 A2 2 0 0 0 5.5 5 Z" fill="#b3b3b3" fill-rule="evenodd"/><rect x="7" y="11" width="1" height="2" fill="#b3b3b3"/><rect x="1" y="13" width="13" height="1.5" fill="#b3b3b3"/></svg><div class="t" style="left:640px;top:479px;color:#b3b3b3;font-size:14px;line-height:16.00px;">VPN</div><svg style="left:613px;top:517px" width="17" height="16" viewBox="0 0 17 16"><rect x="8.4" y="2" width="7.4" height="7.6" rx="1.4" fill="none" stroke="#000" stroke-width="2"/><path d="M11 12 L11.8 9.5 H15.5 L16.3 12 Z" fill="#000"/><rect x="2" y="5" width="7.8" height="6" rx="1.4" fill="#b3b3b3" stroke="#000" stroke-width="2"/><path d="M1.6 15 L2.8 12.3 H8.8 L10 15 Z" fill="#000"/></svg><div class="t" style="left:640px;top:517px;color:#111;font-size:14px;line-height:16.00px;">Proxy</div><div class="a" style="left:1230px;top:401px;width:85px;height:28px;background:#979797;border:1px solid #8a8a8a;border-radius:4px"></div><div class="a" style="left:1230px;top:401px;width:41px;height:28px;background:linear-gradient(#b5b5b5,#a5a5a5);border:1px solid #7c7c7c;border-radius:4px"></div><svg style="left:1285px;top:409px" width="12" height="12"><circle cx="6" cy="6" r="3.8" fill="none" stroke="#222" stroke-width="1.4"/></svg><div class="a" style="left:1281px;top:769px;width:34px;height:34px;background:linear-gradient(#adadad,#989898);border:1px solid #7c7c7c;border-radius:4px"></div><svg style="left:1290px;top:778px" width="16" height="16" viewBox="0 0 16 16"><g transform="translate(8 8)"><g fill="#222"><rect x="-0.95" y="-7" width="1.9" height="3.2" transform="rotate(0)"/><rect x="-0.95" y="-7" width="1.9" height="3.2" transform="rotate(45)"/><rect x="-0.95" y="-7" width="1.9" height="3.2" transform="rotate(90)"/><rect x="-0.95" y="-7" width="1.9" height="3.2" transform="rotate(135)"/><rect x="-0.95" y="-7" width="1.9" height="3.2" transform="rotate(180)"/><rect x="-0.95" y="-7" width="1.9" height="3.2" transform="rotate(225)"/><rect x="-0.95" y="-7" width="1.9" height="3.2" transform="rotate(270)"/><rect x="-0.95" y="-7" width="1.9" height="3.2" transform="rotate(315)"/></g><circle r="3.7" fill="none" stroke="#222" stroke-width="2"/></g></svg><div class="a" style="left:656px;top:313px;width:602px;height:521px;background:#a3a3a3;background-clip:padding-box;border:1px solid rgba(0,0,0,0.55);border-radius:6px 6px 0 0;box-shadow:inset 0 0 0 1px rgba(255,255,255,0.18)"></div><div class="a" style="left:657px;top:314px;width:600px;height:37px;background:#ababab;border-bottom:1px solid #6b6b6b;border-radius:5px 5px 0 0;box-shadow:inset 0 1px 0 rgba(255,255,255,0.18)"></div><div class="t" style="left:656px;width:600px;text-align:center;top:324px;font-weight:bold;color:#222;font-size:14px;line-height:16.00px;">Přidání VPN</div><svg style="left:1234px;top:327px" width="10" height="10" viewBox="0 0 10 10"><path d="M1.5 1.5 L8.5 8.5 M8.5 1.5 L1.5 8.5" stroke="#222" stroke-width="1.9"/></svg><div class="a" style="left:664px;top:358px;width:134px;height:432px;background:#b3b3b3;border:1px solid #8c8c8c"></div><div class="a" style="left:665px;top:359px;width:132px;height:26px;background:#336699"></div><div class="t" style="left:677px;top:364px;color:#b3b3b3;font-size:14px;line-height:16.00px;">Identita</div><div class="t" style="left:677px;top:390px;color:#111;font-size:14px;line-height:16.00px;">IPv4</div><div class="t" style="left:677px;top:415px;color:#111;font-size:14px;line-height:16.00px;">IPv6</div><div class="t" style="left:288px;width:600px;text-align:right;top:379px;color:#222;font-size:14px;line-height:16.00px;">Název</div><div class="a" style="left:894px;top:370px;width:306px;height:34px;background:#b3b3b3;border:1px solid #8c8c8c;border-radius:3px"></div><div class="t" style="left:903px;top:379px;color:#111;font-size:14px;line-height:16.00px;">VPN 1</div><div class="a" style="left:1000px;top:496px;width:188px;height:34px;background:#b3b3b3;border:1px solid #8c8c8c;border-radius:3px"></div><div class="a" style="left:1000px;top:572px;width:188px;height:34px;background:#b3b3b3;border:1px solid #8c8c8c;border-radius:3px"></div><div class="a" style="left:1000px;top:612px;width:188px;height:34px;background:#b3b3b3;border:1px solid #8c8c8c;border-radius:3px"></div><div class="a" style="left:1000px;top:682px;width:188px;height:34px;background:#b3b3b3;border:1px solid #8c8c8c;border-radius:3px"></div><svg style="left:1162px;top:620px" width="18" height="18" viewBox="0 0 18 18"><path d="M9 0.5 L17.5 9 L9 17.5 L0.5 9 Z" fill="#2e3436"/><text x="9" y="13.2" font-family="Liberation Sans" font-weight="bold" font-size="11" fill="#a3a3a3" text-anchor="middle">?</text></svg><div class="a" style="left:906px;top:732px;width:143px;height:34px;background:linear-gradient(#adadad,#989898);border:1px solid #7c7c7c;border-radius:4px"></div><div class="a" style="left:1053px;top:732px;width:133px;height:34px;background:linear-gradient(#adadad,#989898);border:1px solid #7c7c7c;border-radius:4px"></div><div class="t" style="left:1083px;top:741px;color:#222;font-size:14px;line-height:16.00px;">PPP Settings…</div><div class="a" style="left:1062px;top:741px;width:16px;height:16px;border:1px solid #555;border-radius:2px"></div><div class="t" style="left:937px;top:741px;color:#222;font-size:14px;line-height:16.00px;">IPsec Settings…</div><div class="a" style="left:915px;top:741px;width:16px;height:16px;border:1px solid #555;border-radius:2px"></div><div class="a" style="left:1076px;top:792px;width:85px;height:34px;background:linear-gradient(#adadad,#989898);border:1px solid #7c7c7c;border-radius:4px"></div><div class="a" style="left:1165px;top:792px;width:85px;height:34px;background:#a6a6a6;border:1px solid #8f8f8f;border-radius:4px"></div><div class="t" style="left:818px;width:600px;text-align:center;top:801px;color:#222;font-size:14px;line-height:16.00px;">Zrušit</div><div class="t" style="left:907px;width:600px;text-align:center;top:801px;color:#7a7a7a;font-size:14px;line-height:16.00px;">Přidat</div><div class="a" style="left:774px;top:395px;width:366px;height:357px;background:#e7e7e5;background-clip:padding-box;border:1px solid rgba(0,0,0,0.62);border-radius:7px 7px 2px 2px;box-shadow:inset 0 0 0 1px rgba(255,255,255,0.55),0 2px 5px rgba(0,0,0,0.3)"></div><div class="a" style="left:775px;top:396px;width:364px;height:37px;background:linear-gradient(#f4f4f4 80%,#ececec);border-bottom:1px solid #8f8f8c;border-radius:5px 5px 0 0;box-shadow:inset 0 1px 0 #fff"></div><div class="t" style="left:656px;width:600px;text-align:center;top:406px;font-weight:bold;color:#2e3436;font-size:14px;line-height:16.00px;">L2TP IPsec Options</div><svg style="left:1116px;top:409px" width="10" height="10" viewBox="0 0 10 10"><path d="M1.5 1.5 L8.5 8.5 M8.5 1.5 L1.5 8.5" stroke="#2e3436" stroke-width="1.9"/></svg><div class="a" style="left:786px;top:444px;width:16px;height:16px;background:linear-gradient(#fbfbfb,#e8e8e8);border:1px solid #a8a8a5;border-radius:3px"></div><svg style="left:786px;top:444px" width="16" height="16" viewBox="0 0 16 16"><path d="M3.5 8 L6.5 11 L12.5 4.5" fill="none" stroke="#2e3436" stroke-width="2.4"/></svg><div class="t" style="left:806px;top:444px;color:#2e3436;font-size:14px;line-height:16.00px;">Enable IPsec tunnel to L2TP host</div><div class="t" style="left:782px;top:471px;font-weight:bold;color:#2e3436;font-size:14px;line-height:16.00px;">Obecné</div><div class="t" style="left:794px;top:503px;color:#2e3436;font-size:14px;line-height:16.00px;">Gateway ID:</div><div class="t" style="left:794px;top:541px;color:#2e3436;font-size:14px;line-height:16.00px;">Pre-shared key:</div><svg style="left:788px;top:580px" width="6" height="10" viewBox="0 0 6 10"><path d="M0 0 L5.5 5 L0 10 Z" fill="#2e3436"/></svg><div class="t" style="left:798px;top:577px;font-weight:bold;color:#2e3436;font-size:14px;line-height:16.00px;">Advanced</div><div class="a" style="left:912px;top:494px;width:220px;height:34px;background:#fff;border:1px solid #a8a8a5;border-radius:3px"></div><div class="a" style="left:912px;top:532px;width:220px;height:34px;background:#fff;border:1px solid #a8a8a5;border-radius:3px"></div><div class="a" style="left:958px;top:710px;width:85px;height:34px;background:linear-gradient(#f4f4f4,#dedede);border:1px solid #a8a8a5;border-radius:3px"></div><div class="a" style="left:1047px;top:710px;width:85px;height:34px;background:linear-gradient(#f4f4f4,#dedede);border:1px solid #a8a8a5;border-radius:3px"></div><div class="t" style="left:700px;width:600px;text-align:center;top:719px;color:#2e3436;font-size:14px;line-height:16.00px;">Zrušit</div><div class="t" style="left:789px;width:600px;text-align:center;top:719px;color:#2e3436;font-size:14px;line-height:16.00px;">Budiž</div></body></html>
